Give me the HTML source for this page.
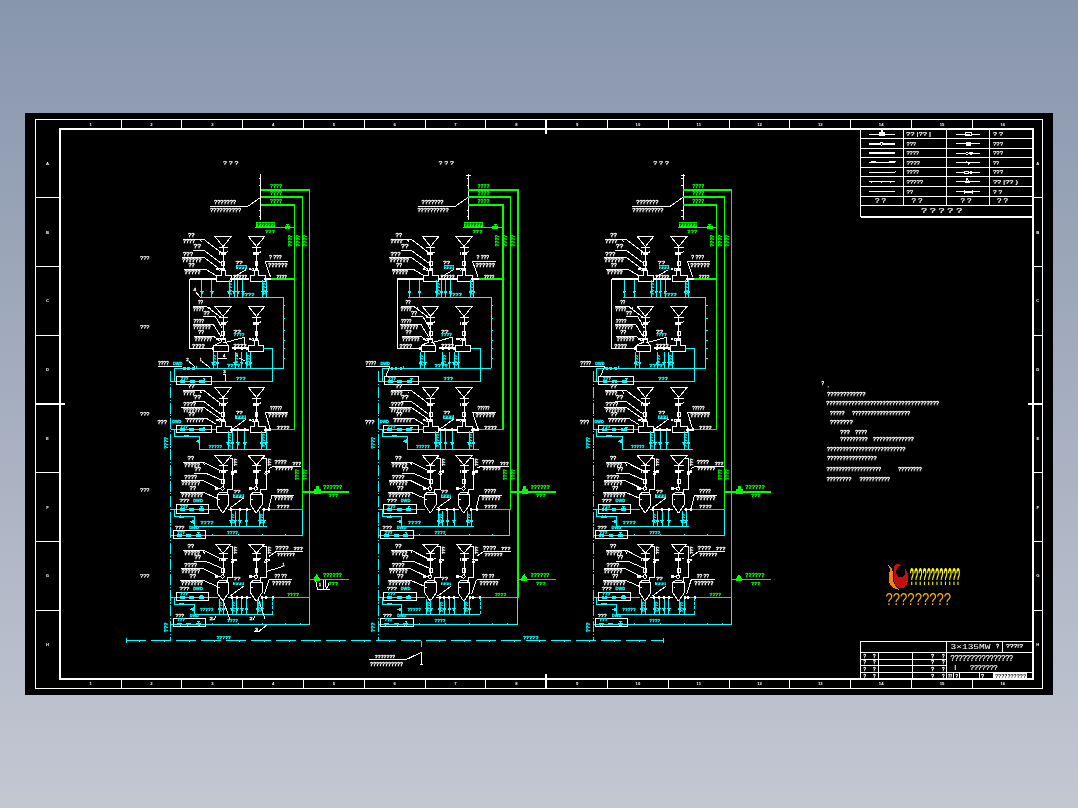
<!DOCTYPE html>
<html lang="zh"><head><meta charset="utf-8"><title>3×135MW</title>
<style>
html,body{margin:0;padding:0;}
body{width:1078px;height:808px;overflow:hidden;background:linear-gradient(180deg,#8896ad 0%,#c3c7d2 100%);font-family:"Liberation Sans", sans-serif;}
#sheet{position:absolute;left:25px;top:113px;width:1028px;height:582px;background:#000;}
svg{position:absolute;left:0;top:0;font-family:"Liberation Sans", sans-serif;will-change:transform;}
</style></head><body>
<div id="sheet"></div>
<svg width="1078" height="808" viewBox="0 0 1078 808" shape-rendering="crispEdges">
<rect x="35.5" y="119.5" width="1007" height="569" stroke="#ffffff" stroke-width="1" fill="none"/>
<rect x="60.3" y="129.2" width="972.9" height="550" stroke="#ffffff" stroke-width="2" fill="none"/>
<line x1="121.11" y1="119.5" x2="121.11" y2="129.2" stroke="#ffffff" stroke-width="1"/>
<line x1="121.11" y1="679.2" x2="121.11" y2="688.5" stroke="#ffffff" stroke-width="1"/>
<line x1="181.91" y1="119.5" x2="181.91" y2="129.2" stroke="#ffffff" stroke-width="1"/>
<line x1="181.91" y1="679.2" x2="181.91" y2="688.5" stroke="#ffffff" stroke-width="1"/>
<line x1="242.72" y1="119.5" x2="242.72" y2="129.2" stroke="#ffffff" stroke-width="1"/>
<line x1="242.72" y1="679.2" x2="242.72" y2="688.5" stroke="#ffffff" stroke-width="1"/>
<line x1="303.53" y1="119.5" x2="303.53" y2="129.2" stroke="#ffffff" stroke-width="1"/>
<line x1="303.53" y1="679.2" x2="303.53" y2="688.5" stroke="#ffffff" stroke-width="1"/>
<line x1="364.33" y1="119.5" x2="364.33" y2="129.2" stroke="#ffffff" stroke-width="1"/>
<line x1="364.33" y1="679.2" x2="364.33" y2="688.5" stroke="#ffffff" stroke-width="1"/>
<line x1="425.14" y1="119.5" x2="425.14" y2="129.2" stroke="#ffffff" stroke-width="1"/>
<line x1="425.14" y1="679.2" x2="425.14" y2="688.5" stroke="#ffffff" stroke-width="1"/>
<line x1="485.94" y1="119.5" x2="485.94" y2="129.2" stroke="#ffffff" stroke-width="1"/>
<line x1="485.94" y1="679.2" x2="485.94" y2="688.5" stroke="#ffffff" stroke-width="1"/>
<line x1="546.75" y1="119.5" x2="546.75" y2="129.2" stroke="#ffffff" stroke-width="1"/>
<line x1="546.75" y1="679.2" x2="546.75" y2="688.5" stroke="#ffffff" stroke-width="1"/>
<line x1="607.56" y1="119.5" x2="607.56" y2="129.2" stroke="#ffffff" stroke-width="1"/>
<line x1="607.56" y1="679.2" x2="607.56" y2="688.5" stroke="#ffffff" stroke-width="1"/>
<line x1="668.36" y1="119.5" x2="668.36" y2="129.2" stroke="#ffffff" stroke-width="1"/>
<line x1="668.36" y1="679.2" x2="668.36" y2="688.5" stroke="#ffffff" stroke-width="1"/>
<line x1="729.17" y1="119.5" x2="729.17" y2="129.2" stroke="#ffffff" stroke-width="1"/>
<line x1="729.17" y1="679.2" x2="729.17" y2="688.5" stroke="#ffffff" stroke-width="1"/>
<line x1="789.98" y1="119.5" x2="789.98" y2="129.2" stroke="#ffffff" stroke-width="1"/>
<line x1="789.98" y1="679.2" x2="789.98" y2="688.5" stroke="#ffffff" stroke-width="1"/>
<line x1="850.78" y1="119.5" x2="850.78" y2="129.2" stroke="#ffffff" stroke-width="1"/>
<line x1="850.78" y1="679.2" x2="850.78" y2="688.5" stroke="#ffffff" stroke-width="1"/>
<line x1="911.59" y1="119.5" x2="911.59" y2="129.2" stroke="#ffffff" stroke-width="1"/>
<line x1="911.59" y1="679.2" x2="911.59" y2="688.5" stroke="#ffffff" stroke-width="1"/>
<line x1="972.39" y1="119.5" x2="972.39" y2="129.2" stroke="#ffffff" stroke-width="1"/>
<line x1="972.39" y1="679.2" x2="972.39" y2="688.5" stroke="#ffffff" stroke-width="1"/>
<line x1="35.5" y1="197.95" x2="60.3" y2="197.95" stroke="#ffffff" stroke-width="1"/>
<line x1="1033.2" y1="197.95" x2="1042.5" y2="197.95" stroke="#ffffff" stroke-width="1"/>
<line x1="35.5" y1="266.7" x2="60.3" y2="266.7" stroke="#ffffff" stroke-width="1"/>
<line x1="1033.2" y1="266.7" x2="1042.5" y2="266.7" stroke="#ffffff" stroke-width="1"/>
<line x1="35.5" y1="335.45" x2="60.3" y2="335.45" stroke="#ffffff" stroke-width="1"/>
<line x1="1033.2" y1="335.45" x2="1042.5" y2="335.45" stroke="#ffffff" stroke-width="1"/>
<line x1="35.5" y1="404.2" x2="60.3" y2="404.2" stroke="#ffffff" stroke-width="1"/>
<line x1="1033.2" y1="404.2" x2="1042.5" y2="404.2" stroke="#ffffff" stroke-width="1"/>
<line x1="35.5" y1="472.95" x2="60.3" y2="472.95" stroke="#ffffff" stroke-width="1"/>
<line x1="1033.2" y1="472.95" x2="1042.5" y2="472.95" stroke="#ffffff" stroke-width="1"/>
<line x1="35.5" y1="541.7" x2="60.3" y2="541.7" stroke="#ffffff" stroke-width="1"/>
<line x1="1033.2" y1="541.7" x2="1042.5" y2="541.7" stroke="#ffffff" stroke-width="1"/>
<line x1="35.5" y1="610.45" x2="60.3" y2="610.45" stroke="#ffffff" stroke-width="1"/>
<line x1="1033.2" y1="610.45" x2="1042.5" y2="610.45" stroke="#ffffff" stroke-width="1"/>
<line x1="546.3" y1="119.5" x2="546.3" y2="134" stroke="#ffffff" stroke-width="2"/>
<line x1="546.3" y1="674" x2="546.3" y2="688.5" stroke="#ffffff" stroke-width="2"/>
<line x1="35.5" y1="404" x2="65" y2="404" stroke="#ffffff" stroke-width="2"/>
<line x1="1028" y1="404" x2="1042.5" y2="404" stroke="#ffffff" stroke-width="2"/>
<text x="90.7" y="125.8" font-size="4.2" fill="#fff" text-anchor="middle" font-weight="bold">1</text>
<text x="90.7" y="685.4" font-size="4.2" fill="#fff" text-anchor="middle" font-weight="bold">1</text>
<text x="151.51" y="125.8" font-size="4.2" fill="#fff" text-anchor="middle" font-weight="bold">2</text>
<text x="151.51" y="685.4" font-size="4.2" fill="#fff" text-anchor="middle" font-weight="bold">2</text>
<text x="212.32" y="125.8" font-size="4.2" fill="#fff" text-anchor="middle" font-weight="bold">3</text>
<text x="212.32" y="685.4" font-size="4.2" fill="#fff" text-anchor="middle" font-weight="bold">3</text>
<text x="273.12" y="125.8" font-size="4.2" fill="#fff" text-anchor="middle" font-weight="bold">4</text>
<text x="273.12" y="685.4" font-size="4.2" fill="#fff" text-anchor="middle" font-weight="bold">4</text>
<text x="333.93" y="125.8" font-size="4.2" fill="#fff" text-anchor="middle" font-weight="bold">5</text>
<text x="333.93" y="685.4" font-size="4.2" fill="#fff" text-anchor="middle" font-weight="bold">5</text>
<text x="394.73" y="125.8" font-size="4.2" fill="#fff" text-anchor="middle" font-weight="bold">6</text>
<text x="394.73" y="685.4" font-size="4.2" fill="#fff" text-anchor="middle" font-weight="bold">6</text>
<text x="455.54" y="125.8" font-size="4.2" fill="#fff" text-anchor="middle" font-weight="bold">7</text>
<text x="455.54" y="685.4" font-size="4.2" fill="#fff" text-anchor="middle" font-weight="bold">7</text>
<text x="516.35" y="125.8" font-size="4.2" fill="#fff" text-anchor="middle" font-weight="bold">8</text>
<text x="516.35" y="685.4" font-size="4.2" fill="#fff" text-anchor="middle" font-weight="bold">8</text>
<text x="577.15" y="125.8" font-size="4.2" fill="#fff" text-anchor="middle" font-weight="bold">9</text>
<text x="577.15" y="685.4" font-size="4.2" fill="#fff" text-anchor="middle" font-weight="bold">9</text>
<text x="637.96" y="125.8" font-size="4.2" fill="#fff" text-anchor="middle" font-weight="bold">10</text>
<text x="637.96" y="685.4" font-size="4.2" fill="#fff" text-anchor="middle" font-weight="bold">10</text>
<text x="698.77" y="125.8" font-size="4.2" fill="#fff" text-anchor="middle" font-weight="bold">11</text>
<text x="698.77" y="685.4" font-size="4.2" fill="#fff" text-anchor="middle" font-weight="bold">11</text>
<text x="759.57" y="125.8" font-size="4.2" fill="#fff" text-anchor="middle" font-weight="bold">12</text>
<text x="759.57" y="685.4" font-size="4.2" fill="#fff" text-anchor="middle" font-weight="bold">12</text>
<text x="820.38" y="125.8" font-size="4.2" fill="#fff" text-anchor="middle" font-weight="bold">13</text>
<text x="820.38" y="685.4" font-size="4.2" fill="#fff" text-anchor="middle" font-weight="bold">13</text>
<text x="881.18" y="125.8" font-size="4.2" fill="#fff" text-anchor="middle" font-weight="bold">14</text>
<text x="881.18" y="685.4" font-size="4.2" fill="#fff" text-anchor="middle" font-weight="bold">14</text>
<text x="941.99" y="125.8" font-size="4.2" fill="#fff" text-anchor="middle" font-weight="bold">15</text>
<text x="941.99" y="685.4" font-size="4.2" fill="#fff" text-anchor="middle" font-weight="bold">15</text>
<text x="1002.8" y="125.8" font-size="4.2" fill="#fff" text-anchor="middle" font-weight="bold">16</text>
<text x="1002.8" y="685.4" font-size="4.2" fill="#fff" text-anchor="middle" font-weight="bold">16</text>
<text x="47.5" y="164.97" font-size="4.2" fill="#fff" text-anchor="middle" font-weight="bold">A</text>
<text x="1037.8" y="164.97" font-size="4.2" fill="#fff" text-anchor="middle" font-weight="bold">A</text>
<text x="47.5" y="233.72" font-size="4.2" fill="#fff" text-anchor="middle" font-weight="bold">B</text>
<text x="1037.8" y="233.72" font-size="4.2" fill="#fff" text-anchor="middle" font-weight="bold">B</text>
<text x="47.5" y="302.47" font-size="4.2" fill="#fff" text-anchor="middle" font-weight="bold">C</text>
<text x="1037.8" y="302.47" font-size="4.2" fill="#fff" text-anchor="middle" font-weight="bold">C</text>
<text x="47.5" y="371.22" font-size="4.2" fill="#fff" text-anchor="middle" font-weight="bold">D</text>
<text x="1037.8" y="371.22" font-size="4.2" fill="#fff" text-anchor="middle" font-weight="bold">D</text>
<text x="47.5" y="439.97" font-size="4.2" fill="#fff" text-anchor="middle" font-weight="bold">E</text>
<text x="1037.8" y="439.97" font-size="4.2" fill="#fff" text-anchor="middle" font-weight="bold">E</text>
<text x="47.5" y="508.72" font-size="4.2" fill="#fff" text-anchor="middle" font-weight="bold">F</text>
<text x="1037.8" y="508.72" font-size="4.2" fill="#fff" text-anchor="middle" font-weight="bold">F</text>
<text x="47.5" y="577.48" font-size="4.2" fill="#fff" text-anchor="middle" font-weight="bold">G</text>
<text x="1037.8" y="577.48" font-size="4.2" fill="#fff" text-anchor="middle" font-weight="bold">G</text>
<text x="47.5" y="646.23" font-size="4.2" fill="#fff" text-anchor="middle" font-weight="bold">H</text>
<text x="1037.8" y="646.23" font-size="4.2" fill="#fff" text-anchor="middle" font-weight="bold">H</text>
<line x1="860.5" y1="129.2" x2="860.5" y2="216.8" stroke="#ffffff" stroke-width="1.2"/>
<line x1="903.5" y1="129.2" x2="903.5" y2="205.5" stroke="#ffffff" stroke-width="1"/>
<line x1="946.5" y1="129.2" x2="946.5" y2="205.5" stroke="#ffffff" stroke-width="1"/>
<line x1="989.5" y1="129.2" x2="989.5" y2="205.5" stroke="#ffffff" stroke-width="1"/>
<line x1="860.5" y1="138.5" x2="1033.2" y2="138.5" stroke="#ffffff" stroke-width="1"/>
<line x1="860.5" y1="148.5" x2="1033.2" y2="148.5" stroke="#ffffff" stroke-width="1"/>
<line x1="860.5" y1="157.5" x2="1033.2" y2="157.5" stroke="#ffffff" stroke-width="1"/>
<line x1="860.5" y1="167.5" x2="1033.2" y2="167.5" stroke="#ffffff" stroke-width="1"/>
<line x1="860.5" y1="176.5" x2="1033.2" y2="176.5" stroke="#ffffff" stroke-width="1"/>
<line x1="860.5" y1="186.5" x2="1033.2" y2="186.5" stroke="#ffffff" stroke-width="1"/>
<line x1="860.5" y1="196.5" x2="1033.2" y2="196.5" stroke="#ffffff" stroke-width="1"/>
<line x1="860.5" y1="205.5" x2="1033.2" y2="205.5" stroke="#ffffff" stroke-width="1"/>
<line x1="860.5" y1="216.8" x2="1033.2" y2="216.8" stroke="#ffffff" stroke-width="1.6"/>
<line x1="869" y1="134.15" x2="895" y2="134.15" stroke="#ffffff" stroke-width="1"/>
<line x1="956" y1="134.15" x2="980" y2="134.15" stroke="#ffffff" stroke-width="1"/>
<line x1="869" y1="143.8" x2="895" y2="143.8" stroke="#ffffff" stroke-width="1.4"/>
<line x1="956" y1="143.8" x2="980" y2="143.8" stroke="#ffffff" stroke-width="1"/>
<line x1="869" y1="153.3" x2="895" y2="153.3" stroke="#ffffff" stroke-width="1.8"/>
<line x1="956" y1="153.3" x2="980" y2="153.3" stroke="#ffffff" stroke-width="1"/>
<line x1="869" y1="162.8" x2="895" y2="162.8" stroke="#ffffff" stroke-width="1"/>
<line x1="956" y1="162.8" x2="980" y2="162.8" stroke="#ffffff" stroke-width="1"/>
<line x1="869" y1="172.3" x2="895" y2="172.3" stroke="#ffffff" stroke-width="1"/>
<line x1="956" y1="172.3" x2="980" y2="172.3" stroke="#ffffff" stroke-width="1"/>
<line x1="869" y1="181.8" x2="895" y2="181.8" stroke="#ffffff" stroke-width="1"/>
<line x1="956" y1="181.8" x2="980" y2="181.8" stroke="#ffffff" stroke-width="1"/>
<line x1="869" y1="191.8" x2="895" y2="191.8" stroke="#ffffff" stroke-width="1"/>
<line x1="956" y1="191.8" x2="980" y2="191.8" stroke="#ffffff" stroke-width="1"/>
<rect x="879.5" y="132.15" width="5" height="3.5" stroke="#ffffff" stroke-width="1" fill="#ffffff"/>
<line x1="882" y1="129.65" x2="882" y2="134.15" stroke="#ffffff" stroke-width="1.4"/>
<circle cx="881.5" cy="143.8" r="1.5" stroke="#ffffff" stroke-width="1" fill="#000"/>
<line x1="871" y1="161.8" x2="876" y2="161.8" stroke="#ffffff" stroke-width="1"/>
<line x1="889" y1="161.8" x2="896" y2="161.8" stroke="#ffffff" stroke-width="1"/>
<line x1="895" y1="170.8" x2="895" y2="172.3" stroke="#ffffff" stroke-width="1"/>
<line x1="871" y1="181.8" x2="871" y2="183.3" stroke="#ffffff" stroke-width="1"/>
<line x1="881.5" y1="181.8" x2="881.5" y2="183.3" stroke="#ffffff" stroke-width="1"/>
<line x1="890" y1="181.8" x2="890" y2="183.3" stroke="#ffffff" stroke-width="1"/>
<rect x="965" y="132.55" width="6" height="3.2" stroke="#ffffff" stroke-width="1" fill="#000"/>
<line x1="966" y1="134.15" x2="970" y2="134.15" stroke="#ffffff" stroke-width="1"/>
<rect x="966" y="142" width="4.5" height="3.6" stroke="#ffffff" stroke-width="1" fill="#ffffff"/>
<circle cx="967" cy="153.3" r="1.2" stroke="#ffffff" stroke-width="1" fill="#000"/>
<circle cx="971" cy="153.3" r="1.3" stroke="#ffffff" stroke-width="1" fill="#ffffff"/>
<polyline points="966.5,161.3 968.5,164 970,162.8" stroke="#ffffff" stroke-width="1" fill="none"/>
<rect x="964.5" y="171" width="3.5" height="2.6" stroke="#ffffff" stroke-width="1" fill="#000"/>
<circle cx="971" cy="172.3" r="1.1" stroke="#ffffff" stroke-width="1" fill="#ffffff"/>
<polyline points="964.5,182.8 969.5,182.8 967,177.8 966,182.8" stroke="#ffffff" stroke-width="1" fill="none"/>
<line x1="964.5" y1="189.8" x2="964.5" y2="193.8" stroke="#ffffff" stroke-width="1"/>
<line x1="972" y1="189.8" x2="972" y2="193.8" stroke="#ffffff" stroke-width="1"/>
<line x1="964.5" y1="191.8" x2="972" y2="191.8" stroke="#ffffff" stroke-width="2"/>
<text x="906" y="136.18" font-size="6.2" fill="#ffffff" textLength="25" lengthAdjust="spacingAndGlyphs" stroke="#ffffff" stroke-width="0.22">?? |?? |</text>
<text x="993" y="136.18" font-size="6.2" fill="#ffffff" textLength="10" lengthAdjust="spacingAndGlyphs" stroke="#ffffff" stroke-width="0.22">? ?</text>
<text x="906.5" y="145.83" font-size="6.2" fill="#ffffff" textLength="9.5" lengthAdjust="spacingAndGlyphs" stroke="#ffffff" stroke-width="0.22">???</text>
<text x="993" y="145.83" font-size="6.2" fill="#ffffff" textLength="10" lengthAdjust="spacingAndGlyphs" stroke="#ffffff" stroke-width="0.22">???</text>
<text x="906.5" y="155.33" font-size="6.2" fill="#ffffff" textLength="12.5" lengthAdjust="spacingAndGlyphs" stroke="#ffffff" stroke-width="0.22">????</text>
<text x="993" y="155.33" font-size="6.2" fill="#ffffff" textLength="10" lengthAdjust="spacingAndGlyphs" stroke="#ffffff" stroke-width="0.22">???</text>
<text x="906.5" y="164.83" font-size="6.2" fill="#ffffff" textLength="13.5" lengthAdjust="spacingAndGlyphs" stroke="#ffffff" stroke-width="0.22">????</text>
<text x="993" y="164.83" font-size="6.2" fill="#ffffff" textLength="6" lengthAdjust="spacingAndGlyphs" stroke="#ffffff" stroke-width="0.22">??</text>
<text x="906.5" y="174.33" font-size="6.2" fill="#ffffff" textLength="12.5" lengthAdjust="spacingAndGlyphs" stroke="#ffffff" stroke-width="0.22">????</text>
<text x="993" y="174.33" font-size="6.2" fill="#ffffff" textLength="10" lengthAdjust="spacingAndGlyphs" stroke="#ffffff" stroke-width="0.22">???</text>
<text x="906.5" y="183.83" font-size="6.2" fill="#ffffff" textLength="16.5" lengthAdjust="spacingAndGlyphs" stroke="#ffffff" stroke-width="0.22">?????</text>
<text x="993" y="183.83" font-size="6.2" fill="#ffffff" textLength="25" lengthAdjust="spacingAndGlyphs" stroke="#ffffff" stroke-width="0.22">?? |?? )</text>
<text x="906.5" y="193.83" font-size="6.2" fill="#ffffff" textLength="6.5" lengthAdjust="spacingAndGlyphs" stroke="#ffffff" stroke-width="0.22">??</text>
<text x="993" y="193.83" font-size="6.2" fill="#ffffff" textLength="9" lengthAdjust="spacingAndGlyphs" stroke="#ffffff" stroke-width="0.22">? ?</text>
<text x="875" y="203.4" font-size="6.4" fill="#ffffff" textLength="11" lengthAdjust="spacingAndGlyphs" stroke="#ffffff" stroke-width="0.22">? ?</text>
<text x="911.5" y="203.4" font-size="6.4" fill="#ffffff" textLength="11" lengthAdjust="spacingAndGlyphs" stroke="#ffffff" stroke-width="0.22">? ?</text>
<text x="960.5" y="203.4" font-size="6.4" fill="#ffffff" textLength="11" lengthAdjust="spacingAndGlyphs" stroke="#ffffff" stroke-width="0.22">? ?</text>
<text x="997" y="203.4" font-size="6.4" fill="#ffffff" textLength="11" lengthAdjust="spacingAndGlyphs" stroke="#ffffff" stroke-width="0.22">? ?</text>
<text x="921" y="213.43" font-size="6.6" fill="#ffffff" textLength="41" lengthAdjust="spacingAndGlyphs" stroke="#ffffff" stroke-width="0.22">? ? ? ? ?</text>
<line x1="860.5" y1="641.5" x2="1033.2" y2="641.5" stroke="#ffffff" stroke-width="1.6"/>
<line x1="860.5" y1="640.7" x2="860.5" y2="679.2" stroke="#ffffff" stroke-width="1.6"/>
<line x1="946.8" y1="641.5" x2="946.8" y2="679.2" stroke="#ffffff" stroke-width="1.2"/>
<line x1="1002.3" y1="641.5" x2="1002.3" y2="652.3" stroke="#ffffff" stroke-width="1"/>
<line x1="860.5" y1="652.3" x2="1033.2" y2="652.3" stroke="#ffffff" stroke-width="1.2"/>
<line x1="860.5" y1="659" x2="946.8" y2="659" stroke="#ffffff" stroke-width="1"/>
<line x1="860.5" y1="665.6" x2="946.8" y2="665.6" stroke="#ffffff" stroke-width="1"/>
<line x1="860.5" y1="672.3" x2="1033.2" y2="672.3" stroke="#ffffff" stroke-width="1"/>
<line x1="878.2" y1="652.3" x2="878.2" y2="679.2" stroke="#ffffff" stroke-width="1"/>
<line x1="912.5" y1="652.3" x2="912.5" y2="679.2" stroke="#ffffff" stroke-width="1"/>
<line x1="953.5" y1="672.3" x2="953.5" y2="679.2" stroke="#ffffff" stroke-width="1"/>
<line x1="959.5" y1="672.3" x2="959.5" y2="679.2" stroke="#ffffff" stroke-width="1"/>
<line x1="979.4" y1="672.3" x2="979.4" y2="679.2" stroke="#ffffff" stroke-width="1"/>
<line x1="993.2" y1="672.3" x2="993.2" y2="679.2" stroke="#ffffff" stroke-width="1"/>
<rect x="994" y="673.3" width="33" height="5.1" stroke="#ffffff" stroke-width="0" fill="#ffffff"/>
<text x="995" y="677.6" font-size="5" fill="#000" textLength="31" lengthAdjust="spacingAndGlyphs" font-weight="bold">??????????</text>
<text x="863.5" y="657.57" font-size="4.5" fill="#ffffff" textLength="2.5" lengthAdjust="spacingAndGlyphs" stroke="#ffffff" stroke-width="0.3">?</text>
<text x="873" y="657.57" font-size="4.5" fill="#ffffff" textLength="2.5" lengthAdjust="spacingAndGlyphs" stroke="#ffffff" stroke-width="0.3">?</text>
<text x="931" y="657.57" font-size="4.5" fill="#ffffff" textLength="3" lengthAdjust="spacingAndGlyphs" stroke="#ffffff" stroke-width="0.3">?</text>
<text x="942" y="657.57" font-size="4.5" fill="#ffffff" textLength="2.5" lengthAdjust="spacingAndGlyphs" stroke="#ffffff" stroke-width="0.3">?</text>
<text x="863.5" y="664.22" font-size="4.5" fill="#ffffff" textLength="2.5" lengthAdjust="spacingAndGlyphs" stroke="#ffffff" stroke-width="0.3">?</text>
<text x="873" y="664.22" font-size="4.5" fill="#ffffff" textLength="2.5" lengthAdjust="spacingAndGlyphs" stroke="#ffffff" stroke-width="0.3">?</text>
<text x="931" y="664.22" font-size="4.5" fill="#ffffff" textLength="3" lengthAdjust="spacingAndGlyphs" stroke="#ffffff" stroke-width="0.3">?</text>
<text x="942" y="664.22" font-size="4.5" fill="#ffffff" textLength="2.5" lengthAdjust="spacingAndGlyphs" stroke="#ffffff" stroke-width="0.3">?</text>
<text x="863.5" y="670.87" font-size="4.5" fill="#ffffff" textLength="2.5" lengthAdjust="spacingAndGlyphs" stroke="#ffffff" stroke-width="0.3">?</text>
<text x="873" y="670.87" font-size="4.5" fill="#ffffff" textLength="2.5" lengthAdjust="spacingAndGlyphs" stroke="#ffffff" stroke-width="0.3">?</text>
<text x="931" y="670.87" font-size="4.5" fill="#ffffff" textLength="3" lengthAdjust="spacingAndGlyphs" stroke="#ffffff" stroke-width="0.3">?</text>
<text x="942" y="670.87" font-size="4.5" fill="#ffffff" textLength="2.5" lengthAdjust="spacingAndGlyphs" stroke="#ffffff" stroke-width="0.3">?</text>
<text x="863.5" y="677.67" font-size="4.5" fill="#ffffff" textLength="2.5" lengthAdjust="spacingAndGlyphs" stroke="#ffffff" stroke-width="0.3">?</text>
<text x="873" y="677.67" font-size="4.5" fill="#ffffff" textLength="2.5" lengthAdjust="spacingAndGlyphs" stroke="#ffffff" stroke-width="0.3">?</text>
<text x="931" y="677.67" font-size="4.5" fill="#ffffff" textLength="3" lengthAdjust="spacingAndGlyphs" stroke="#ffffff" stroke-width="0.3">?</text>
<text x="942" y="677.67" font-size="4.5" fill="#ffffff" textLength="2.5" lengthAdjust="spacingAndGlyphs" stroke="#ffffff" stroke-width="0.3">?</text>
<text x="948" y="677.62" font-size="4.5" fill="#ffffff" textLength="4" lengthAdjust="spacingAndGlyphs" stroke="#ffffff" stroke-width="0.3">??</text>
<text x="955.5" y="677.62" font-size="4.5" fill="#ffffff" textLength="2.5" lengthAdjust="spacingAndGlyphs" stroke="#ffffff" stroke-width="0.3">?</text>
<text x="981" y="677.62" font-size="4.5" fill="#ffffff" textLength="3" lengthAdjust="spacingAndGlyphs" stroke="#ffffff" stroke-width="0.3">?</text>
<text x="950.5" y="649.3" font-size="8" fill="#fff" textLength="40" lengthAdjust="spacingAndGlyphs" font-family='"Liberation Mono", monospace'>3×135MW</text>
<text x="996" y="648.18" font-size="5.5" fill="#ffffff" textLength="3" lengthAdjust="spacingAndGlyphs" stroke="#ffffff" stroke-width="0.3">?</text>
<text x="1006" y="648.36" font-size="6" fill="#ffffff" textLength="17" lengthAdjust="spacingAndGlyphs" stroke="#ffffff" stroke-width="0.22">???!?</text>
<text x="950.5" y="661" font-size="8.6" fill="#ffffff" textLength="62.5" lengthAdjust="spacingAndGlyphs" stroke="#ffffff" stroke-width="0.22">????????????????</text>
<text x="954.4" y="669.52" font-size="7" fill="#ffffff" textLength="1.6" lengthAdjust="spacingAndGlyphs" stroke="#ffffff" stroke-width="0.22">i</text>
<text x="970" y="669.74" font-size="7.6" fill="#ffffff" textLength="27.5" lengthAdjust="spacingAndGlyphs" stroke="#ffffff" stroke-width="0.22">???????</text>
<text x="821.5" y="385.12" font-size="4.5" fill="#ffffff" textLength="2.5" lengthAdjust="spacingAndGlyphs" stroke="#ffffff" stroke-width="0.3">?</text>
<text x="827.5" y="387.3" font-size="3.6" fill="#ffffff" textLength="1.5" lengthAdjust="spacingAndGlyphs" stroke="#ffffff" stroke-width="0.3">.</text>
<text x="827" y="395.83" font-size="4.68" fill="#ffffff" textLength="38.4" lengthAdjust="spacingAndGlyphs" stroke="#ffffff" stroke-width="0.3">????????????</text>
<text x="826" y="405.28" font-size="4.68" fill="#ffffff" textLength="113" lengthAdjust="spacingAndGlyphs" stroke="#ffffff" stroke-width="0.3">????????????????????????????????????</text>
<text x="829.7" y="415.13" font-size="4.68" fill="#ffffff" textLength="14.9" lengthAdjust="spacingAndGlyphs" stroke="#ffffff" stroke-width="0.3">?????</text>
<text x="852" y="415.13" font-size="4.68" fill="#ffffff" textLength="58" lengthAdjust="spacingAndGlyphs" stroke="#ffffff" stroke-width="0.3">???????????????????</text>
<text x="829.7" y="424.28" font-size="4.68" fill="#ffffff" textLength="23" lengthAdjust="spacingAndGlyphs" stroke="#ffffff" stroke-width="0.3">???????</text>
<text x="840" y="434.48" font-size="4.68" fill="#ffffff" textLength="9.8" lengthAdjust="spacingAndGlyphs" stroke="#ffffff" stroke-width="0.3">???</text>
<text x="855" y="434.48" font-size="4.68" fill="#ffffff" textLength="11.9" lengthAdjust="spacingAndGlyphs" stroke="#ffffff" stroke-width="0.3">????</text>
<text x="840" y="440.98" font-size="4.68" fill="#ffffff" textLength="27.6" lengthAdjust="spacingAndGlyphs" stroke="#ffffff" stroke-width="0.3">?????????</text>
<text x="872.8" y="440.98" font-size="4.68" fill="#ffffff" textLength="40.9" lengthAdjust="spacingAndGlyphs" stroke="#ffffff" stroke-width="0.3">?????????????</text>
<text x="826.7" y="451.03" font-size="4.68" fill="#ffffff" textLength="78.8" lengthAdjust="spacingAndGlyphs" stroke="#ffffff" stroke-width="0.3">?????????????????????????</text>
<text x="827" y="460.13" font-size="4.68" fill="#ffffff" textLength="49.5" lengthAdjust="spacingAndGlyphs" stroke="#ffffff" stroke-width="0.3">????????????????</text>
<text x="826.4" y="470.98" font-size="4.68" fill="#ffffff" textLength="54.6" lengthAdjust="spacingAndGlyphs" stroke="#ffffff" stroke-width="0.3">??????????????????</text>
<text x="898" y="470.98" font-size="4.68" fill="#ffffff" textLength="23.8" lengthAdjust="spacingAndGlyphs" stroke="#ffffff" stroke-width="0.3">????????</text>
<text x="826.4" y="480.73" font-size="4.68" fill="#ffffff" textLength="24.9" lengthAdjust="spacingAndGlyphs" stroke="#ffffff" stroke-width="0.3">????????</text>
<text x="859.4" y="480.73" font-size="4.68" fill="#ffffff" textLength="30.5" lengthAdjust="spacingAndGlyphs" stroke="#ffffff" stroke-width="0.3">??????????</text>
<path d="M888.3 565.2 C892 567 893.5 571 892.8 577 C892.5 582 895 587 899.8 589.8 C893 589.5 888.6 585 888.6 578.5 C888.6 573 891.5 569.5 888.3 565.2Z" fill="#f08318"/>
<path d="M893.8 566.5 C896 563.2 900.5 563.2 902.3 566.5 C899 565.6 896.5 567.5 896.2 571 C895.8 576 899 578.6 902.5 576.8 C905.3 575.3 906 571.5 905.2 568.5 C908 571.5 908.8 577 907.6 582 C906.4 587 902.6 589.3 899.2 588.2 C895.4 586.8 893.6 582 893.9 577 C894.1 573 895.2 569.5 893.8 566.5Z" fill="#c4100c"/>
<text x="909.8" y="585.2" font-size="24" fill="#ffff00" font-weight="bold" textLength="50.5" lengthAdjust="spacingAndGlyphs">????????????</text>
<text x="885.5" y="605.1" font-size="17" fill="#ffb000" textLength="65.6" lengthAdjust="spacingAndGlyphs">?????????</text>
<g transform="translate(0 0)">
<text x="223" y="165.36" font-size="6" fill="#ffffff" textLength="15.5" lengthAdjust="spacingAndGlyphs" stroke="#ffffff" stroke-width="0.22">? ? ?</text>
<line x1="260.7" y1="174.4" x2="260.7" y2="219.5" stroke="#ffffff" stroke-width="1"/>
<line x1="259" y1="178.5" x2="260.7" y2="178.5" stroke="#ffffff" stroke-width="1"/>
<line x1="259" y1="185" x2="260.7" y2="185" stroke="#ffffff" stroke-width="1"/>
<line x1="259" y1="210.5" x2="260.7" y2="210.5" stroke="#ffffff" stroke-width="1"/>
<line x1="259" y1="216" x2="260.7" y2="216" stroke="#ffffff" stroke-width="1"/>
<line x1="260.7" y1="190" x2="310" y2="190" stroke="#00ff00" stroke-width="2"/>
<line x1="260.7" y1="197" x2="303" y2="197" stroke="#00ff00" stroke-width="2"/>
<line x1="260.7" y1="205" x2="295" y2="205" stroke="#00ff00" stroke-width="2"/>
<line x1="309.5" y1="189" x2="309.5" y2="597.6" stroke="#00ff00" stroke-width="1"/>
<line x1="302.5" y1="196" x2="302.5" y2="509.5" stroke="#00ff00" stroke-width="1"/>
<line x1="294.5" y1="204" x2="294.5" y2="429.6" stroke="#00ff00" stroke-width="1"/>
<text x="270" y="187.82" font-size="4.5" fill="#00ff00" textLength="12" lengthAdjust="spacingAndGlyphs" font-weight="bold" stroke="#00ff00" stroke-width="0.3">????</text>
<text x="270" y="195.42" font-size="4.5" fill="#00ff00" textLength="12" lengthAdjust="spacingAndGlyphs" font-weight="bold" stroke="#00ff00" stroke-width="0.3">????</text>
<text x="270" y="202.82" font-size="4.5" fill="#00ff00" textLength="12" lengthAdjust="spacingAndGlyphs" font-weight="bold" stroke="#00ff00" stroke-width="0.3">????</text>
<text x="214" y="204.22" font-size="4.5" fill="#ffffff" textLength="22" lengthAdjust="spacingAndGlyphs" stroke="#ffffff" stroke-width="0.3">???????</text>
<line x1="210" y1="206.5" x2="247.6" y2="206.5" stroke="#ffffff" stroke-width="1"/>
<line x1="247.6" y1="206.5" x2="260.7" y2="197.3" stroke="#ffffff" stroke-width="1"/>
<text x="210" y="212.22" font-size="4.5" fill="#ffffff" textLength="31" lengthAdjust="spacingAndGlyphs" stroke="#ffffff" stroke-width="0.3">??????????</text>
<line x1="255.4" y1="227.5" x2="294.4" y2="227.5" stroke="#00ff00" stroke-width="1"/>
<rect x="256.4" y="222.4" width="18.6" height="4.2" stroke="#00ff00" stroke-width="0" fill="#00ff00"/>
<text x="257" y="226.09" font-size="4.14" fill="#003300" textLength="17.6" lengthAdjust="spacingAndGlyphs" font-weight="bold" stroke="#003300" stroke-width="0.3">??????</text>
<circle cx="286" cy="227.5" r="1.1" stroke="#00ff00" stroke-width="1" fill="none"/>
<circle cx="289" cy="227.5" r="1.1" stroke="#00ff00" stroke-width="1" fill="none"/>
<line x1="287.5" y1="224.6" x2="287.5" y2="227.5" stroke="#00ff00" stroke-width="1"/>
<line x1="286" y1="224.6" x2="289" y2="224.6" stroke="#00ff00" stroke-width="1"/>
<text x="265" y="232.56" font-size="4.32" fill="#00ff00" textLength="10" lengthAdjust="spacingAndGlyphs" font-weight="bold" stroke="#00ff00" stroke-width="0.3">???</text>
<text transform="translate(291.86 246.4) rotate(-90)" font-size="4.6" fill="#00ff00" stroke="#00ff00" stroke-width="0.35" textLength="11.7" lengthAdjust="spacingAndGlyphs" font-weight="bold">????</text>
<text transform="translate(299.56 246.4) rotate(-90)" font-size="4.6" fill="#00ff00" stroke="#00ff00" stroke-width="0.35" textLength="11.7" lengthAdjust="spacingAndGlyphs" font-weight="bold">????</text>
<text transform="translate(307.06 246.4) rotate(-90)" font-size="4.6" fill="#00ff00" stroke="#00ff00" stroke-width="0.35" textLength="11.7" lengthAdjust="spacingAndGlyphs" font-weight="bold">????</text>
<polygon points="215.1,236.7 231.1,236.7 223.1,246.5" stroke="#ffffff" stroke-width="1" fill="none"/>
<line x1="223.1" y1="246.5" x2="223.1" y2="270" stroke="#ffffff" stroke-width="1"/>
<line x1="218.7" y1="247.4" x2="227.9" y2="247.4" stroke="#ffffff" stroke-width="1"/>
<rect x="220.7" y="251.9" width="5" height="2.8" stroke="#ffffff" stroke-width="0" fill="#ffffff"/>
<line x1="219.7" y1="251.9" x2="219.7" y2="254.7" stroke="#ffffff" stroke-width="1"/>
<line x1="225.7" y1="252.7" x2="227.9" y2="251.7" stroke="#ffffff" stroke-width="1"/>
<rect x="221.7" y="261.5" width="2.8" height="4" stroke="#ffffff" stroke-width="1" fill="none"/>
<polygon points="216.25,281.2 216.25,275.6 221.2,275.6 221.2,270 225,270 225,275.6 231.05,275.6 231.05,281.2" stroke="#ffffff" stroke-width="1" fill="none"/>
<rect x="215.5" y="268" width="2.2" height="2.4" stroke="#ffffff" stroke-width="0" fill="#ffffff"/>
<circle cx="219.5" cy="269.2" r="1.1" stroke="#ffffff" stroke-width="1" fill="none"/>
<rect x="221.2" y="267.8" width="3.8" height="2.6" stroke="#ffffff" stroke-width="0" fill="#ffffff"/>
<polygon points="248.5,236.7 264.5,236.7 256.5,246.5" stroke="#ffffff" stroke-width="1" fill="none"/>
<line x1="256.5" y1="246.5" x2="256.5" y2="270" stroke="#ffffff" stroke-width="1"/>
<line x1="252.1" y1="247.4" x2="261.3" y2="247.4" stroke="#ffffff" stroke-width="1"/>
<rect x="254.1" y="251.9" width="5" height="2.8" stroke="#ffffff" stroke-width="0" fill="#ffffff"/>
<line x1="253.1" y1="251.9" x2="253.1" y2="254.7" stroke="#ffffff" stroke-width="1"/>
<line x1="259.1" y1="252.7" x2="261.3" y2="251.7" stroke="#ffffff" stroke-width="1"/>
<rect x="255.1" y="261.5" width="2.8" height="4" stroke="#ffffff" stroke-width="1" fill="none"/>
<polygon points="250.25,281.2 250.25,275.6 254.6,275.6 254.6,270 258.4,270 258.4,275.6 265.05,275.6 265.05,281.2" stroke="#ffffff" stroke-width="1" fill="none"/>
<rect x="248.9" y="268" width="2.2" height="2.4" stroke="#ffffff" stroke-width="0" fill="#ffffff"/>
<circle cx="252.9" cy="269.2" r="1.1" stroke="#ffffff" stroke-width="1" fill="none"/>
<rect x="254.6" y="267.8" width="3.8" height="2.6" stroke="#ffffff" stroke-width="0" fill="#ffffff"/>
<polygon points="215.1,306.6 231.1,306.6 223.1,316.4" stroke="#ffffff" stroke-width="1" fill="none"/>
<line x1="223.1" y1="316.4" x2="223.1" y2="339.9" stroke="#ffffff" stroke-width="1"/>
<line x1="218.7" y1="317.3" x2="227.9" y2="317.3" stroke="#ffffff" stroke-width="1"/>
<rect x="220.7" y="321.8" width="5" height="2.8" stroke="#ffffff" stroke-width="0" fill="#ffffff"/>
<line x1="219.7" y1="321.8" x2="219.7" y2="324.6" stroke="#ffffff" stroke-width="1"/>
<line x1="225.7" y1="322.6" x2="227.9" y2="321.6" stroke="#ffffff" stroke-width="1"/>
<rect x="221.7" y="331.4" width="2.8" height="4" stroke="#ffffff" stroke-width="1" fill="none"/>
<polygon points="213.85,351.4 213.85,345.6 221.2,342 221.2,338 225,338 225,342 228.25,345.6 228.25,351.4" stroke="#ffffff" stroke-width="1" fill="none"/>
<line x1="213.85" y1="345.6" x2="228.25" y2="345.6" stroke="#ffffff" stroke-width="1"/>
<polygon points="211.25,348.4 213.85,346.6 213.85,350.2" stroke="#ffffff" stroke-width="1" fill="#ffffff"/>
<rect x="215.5" y="338" width="2.2" height="2.4" stroke="#ffffff" stroke-width="0" fill="#ffffff"/>
<circle cx="219.5" cy="339.2" r="1.1" stroke="#ffffff" stroke-width="1" fill="none"/>
<rect x="221.2" y="337.8" width="3.8" height="2.6" stroke="#ffffff" stroke-width="0" fill="#ffffff"/>
<polygon points="248.5,306.6 264.5,306.6 256.5,316.4" stroke="#ffffff" stroke-width="1" fill="none"/>
<line x1="256.5" y1="316.4" x2="256.5" y2="339.9" stroke="#ffffff" stroke-width="1"/>
<line x1="252.1" y1="317.3" x2="261.3" y2="317.3" stroke="#ffffff" stroke-width="1"/>
<rect x="254.1" y="321.8" width="5" height="2.8" stroke="#ffffff" stroke-width="0" fill="#ffffff"/>
<line x1="253.1" y1="321.8" x2="253.1" y2="324.6" stroke="#ffffff" stroke-width="1"/>
<line x1="259.1" y1="322.6" x2="261.3" y2="321.6" stroke="#ffffff" stroke-width="1"/>
<rect x="255.1" y="331.4" width="2.8" height="4" stroke="#ffffff" stroke-width="1" fill="none"/>
<polygon points="248.45,351.2 248.45,345.6 254.6,345.6 254.6,340 258.4,340 258.4,345.6 263.25,345.6 263.25,351.2" stroke="#ffffff" stroke-width="1" fill="none"/>
<rect x="248.9" y="338" width="2.2" height="2.4" stroke="#ffffff" stroke-width="0" fill="#ffffff"/>
<circle cx="252.9" cy="339.2" r="1.1" stroke="#ffffff" stroke-width="1" fill="none"/>
<rect x="254.6" y="337.8" width="3.8" height="2.6" stroke="#ffffff" stroke-width="0" fill="#ffffff"/>
<polygon points="215.1,387.7 231.1,387.7 223.1,397.5" stroke="#ffffff" stroke-width="1" fill="none"/>
<line x1="223.1" y1="397.5" x2="223.1" y2="421" stroke="#ffffff" stroke-width="1"/>
<line x1="218.7" y1="398.4" x2="227.9" y2="398.4" stroke="#ffffff" stroke-width="1"/>
<rect x="220.7" y="402.9" width="5" height="2.8" stroke="#ffffff" stroke-width="0" fill="#ffffff"/>
<line x1="219.7" y1="402.9" x2="219.7" y2="405.7" stroke="#ffffff" stroke-width="1"/>
<line x1="225.7" y1="403.7" x2="227.9" y2="402.7" stroke="#ffffff" stroke-width="1"/>
<rect x="221.7" y="412.5" width="2.8" height="4" stroke="#ffffff" stroke-width="1" fill="none"/>
<polygon points="216.25,432.2 216.25,426.6 221.2,426.6 221.2,421 225,421 225,426.6 231.05,426.6 231.05,432.2" stroke="#ffffff" stroke-width="1" fill="none"/>
<rect x="215.5" y="419" width="2.2" height="2.4" stroke="#ffffff" stroke-width="0" fill="#ffffff"/>
<circle cx="219.5" cy="420.2" r="1.1" stroke="#ffffff" stroke-width="1" fill="none"/>
<rect x="221.2" y="418.8" width="3.8" height="2.6" stroke="#ffffff" stroke-width="0" fill="#ffffff"/>
<polygon points="248.5,387.7 264.5,387.7 256.5,397.5" stroke="#ffffff" stroke-width="1" fill="none"/>
<line x1="256.5" y1="397.5" x2="256.5" y2="421" stroke="#ffffff" stroke-width="1"/>
<line x1="252.1" y1="398.4" x2="261.3" y2="398.4" stroke="#ffffff" stroke-width="1"/>
<rect x="254.1" y="402.9" width="5" height="2.8" stroke="#ffffff" stroke-width="0" fill="#ffffff"/>
<line x1="253.1" y1="402.9" x2="253.1" y2="405.7" stroke="#ffffff" stroke-width="1"/>
<line x1="259.1" y1="403.7" x2="261.3" y2="402.7" stroke="#ffffff" stroke-width="1"/>
<rect x="255.1" y="412.5" width="2.8" height="4" stroke="#ffffff" stroke-width="1" fill="none"/>
<polygon points="250.25,432.2 250.25,426.6 254.6,426.6 254.6,421 258.4,421 258.4,426.6 265.05,426.6 265.05,432.2" stroke="#ffffff" stroke-width="1" fill="none"/>
<rect x="248.9" y="419" width="2.2" height="2.4" stroke="#ffffff" stroke-width="0" fill="#ffffff"/>
<circle cx="252.9" cy="420.2" r="1.1" stroke="#ffffff" stroke-width="1" fill="none"/>
<rect x="254.6" y="418.8" width="3.8" height="2.6" stroke="#ffffff" stroke-width="0" fill="#ffffff"/>
<polyline points="215.6,278.7 189.5,278.7" stroke="#ffffff" stroke-width="2" fill="none"/>
<polyline points="189.5,278.7 189.5,348.3 214,348.3" stroke="#ffffff" stroke-width="1" fill="none"/>
<line x1="230.4" y1="278.7" x2="249" y2="278.7" stroke="#ffffff" stroke-width="2"/>
<line x1="263.8" y1="278.7" x2="271" y2="278.7" stroke="#ffffff" stroke-width="2"/>
<line x1="271" y1="278.7" x2="294.4" y2="278.7" stroke="#00ff00" stroke-width="2"/>
<rect x="200.8" y="277.5" width="2" height="2.4" stroke="#ffffff" stroke-width="0" fill="#ffffff"/>
<rect x="210.6" y="277.5" width="2" height="2.4" stroke="#ffffff" stroke-width="0" fill="#ffffff"/>
<rect x="231.6" y="277.5" width="2" height="2.4" stroke="#ffffff" stroke-width="0" fill="#ffffff"/>
<rect x="236.9" y="277.5" width="2" height="2.4" stroke="#ffffff" stroke-width="0" fill="#ffffff"/>
<rect x="242.1" y="277.5" width="2" height="2.4" stroke="#ffffff" stroke-width="0" fill="#ffffff"/>
<rect x="265.1" y="277.5" width="2" height="2.4" stroke="#ffffff" stroke-width="0" fill="#ffffff"/>
<rect x="269.4" y="277.5" width="2" height="2.4" stroke="#ffffff" stroke-width="0" fill="#ffffff"/>
<text x="276.5" y="278.16" font-size="4.32" fill="#ffffff" textLength="10.5" lengthAdjust="spacingAndGlyphs" font-weight="bold" stroke="#ffffff" stroke-width="0.3">????</text>
<text x="233" y="277.63" font-size="3.96" fill="#ffffff" textLength="14" lengthAdjust="spacingAndGlyphs" font-weight="bold" stroke="#ffffff" stroke-width="0.3">?????</text>
<line x1="201.9" y1="280" x2="201.9" y2="297.6" stroke="#00ffff" stroke-width="1"/>
<polygon points="200.8,291.47 203,291.47 201.9,293.67" stroke="#00ffff" stroke-width="1" fill="#00ffff"/>
<line x1="211.9" y1="280" x2="211.9" y2="297.6" stroke="#00ffff" stroke-width="1"/>
<polygon points="210.8,291.47 213,291.47 211.9,293.67" stroke="#00ffff" stroke-width="1" fill="#00ffff"/>
<line x1="229" y1="280" x2="229" y2="297.6" stroke="#00ffff" stroke-width="1"/>
<polygon points="227.9,291.47 230.1,291.47 229,293.67" stroke="#00ffff" stroke-width="1" fill="#00ffff"/>
<line x1="234" y1="280" x2="234" y2="297.6" stroke="#00ffff" stroke-width="1"/>
<polygon points="232.9,291.47 235.1,291.47 234,293.67" stroke="#00ffff" stroke-width="1" fill="#00ffff"/>
<line x1="237.9" y1="280" x2="237.9" y2="297.6" stroke="#00ffff" stroke-width="1"/>
<polygon points="236.8,291.47 239,291.47 237.9,293.67" stroke="#00ffff" stroke-width="1" fill="#00ffff"/>
<line x1="242.9" y1="280" x2="242.9" y2="297.6" stroke="#00ffff" stroke-width="1"/>
<polygon points="241.8,291.47 244,291.47 242.9,293.67" stroke="#00ffff" stroke-width="1" fill="#00ffff"/>
<line x1="262.9" y1="280" x2="262.9" y2="297.6" stroke="#00ffff" stroke-width="1"/>
<polygon points="261.8,291.47 264,291.47 262.9,293.67" stroke="#00ffff" stroke-width="1" fill="#00ffff"/>
<line x1="266.3" y1="280" x2="266.3" y2="297.6" stroke="#00ffff" stroke-width="1"/>
<polygon points="265.2,291.47 267.4,291.47 266.3,293.67" stroke="#00ffff" stroke-width="1" fill="#00ffff"/>
<text transform="translate(232.18 295.6) rotate(-90)" font-size="4.4" fill="#00ffff" stroke="#00ffff" stroke-width="0.35" textLength="13.1" lengthAdjust="spacingAndGlyphs" font-weight="bold">????</text>
<text transform="translate(265.58 295.6) rotate(-90)" font-size="4.4" fill="#00ffff" stroke="#00ffff" stroke-width="0.35" textLength="13.1" lengthAdjust="spacingAndGlyphs" font-weight="bold">????</text>
<polyline points="200.8,297.7 283.6,297.7 283.6,368.4" stroke="#00ffff" stroke-width="1" fill="none"/>
<text x="241.5" y="296.09" font-size="4.14" fill="#00ffff" textLength="13" lengthAdjust="spacingAndGlyphs" font-weight="bold" stroke="#00ffff" stroke-width="0.3">????</text>
<text x="188" y="237.22" font-size="4.5" fill="#ffffff" textLength="6.5" lengthAdjust="spacingAndGlyphs" stroke="#ffffff" stroke-width="0.3">??</text>
<line x1="183" y1="239.3" x2="203.8" y2="239.3" stroke="#ffffff" stroke-width="1"/>
<line x1="203.8" y1="239.3" x2="221.3" y2="252.7" stroke="#ffffff" stroke-width="1"/>
<text x="183" y="243.42" font-size="4.5" fill="#ffffff" textLength="12" lengthAdjust="spacingAndGlyphs" font-weight="bold" stroke="#ffffff" stroke-width="0.3">????</text>
<line x1="200.3" y1="240.2" x2="201.6" y2="242.2" stroke="#ffffff" stroke-width="1"/>
<text x="193.5" y="248.22" font-size="4.5" fill="#ffffff" textLength="7.5" lengthAdjust="spacingAndGlyphs" stroke="#ffffff" stroke-width="0.3">??</text>
<line x1="193" y1="250.3" x2="203.8" y2="250.3" stroke="#ffffff" stroke-width="1"/>
<line x1="203.8" y1="250.3" x2="221" y2="263" stroke="#ffffff" stroke-width="1"/>
<text x="183" y="256.22" font-size="4.5" fill="#ffffff" textLength="10" lengthAdjust="spacingAndGlyphs" stroke="#ffffff" stroke-width="0.3">???</text>
<line x1="181.5" y1="257.3" x2="203.8" y2="257.3" stroke="#ffffff" stroke-width="1"/>
<line x1="203.8" y1="257.3" x2="219.4" y2="268.8" stroke="#ffffff" stroke-width="1"/>
<text x="182" y="262.02" font-size="4.5" fill="#ffffff" textLength="19.5" lengthAdjust="spacingAndGlyphs" font-weight="bold" stroke="#ffffff" stroke-width="0.3">??????</text>
<text x="188.5" y="267.22" font-size="4.5" fill="#ffffff" textLength="6" lengthAdjust="spacingAndGlyphs" stroke="#ffffff" stroke-width="0.3">??</text>
<line x1="184" y1="269.3" x2="205.7" y2="269.3" stroke="#ffffff" stroke-width="1"/>
<line x1="205.7" y1="269.3" x2="216.4" y2="275.7" stroke="#ffffff" stroke-width="1"/>
<text x="184.5" y="273.82" font-size="4.5" fill="#ffffff" textLength="16" lengthAdjust="spacingAndGlyphs" font-weight="bold" stroke="#ffffff" stroke-width="0.3">?????</text>
<text x="140" y="260.02" font-size="5.6" fill="#ffffff" textLength="9.4" lengthAdjust="spacingAndGlyphs" stroke="#ffffff" stroke-width="0.22">???</text>
<text x="235.5" y="263.76" font-size="4.32" fill="#ffffff" textLength="7.2" lengthAdjust="spacingAndGlyphs" stroke="#ffffff" stroke-width="0.3">??</text>
<rect x="236.3" y="265.2" width="10.3" height="4" stroke="#00ffff" stroke-width="0" fill="#00ffff"/>
<text x="237" y="268.56" font-size="3.78" fill="#004040" textLength="9" lengthAdjust="spacingAndGlyphs" font-weight="bold" stroke="#004040" stroke-width="0.3">???</text>
<line x1="246.2" y1="269.6" x2="233.5" y2="277.2" stroke="#ffffff" stroke-width="1"/>
<text x="269" y="259.22" font-size="4.5" fill="#ffffff" textLength="12.7" lengthAdjust="spacingAndGlyphs" stroke="#ffffff" stroke-width="0.3">? ???</text>
<line x1="265.1" y1="261.4" x2="288" y2="261.4" stroke="#ffffff" stroke-width="1"/>
<line x1="265.1" y1="261.4" x2="270.4" y2="276.6" stroke="#ffffff" stroke-width="1"/>
<text x="268" y="266.68" font-size="4.68" fill="#ffffff" textLength="19.5" lengthAdjust="spacingAndGlyphs" font-weight="bold" stroke="#ffffff" stroke-width="0.3">??????</text>
<text x="193.6" y="290.79" font-size="4.14" fill="#ffffff" textLength="2.6" lengthAdjust="spacingAndGlyphs" stroke="#ffffff" stroke-width="0.3">4</text>
<line x1="195.6" y1="291.6" x2="200.8" y2="298.2" stroke="#ffffff" stroke-width="1"/>
<line x1="231.6" y1="348.3" x2="248" y2="348.3" stroke="#ffffff" stroke-width="2"/>
<line x1="263" y1="348.3" x2="272.5" y2="348.3" stroke="#00ffff" stroke-width="1"/>
<polyline points="272.5,348.3 272.5,381.4 170.6,381.4" stroke="#00ffff" stroke-width="1" fill="none"/>
<line x1="283.6" y1="305" x2="285.2" y2="305" stroke="#00ffff" stroke-width="1"/>
<line x1="283.6" y1="318" x2="285.2" y2="318" stroke="#00ffff" stroke-width="1"/>
<line x1="283.6" y1="330" x2="285.2" y2="330" stroke="#00ffff" stroke-width="1"/>
<line x1="283.6" y1="340" x2="285.2" y2="340" stroke="#00ffff" stroke-width="1"/>
<line x1="283.6" y1="348" x2="285.2" y2="348" stroke="#00ffff" stroke-width="1"/>
<line x1="283.6" y1="358" x2="285.2" y2="358" stroke="#00ffff" stroke-width="1"/>
<rect x="234" y="347.1" width="2" height="2.4" stroke="#ffffff" stroke-width="0" fill="#ffffff"/>
<rect x="240.8" y="347.1" width="2" height="2.4" stroke="#ffffff" stroke-width="0" fill="#ffffff"/>
<rect x="245.6" y="347.1" width="2" height="2.4" stroke="#ffffff" stroke-width="0" fill="#ffffff"/>
<text x="233.5" y="347.03" font-size="3.96" fill="#ffffff" textLength="13" lengthAdjust="spacingAndGlyphs" font-weight="bold" stroke="#ffffff" stroke-width="0.3">????</text>
<line x1="213.1" y1="352" x2="213.1" y2="368.2" stroke="#00ffff" stroke-width="1"/>
<polygon points="212,362.46 214.2,362.46 213.1,364.66" stroke="#00ffff" stroke-width="1" fill="#00ffff"/>
<line x1="217.4" y1="352" x2="217.4" y2="368.2" stroke="#00ffff" stroke-width="1"/>
<polygon points="216.3,362.46 218.5,362.46 217.4,364.66" stroke="#00ffff" stroke-width="1" fill="#00ffff"/>
<line x1="235" y1="352" x2="235" y2="368.2" stroke="#00ffff" stroke-width="1"/>
<polygon points="233.9,362.46 236.1,362.46 235,364.66" stroke="#00ffff" stroke-width="1" fill="#00ffff"/>
<line x1="241.8" y1="352" x2="241.8" y2="368.2" stroke="#00ffff" stroke-width="1"/>
<polygon points="240.7,362.46 242.9,362.46 241.8,364.66" stroke="#00ffff" stroke-width="1" fill="#00ffff"/>
<line x1="246.6" y1="352" x2="246.6" y2="368.2" stroke="#00ffff" stroke-width="1"/>
<polygon points="245.5,362.46 247.7,362.46 246.6,364.66" stroke="#00ffff" stroke-width="1" fill="#00ffff"/>
<line x1="250.5" y1="352" x2="250.5" y2="368.2" stroke="#00ffff" stroke-width="1"/>
<polygon points="249.4,362.46 251.6,362.46 250.5,364.66" stroke="#00ffff" stroke-width="1" fill="#00ffff"/>
<text transform="translate(215.98 366.2) rotate(-90)" font-size="4.4" fill="#00ffff" stroke="#00ffff" stroke-width="0.35" textLength="11.7" lengthAdjust="spacingAndGlyphs" font-weight="bold">????</text>
<text transform="translate(238.18 366.2) rotate(-90)" font-size="4.4" fill="#00ffff" stroke="#00ffff" stroke-width="0.35" textLength="11.7" lengthAdjust="spacingAndGlyphs" font-weight="bold">????</text>
<text transform="translate(249.58 366.2) rotate(-90)" font-size="4.4" fill="#00ffff" stroke="#00ffff" stroke-width="0.35" textLength="11.7" lengthAdjust="spacingAndGlyphs" font-weight="bold">????</text>
<line x1="174.5" y1="368.4" x2="283.6" y2="368.4" stroke="#00ffff" stroke-width="1"/>
<line x1="174.5" y1="368.4" x2="174.5" y2="381.4" stroke="#00ffff" stroke-width="1"/>
<text x="227" y="367.03" font-size="3.96" fill="#00ffff" textLength="13.5" lengthAdjust="spacingAndGlyphs" font-weight="bold" stroke="#00ffff" stroke-width="0.3">????</text>
<text x="198" y="303.82" font-size="4.5" fill="#ffffff" textLength="5" lengthAdjust="spacingAndGlyphs" stroke="#ffffff" stroke-width="0.3">??</text>
<line x1="193" y1="306" x2="205.7" y2="306" stroke="#ffffff" stroke-width="1"/>
<line x1="205.7" y1="306" x2="221.3" y2="317.7" stroke="#ffffff" stroke-width="1"/>
<text x="193" y="310.62" font-size="4.5" fill="#ffffff" textLength="11" lengthAdjust="spacingAndGlyphs" font-weight="bold" stroke="#ffffff" stroke-width="0.3">????</text>
<line x1="209.5" y1="307" x2="210.6" y2="309" stroke="#ffffff" stroke-width="1"/>
<text x="203.4" y="315.42" font-size="4.5" fill="#ffffff" textLength="6.2" lengthAdjust="spacingAndGlyphs" stroke="#ffffff" stroke-width="0.3">??</text>
<line x1="203.4" y1="316.8" x2="215.5" y2="316.8" stroke="#ffffff" stroke-width="1"/>
<line x1="215.5" y1="316.8" x2="222.3" y2="328.4" stroke="#ffffff" stroke-width="1"/>
<text x="193.5" y="323.22" font-size="4.5" fill="#ffffff" textLength="10.5" lengthAdjust="spacingAndGlyphs" stroke="#ffffff" stroke-width="0.3">????</text>
<line x1="192.5" y1="324.6" x2="213.5" y2="324.6" stroke="#ffffff" stroke-width="1"/>
<line x1="213.5" y1="324.6" x2="221.3" y2="337.2" stroke="#ffffff" stroke-width="1"/>
<text x="193" y="329.22" font-size="4.5" fill="#ffffff" textLength="17.6" lengthAdjust="spacingAndGlyphs" font-weight="bold" stroke="#ffffff" stroke-width="0.3">??????</text>
<text x="198" y="334.02" font-size="4.5" fill="#ffffff" textLength="6" lengthAdjust="spacingAndGlyphs" stroke="#ffffff" stroke-width="0.3">??</text>
<line x1="194" y1="336.2" x2="213.5" y2="336.2" stroke="#ffffff" stroke-width="1"/>
<line x1="213.5" y1="336.2" x2="219.4" y2="341" stroke="#ffffff" stroke-width="1"/>
<text x="194.5" y="340.82" font-size="4.5" fill="#ffffff" textLength="17.5" lengthAdjust="spacingAndGlyphs" font-weight="bold" stroke="#ffffff" stroke-width="0.3">??????</text>
<text x="192" y="347.62" font-size="4.5" fill="#ffffff" textLength="12.7" lengthAdjust="spacingAndGlyphs" font-weight="bold" stroke="#ffffff" stroke-width="0.3">????</text>
<text x="140" y="328.62" font-size="5.6" fill="#ffffff" textLength="9.4" lengthAdjust="spacingAndGlyphs" stroke="#ffffff" stroke-width="0.22">???</text>
<text x="233.6" y="332.56" font-size="4.32" fill="#ffffff" textLength="7.2" lengthAdjust="spacingAndGlyphs" stroke="#ffffff" stroke-width="0.3">??</text>
<text x="233.6" y="336.49" font-size="4.14" fill="#00ffff" textLength="10.8" lengthAdjust="spacingAndGlyphs" font-weight="bold" stroke="#00ffff" stroke-width="0.3">????</text>
<line x1="244.7" y1="337.2" x2="223.3" y2="343" stroke="#ffffff" stroke-width="1"/>
<line x1="244.7" y1="337.2" x2="244.7" y2="345" stroke="#ffffff" stroke-width="1"/>
<text x="158" y="365.08" font-size="4.68" fill="#ffffff" textLength="10.7" lengthAdjust="spacingAndGlyphs" stroke="#ffffff" stroke-width="0.3">????</text>
<line x1="158" y1="366.5" x2="182.3" y2="366.5" stroke="#ffffff" stroke-width="1"/>
<text x="173" y="365.09" font-size="4.14" fill="#00ffff" textLength="9.3" lengthAdjust="spacingAndGlyphs" font-weight="bold" stroke="#00ffff" stroke-width="0.3">DWD</text>
<circle cx="184.5" cy="368.4" r="1.1" stroke="#00ffff" stroke-width="1" fill="none"/>
<circle cx="188.5" cy="368.4" r="1.1" stroke="#00ffff" stroke-width="1" fill="none"/>
<circle cx="193.5" cy="368.4" r="1.1" stroke="#00ffff" stroke-width="1" fill="none"/>
<line x1="196" y1="365.6" x2="196" y2="368.4" stroke="#00ffff" stroke-width="1"/>
<text x="223" y="357.09" font-size="4.14" fill="#ffffff" textLength="2.4" lengthAdjust="spacingAndGlyphs" stroke="#ffffff" stroke-width="0.3">4</text>
<line x1="218.4" y1="358.5" x2="226.8" y2="358.5" stroke="#ffffff" stroke-width="1"/>
<text x="236" y="356.49" font-size="4.14" fill="#ffffff" textLength="2" lengthAdjust="spacingAndGlyphs" stroke="#ffffff" stroke-width="0.3">1</text>
<line x1="239" y1="358" x2="244.6" y2="360.7" stroke="#ffffff" stroke-width="1"/>
<text x="186.2" y="361.09" font-size="4.14" fill="#ffffff" textLength="2.4" lengthAdjust="spacingAndGlyphs" stroke="#ffffff" stroke-width="0.3">2</text>
<line x1="188.6" y1="361.4" x2="195" y2="366.6" stroke="#ffffff" stroke-width="1"/>
<text x="199.8" y="361.09" font-size="4.14" fill="#ffffff" textLength="2" lengthAdjust="spacingAndGlyphs" stroke="#ffffff" stroke-width="0.3">1</text>
<line x1="201.8" y1="361.6" x2="209.6" y2="367.4" stroke="#ffffff" stroke-width="1"/>
<text x="223.2" y="373.49" font-size="4.14" fill="#ffffff" textLength="2.4" lengthAdjust="spacingAndGlyphs" stroke="#ffffff" stroke-width="0.3">3</text>
<polyline points="222.6,374.4 225.8,374.4 225.8,381" stroke="#ffffff" stroke-width="1" fill="none"/>
<rect x="176.5" y="376.8" width="34.7" height="7.7" stroke="#ffffff" stroke-width="1" fill="none"/>
<text x="180.5" y="379.76" font-size="3.78" fill="#00ffff" textLength="8" lengthAdjust="spacingAndGlyphs" font-weight="bold" stroke="#00ffff" stroke-width="0.3">???</text>
<circle cx="181.5" cy="381.4" r="1" stroke="#00ffff" stroke-width="1" fill="none"/>
<circle cx="183.9" cy="381.4" r="1" stroke="#00ffff" stroke-width="1" fill="none"/>
<circle cx="191" cy="381.4" r="1" stroke="#00ffff" stroke-width="1" fill="none"/>
<circle cx="193.4" cy="381.4" r="1" stroke="#00ffff" stroke-width="1" fill="none"/>
<circle cx="200.5" cy="381.4" r="1" stroke="#00ffff" stroke-width="1" fill="none"/>
<circle cx="202.9" cy="381.4" r="1" stroke="#00ffff" stroke-width="1" fill="none"/>
<line x1="204" y1="378.8" x2="204" y2="383" stroke="#00ffff" stroke-width="1"/>
<line x1="202.6" y1="378.8" x2="205.4" y2="378.8" stroke="#00ffff" stroke-width="1"/>
<text x="236" y="379.69" font-size="4.14" fill="#00ffff" textLength="9.7" lengthAdjust="spacingAndGlyphs" font-weight="bold" stroke="#00ffff" stroke-width="0.3">???</text>
<line x1="171" y1="429.6" x2="216" y2="429.6" stroke="#00ffff" stroke-width="1"/>
<line x1="230.4" y1="429.6" x2="249" y2="429.6" stroke="#ffffff" stroke-width="2"/>
<line x1="263.8" y1="429.6" x2="271" y2="429.6" stroke="#ffffff" stroke-width="2"/>
<line x1="271" y1="429.6" x2="294.4" y2="429.6" stroke="#00ff00" stroke-width="1"/>
<rect x="231.6" y="428.4" width="2" height="2.4" stroke="#ffffff" stroke-width="0" fill="#ffffff"/>
<rect x="236.9" y="428.4" width="2" height="2.4" stroke="#ffffff" stroke-width="0" fill="#ffffff"/>
<rect x="243.7" y="428.4" width="2" height="2.4" stroke="#ffffff" stroke-width="0" fill="#ffffff"/>
<rect x="265.1" y="428.4" width="2" height="2.4" stroke="#ffffff" stroke-width="0" fill="#ffffff"/>
<rect x="269.4" y="428.4" width="2" height="2.4" stroke="#ffffff" stroke-width="0" fill="#ffffff"/>
<rect x="176" y="425.3" width="35.2" height="7.5" stroke="#ffffff" stroke-width="1" fill="none"/>
<text x="180" y="428.26" font-size="3.78" fill="#00ffff" textLength="8" lengthAdjust="spacingAndGlyphs" font-weight="bold" stroke="#00ffff" stroke-width="0.3">???</text>
<circle cx="181" cy="429.6" r="1" stroke="#00ffff" stroke-width="1" fill="none"/>
<circle cx="183.4" cy="429.6" r="1" stroke="#00ffff" stroke-width="1" fill="none"/>
<circle cx="190.5" cy="429.6" r="1" stroke="#00ffff" stroke-width="1" fill="none"/>
<circle cx="192.9" cy="429.6" r="1" stroke="#00ffff" stroke-width="1" fill="none"/>
<circle cx="200" cy="429.6" r="1" stroke="#00ffff" stroke-width="1" fill="none"/>
<circle cx="202.4" cy="429.6" r="1" stroke="#00ffff" stroke-width="1" fill="none"/>
<line x1="204" y1="427" x2="204" y2="431.2" stroke="#00ffff" stroke-width="1"/>
<line x1="202.6" y1="427" x2="205.4" y2="427" stroke="#00ffff" stroke-width="1"/>
<text x="276.8" y="428.76" font-size="4.32" fill="#ffffff" textLength="12.7" lengthAdjust="spacingAndGlyphs" font-weight="bold" stroke="#ffffff" stroke-width="0.3">????</text>
<line x1="228.1" y1="431" x2="228.1" y2="449.2" stroke="#00ffff" stroke-width="1"/>
<polygon points="227,442.9 229.2,442.9 228.1,445.1" stroke="#00ffff" stroke-width="1" fill="#00ffff"/>
<line x1="232.6" y1="431" x2="232.6" y2="449.2" stroke="#00ffff" stroke-width="1"/>
<polygon points="231.5,442.9 233.7,442.9 232.6,445.1" stroke="#00ffff" stroke-width="1" fill="#00ffff"/>
<line x1="237.9" y1="431" x2="237.9" y2="449.2" stroke="#00ffff" stroke-width="1"/>
<polygon points="236.8,442.9 239,442.9 237.9,445.1" stroke="#00ffff" stroke-width="1" fill="#00ffff"/>
<line x1="244.7" y1="431" x2="244.7" y2="449.2" stroke="#00ffff" stroke-width="1"/>
<polygon points="243.6,442.9 245.8,442.9 244.7,445.1" stroke="#00ffff" stroke-width="1" fill="#00ffff"/>
<line x1="261.8" y1="431" x2="261.8" y2="449.2" stroke="#00ffff" stroke-width="1"/>
<polygon points="260.7,442.9 262.9,442.9 261.8,445.1" stroke="#00ffff" stroke-width="1" fill="#00ffff"/>
<line x1="266.1" y1="431" x2="266.1" y2="449.2" stroke="#00ffff" stroke-width="1"/>
<polygon points="265,442.9 267.2,442.9 266.1,445.1" stroke="#00ffff" stroke-width="1" fill="#00ffff"/>
<text transform="translate(231.18 447.2) rotate(-90)" font-size="4.4" fill="#00ffff" stroke="#00ffff" stroke-width="0.35" textLength="13.7" lengthAdjust="spacingAndGlyphs" font-weight="bold">?????</text>
<text transform="translate(264.98 447.2) rotate(-90)" font-size="4.4" fill="#00ffff" stroke="#00ffff" stroke-width="0.35" textLength="13.7" lengthAdjust="spacingAndGlyphs" font-weight="bold">?????</text>
<polyline points="174.5,429.6 174.5,436 199.9,436 199.9,449.3 271,449.3" stroke="#00ffff" stroke-width="1" fill="none"/>
<circle cx="185.5" cy="436" r="1" stroke="#00ffff" stroke-width="1" fill="none"/>
<circle cx="188" cy="436" r="1" stroke="#00ffff" stroke-width="1" fill="none"/>
<polygon points="196.2,441.2 199.9,439.6 199.9,442.8" stroke="#00ffff" stroke-width="1" fill="#00ffff"/>
<text x="208.6" y="448.16" font-size="4.32" fill="#00ffff" textLength="13.7" lengthAdjust="spacingAndGlyphs" font-weight="bold" stroke="#00ffff" stroke-width="0.3">?????</text>
<text x="157.4" y="423.62" font-size="4.5" fill="#ffffff" textLength="9.4" lengthAdjust="spacingAndGlyphs" stroke="#ffffff" stroke-width="0.3">???</text>
<text x="172.2" y="423.49" font-size="4.14" fill="#00ffff" textLength="9.2" lengthAdjust="spacingAndGlyphs" font-weight="bold" stroke="#00ffff" stroke-width="0.3">DWD</text>
<text transform="translate(167.86 448.7) rotate(-90)" font-size="4.6" fill="#00ffff" stroke="#00ffff" stroke-width="0.35" textLength="11.7" lengthAdjust="spacingAndGlyphs" font-weight="bold">????</text>
<text x="188" y="388.42" font-size="4.5" fill="#ffffff" textLength="6.5" lengthAdjust="spacingAndGlyphs" stroke="#ffffff" stroke-width="0.3">??</text>
<line x1="183" y1="390.5" x2="203.8" y2="390.5" stroke="#ffffff" stroke-width="1"/>
<line x1="203.8" y1="390.5" x2="221.3" y2="403.9" stroke="#ffffff" stroke-width="1"/>
<text x="183" y="394.62" font-size="4.5" fill="#ffffff" textLength="12" lengthAdjust="spacingAndGlyphs" font-weight="bold" stroke="#ffffff" stroke-width="0.3">????</text>
<line x1="200.3" y1="391.4" x2="201.6" y2="393.4" stroke="#ffffff" stroke-width="1"/>
<text x="193.5" y="399.42" font-size="4.5" fill="#ffffff" textLength="7.5" lengthAdjust="spacingAndGlyphs" stroke="#ffffff" stroke-width="0.3">??</text>
<line x1="193" y1="401.5" x2="203.8" y2="401.5" stroke="#ffffff" stroke-width="1"/>
<line x1="203.8" y1="401.5" x2="221" y2="414.2" stroke="#ffffff" stroke-width="1"/>
<text x="183.3" y="406.02" font-size="4.5" fill="#ffffff" textLength="12.7" lengthAdjust="spacingAndGlyphs" stroke="#ffffff" stroke-width="0.3">????</text>
<line x1="181.4" y1="407.4" x2="203.8" y2="407.4" stroke="#ffffff" stroke-width="1"/>
<line x1="203.8" y1="407.4" x2="221.3" y2="419.5" stroke="#ffffff" stroke-width="1"/>
<text x="183" y="411.82" font-size="4.5" fill="#ffffff" textLength="20" lengthAdjust="spacingAndGlyphs" font-weight="bold" stroke="#ffffff" stroke-width="0.3">???????</text>
<text x="188.2" y="416.22" font-size="4.5" fill="#ffffff" textLength="6.8" lengthAdjust="spacingAndGlyphs" stroke="#ffffff" stroke-width="0.3">??</text>
<line x1="185.3" y1="418" x2="205.7" y2="418" stroke="#ffffff" stroke-width="1"/>
<line x1="205.7" y1="418" x2="216.4" y2="424.4" stroke="#ffffff" stroke-width="1"/>
<text x="186" y="422.32" font-size="4.5" fill="#ffffff" textLength="18" lengthAdjust="spacingAndGlyphs" font-weight="bold" stroke="#ffffff" stroke-width="0.3">??????</text>
<text x="140" y="416.02" font-size="5.6" fill="#ffffff" textLength="9.4" lengthAdjust="spacingAndGlyphs" stroke="#ffffff" stroke-width="0.22">???</text>
<text x="236" y="413.56" font-size="4.32" fill="#ffffff" textLength="6.7" lengthAdjust="spacingAndGlyphs" stroke="#ffffff" stroke-width="0.3">??</text>
<rect x="235.3" y="415.1" width="10.9" height="3.5" stroke="#00ffff" stroke-width="0" fill="#00ffff"/>
<text x="236" y="418.26" font-size="3.78" fill="#004040" textLength="9.6" lengthAdjust="spacingAndGlyphs" font-weight="bold" stroke="#004040" stroke-width="0.3">???</text>
<line x1="246" y1="419.2" x2="234" y2="428" stroke="#ffffff" stroke-width="1"/>
<text x="270" y="410.42" font-size="4.5" fill="#ffffff" textLength="12" lengthAdjust="spacingAndGlyphs" stroke="#ffffff" stroke-width="0.3">?????</text>
<line x1="265.1" y1="412" x2="288" y2="412" stroke="#ffffff" stroke-width="1"/>
<line x1="265.1" y1="412" x2="270.4" y2="429.2" stroke="#ffffff" stroke-width="1"/>
<text x="268" y="417.48" font-size="4.68" fill="#ffffff" textLength="19.5" lengthAdjust="spacingAndGlyphs" font-weight="bold" stroke="#ffffff" stroke-width="0.3">??????</text>
<line x1="170.8" y1="371.3" x2="170.8" y2="640.7" stroke="#00ffff" stroke-width="1" stroke-dasharray="11 1.6 1.2 1.8"/>
<polygon points="215.2,455.9 231,455.9 223.1,465.1" stroke="#ffffff" stroke-width="1" fill="none"/>
<line x1="223.1" y1="465" x2="223.1" y2="488" stroke="#ffffff" stroke-width="1"/>
<line x1="218.7" y1="465.8" x2="227.9" y2="465.8" stroke="#ffffff" stroke-width="1"/>
<rect x="220.7" y="470.3" width="5" height="2.8" stroke="#ffffff" stroke-width="0" fill="#ffffff"/>
<line x1="219.7" y1="470.3" x2="219.7" y2="473.1" stroke="#ffffff" stroke-width="1"/>
<line x1="225.7" y1="471.1" x2="227.9" y2="470.1" stroke="#ffffff" stroke-width="1"/>
<rect x="221.7" y="479.9" width="2.8" height="4" stroke="#ffffff" stroke-width="1" fill="none"/>
<polygon points="217.2,504.7 217.2,494.5 219.7,492.5 226.1,492.5 228.6,494.5 228.6,504.7 223.3,512.5 222.3,512.5" stroke="#ffffff" stroke-width="1" fill="none"/>
<line x1="217.2" y1="494.5" x2="228.6" y2="494.5" stroke="#ffffff" stroke-width="1"/>
<line x1="217.9" y1="499.1" x2="219.7" y2="499.1" stroke="#ffffff" stroke-width="1"/>
<rect x="215.1" y="487.1" width="3.2" height="2.4" stroke="#ffffff" stroke-width="0" fill="#ffffff"/>
<circle cx="222.5" cy="488.5" r="1.7" stroke="#ffffff" stroke-width="1" fill="none"/>
<line x1="218.3" y1="488.5" x2="220.7" y2="488.5" stroke="#ffffff" stroke-width="1"/>
<polyline points="229.5,458.4 232.6,458.4 232.6,489.3 227.4,489.3 227.4,493" stroke="#ffffff" stroke-width="1" fill="none"/>
<text transform="translate(237.18 466) rotate(-90)" font-size="4.4" fill="#ffffff" stroke="#ffffff" stroke-width="0.35" textLength="7.6" lengthAdjust="spacingAndGlyphs" font-weight="bold">???</text>
<circle cx="232.6" cy="473.8" r="1.2" stroke="#ffffff" stroke-width="1" fill="none"/>
<line x1="231.2" y1="471" x2="236.6" y2="471" stroke="#ffffff" stroke-width="1"/>
<rect x="234.2" y="470.4" width="2.4" height="2.4" stroke="#ffffff" stroke-width="0" fill="#ffffff"/>
<polygon points="248.6,455.9 264.4,455.9 256.5,465.1" stroke="#ffffff" stroke-width="1" fill="none"/>
<line x1="256.5" y1="465" x2="256.5" y2="488" stroke="#ffffff" stroke-width="1"/>
<line x1="252.1" y1="465.8" x2="261.3" y2="465.8" stroke="#ffffff" stroke-width="1"/>
<rect x="254.1" y="470.3" width="5" height="2.8" stroke="#ffffff" stroke-width="0" fill="#ffffff"/>
<line x1="253.1" y1="470.3" x2="253.1" y2="473.1" stroke="#ffffff" stroke-width="1"/>
<line x1="259.1" y1="471.1" x2="261.3" y2="470.1" stroke="#ffffff" stroke-width="1"/>
<rect x="255.1" y="479.9" width="2.8" height="4" stroke="#ffffff" stroke-width="1" fill="none"/>
<polygon points="250.6,504.7 250.6,494.5 253.1,492.5 259.5,492.5 262,494.5 262,504.7 256.7,512.5 255.7,512.5" stroke="#ffffff" stroke-width="1" fill="none"/>
<line x1="250.6" y1="494.5" x2="262" y2="494.5" stroke="#ffffff" stroke-width="1"/>
<line x1="251.3" y1="499.1" x2="253.1" y2="499.1" stroke="#ffffff" stroke-width="1"/>
<rect x="248.5" y="487.1" width="3.2" height="2.4" stroke="#ffffff" stroke-width="0" fill="#ffffff"/>
<circle cx="255.9" cy="488.5" r="1.7" stroke="#ffffff" stroke-width="1" fill="none"/>
<line x1="251.7" y1="488.5" x2="254.1" y2="488.5" stroke="#ffffff" stroke-width="1"/>
<polyline points="262.9,458.4 266,458.4 266,489.3 260.8,489.3 260.8,493" stroke="#ffffff" stroke-width="1" fill="none"/>
<text transform="translate(270.58 466) rotate(-90)" font-size="4.4" fill="#ffffff" stroke="#ffffff" stroke-width="0.35" textLength="7.6" lengthAdjust="spacingAndGlyphs" font-weight="bold">???</text>
<circle cx="266" cy="473.8" r="1.2" stroke="#ffffff" stroke-width="1" fill="none"/>
<line x1="264.6" y1="471" x2="270" y2="471" stroke="#ffffff" stroke-width="1"/>
<rect x="267.6" y="470.4" width="2.4" height="2.4" stroke="#ffffff" stroke-width="0" fill="#ffffff"/>
<line x1="171" y1="509.5" x2="217.5" y2="509.5" stroke="#00ffff" stroke-width="1"/>
<line x1="228" y1="509.5" x2="251" y2="509.5" stroke="#ffffff" stroke-width="1.4"/>
<line x1="262" y1="509.5" x2="268" y2="509.5" stroke="#ffffff" stroke-width="1.4"/>
<line x1="268" y1="509.5" x2="302.2" y2="509.5" stroke="#00ff00" stroke-width="1"/>
<rect x="230" y="508.3" width="2" height="2.4" stroke="#ffffff" stroke-width="0" fill="#ffffff"/>
<rect x="238.8" y="508.3" width="2" height="2.4" stroke="#ffffff" stroke-width="0" fill="#ffffff"/>
<rect x="245.6" y="508.3" width="2" height="2.4" stroke="#ffffff" stroke-width="0" fill="#ffffff"/>
<rect x="262.8" y="508.3" width="2" height="2.4" stroke="#ffffff" stroke-width="0" fill="#ffffff"/>
<rect x="268" y="508.3" width="2" height="2.4" stroke="#ffffff" stroke-width="0" fill="#ffffff"/>
<rect x="176" y="504.6" width="32.6" height="8.4" stroke="#ffffff" stroke-width="1" fill="none"/>
<text x="180" y="507.56" font-size="3.78" fill="#00ffff" textLength="8" lengthAdjust="spacingAndGlyphs" font-weight="bold" stroke="#00ffff" stroke-width="0.3">???</text>
<circle cx="181" cy="509.5" r="1" stroke="#00ffff" stroke-width="1" fill="none"/>
<circle cx="183.4" cy="509.5" r="1" stroke="#00ffff" stroke-width="1" fill="none"/>
<circle cx="190.5" cy="509.5" r="1" stroke="#00ffff" stroke-width="1" fill="none"/>
<circle cx="192.9" cy="509.5" r="1" stroke="#00ffff" stroke-width="1" fill="none"/>
<circle cx="200" cy="509.5" r="1" stroke="#00ffff" stroke-width="1" fill="none"/>
<circle cx="202.4" cy="509.5" r="1" stroke="#00ffff" stroke-width="1" fill="none"/>
<line x1="201.4" y1="506.9" x2="201.4" y2="511.1" stroke="#00ffff" stroke-width="1"/>
<line x1="200" y1="506.9" x2="202.8" y2="506.9" stroke="#00ffff" stroke-width="1"/>
<line x1="231" y1="511" x2="231" y2="526" stroke="#00ffff" stroke-width="1"/>
<polygon points="229.9,520.6 232.1,520.6 231,522.8" stroke="#00ffff" stroke-width="1" fill="#00ffff"/>
<line x1="235" y1="511" x2="235" y2="526" stroke="#00ffff" stroke-width="1"/>
<polygon points="233.9,520.6 236.1,520.6 235,522.8" stroke="#00ffff" stroke-width="1" fill="#00ffff"/>
<line x1="239.8" y1="511" x2="239.8" y2="526" stroke="#00ffff" stroke-width="1"/>
<polygon points="238.7,520.6 240.9,520.6 239.8,522.8" stroke="#00ffff" stroke-width="1" fill="#00ffff"/>
<line x1="246.6" y1="511" x2="246.6" y2="526" stroke="#00ffff" stroke-width="1"/>
<polygon points="245.5,520.6 247.7,520.6 246.6,522.8" stroke="#00ffff" stroke-width="1" fill="#00ffff"/>
<line x1="259.9" y1="511" x2="259.9" y2="526" stroke="#00ffff" stroke-width="1"/>
<polygon points="258.8,520.6 261,520.6 259.9,522.8" stroke="#00ffff" stroke-width="1" fill="#00ffff"/>
<line x1="263.8" y1="511" x2="263.8" y2="526" stroke="#00ffff" stroke-width="1"/>
<polygon points="262.7,520.6 264.9,520.6 263.8,522.8" stroke="#00ffff" stroke-width="1" fill="#00ffff"/>
<text transform="translate(234.18 524) rotate(-90)" font-size="4.4" fill="#00ffff" stroke="#00ffff" stroke-width="0.35" textLength="10.5" lengthAdjust="spacingAndGlyphs" font-weight="bold">????</text>
<text transform="translate(262.98 524) rotate(-90)" font-size="4.4" fill="#00ffff" stroke="#00ffff" stroke-width="0.35" textLength="10.5" lengthAdjust="spacingAndGlyphs" font-weight="bold">????</text>
<polyline points="174.5,509.5 174.5,516.9 194,516.9 194,526.2 266.5,526.2" stroke="#00ffff" stroke-width="1" fill="none"/>
<circle cx="180.5" cy="516.9" r="1" stroke="#00ffff" stroke-width="1" fill="none"/>
<circle cx="183" cy="516.9" r="1" stroke="#00ffff" stroke-width="1" fill="none"/>
<polygon points="190.5,521.6 194,520 194,523.2" stroke="#00ffff" stroke-width="1" fill="#00ffff"/>
<text x="200.3" y="523.86" font-size="4.32" fill="#00ffff" textLength="13.2" lengthAdjust="spacingAndGlyphs" font-weight="bold" stroke="#00ffff" stroke-width="0.3">????</text>
<polyline points="171,535.4 302.2,535.4 302.2,509.5" stroke="#00ffff" stroke-width="1" fill="none"/>
<rect x="173" y="530.9" width="32.7" height="7.9" stroke="#ffffff" stroke-width="1" fill="none"/>
<rect x="173" y="530.9" width="32.7" height="7.9" stroke="#ffffff" stroke-width="1" fill="none"/>
<text x="177" y="533.86" font-size="3.78" fill="#00ffff" textLength="8" lengthAdjust="spacingAndGlyphs" font-weight="bold" stroke="#00ffff" stroke-width="0.3">???</text>
<circle cx="178" cy="535.4" r="1" stroke="#00ffff" stroke-width="1" fill="none"/>
<circle cx="180.4" cy="535.4" r="1" stroke="#00ffff" stroke-width="1" fill="none"/>
<circle cx="187.5" cy="535.4" r="1" stroke="#00ffff" stroke-width="1" fill="none"/>
<circle cx="189.9" cy="535.4" r="1" stroke="#00ffff" stroke-width="1" fill="none"/>
<circle cx="197" cy="535.4" r="1" stroke="#00ffff" stroke-width="1" fill="none"/>
<circle cx="199.4" cy="535.4" r="1" stroke="#00ffff" stroke-width="1" fill="none"/>
<line x1="198.5" y1="532.8" x2="198.5" y2="537" stroke="#00ffff" stroke-width="1"/>
<line x1="197.1" y1="532.8" x2="199.9" y2="532.8" stroke="#00ffff" stroke-width="1"/>
<text x="175.1" y="529.16" font-size="4.32" fill="#ffffff" textLength="9.2" lengthAdjust="spacingAndGlyphs" stroke="#ffffff" stroke-width="0.3">???</text>
<text x="189.2" y="529.09" font-size="4.14" fill="#00ffff" textLength="9.7" lengthAdjust="spacingAndGlyphs" font-weight="bold" stroke="#00ffff" stroke-width="0.3">DWD</text>
<text x="227.1" y="533.76" font-size="4.32" fill="#00ffff" textLength="10.8" lengthAdjust="spacingAndGlyphs" font-weight="bold" stroke="#00ffff" stroke-width="0.3">????</text>
<text x="276.8" y="507.96" font-size="4.32" fill="#ffffff" textLength="12.7" lengthAdjust="spacingAndGlyphs" font-weight="bold" stroke="#ffffff" stroke-width="0.3">????</text>
<line x1="212" y1="535.4" x2="212" y2="534" stroke="#00ffff" stroke-width="1"/>
<line x1="238" y1="535.4" x2="238" y2="534" stroke="#00ffff" stroke-width="1"/>
<line x1="262" y1="535.4" x2="262" y2="534" stroke="#00ffff" stroke-width="1"/>
<line x1="285" y1="535.4" x2="285" y2="534" stroke="#00ffff" stroke-width="1"/>
<text x="187.5" y="460.02" font-size="4.5" fill="#ffffff" textLength="6.5" lengthAdjust="spacingAndGlyphs" stroke="#ffffff" stroke-width="0.3">??</text>
<line x1="183.3" y1="462.2" x2="203.8" y2="462.2" stroke="#ffffff" stroke-width="1"/>
<line x1="203.8" y1="462.2" x2="221.3" y2="471.1" stroke="#ffffff" stroke-width="1"/>
<text x="184" y="466.52" font-size="4.5" fill="#ffffff" textLength="16" lengthAdjust="spacingAndGlyphs" font-weight="bold" stroke="#ffffff" stroke-width="0.3">?????</text>
<line x1="203.4" y1="463.2" x2="204.6" y2="465.4" stroke="#ffffff" stroke-width="1"/>
<text x="194.6" y="471.12" font-size="4.5" fill="#ffffff" textLength="6.2" lengthAdjust="spacingAndGlyphs" stroke="#ffffff" stroke-width="0.3">??</text>
<line x1="194" y1="473.2" x2="205.7" y2="473.2" stroke="#ffffff" stroke-width="1"/>
<line x1="205.7" y1="473.2" x2="221.3" y2="479.9" stroke="#ffffff" stroke-width="1"/>
<text x="184.3" y="479.02" font-size="4.5" fill="#ffffff" textLength="12.7" lengthAdjust="spacingAndGlyphs" stroke="#ffffff" stroke-width="0.3">????</text>
<line x1="181.4" y1="480.4" x2="202.8" y2="480.4" stroke="#ffffff" stroke-width="1"/>
<line x1="202.8" y1="480.4" x2="219.4" y2="488.6" stroke="#ffffff" stroke-width="1"/>
<text x="181.4" y="485.02" font-size="4.5" fill="#ffffff" textLength="18.6" lengthAdjust="spacingAndGlyphs" font-weight="bold" stroke="#ffffff" stroke-width="0.3">??????</text>
<text x="189.6" y="490.22" font-size="4.5" fill="#ffffff" textLength="6.4" lengthAdjust="spacingAndGlyphs" stroke="#ffffff" stroke-width="0.3">??</text>
<line x1="180.4" y1="492.5" x2="203.8" y2="492.5" stroke="#ffffff" stroke-width="1"/>
<line x1="203.8" y1="492.5" x2="217.4" y2="498.4" stroke="#ffffff" stroke-width="1"/>
<text x="181" y="497.02" font-size="4.5" fill="#ffffff" textLength="22" lengthAdjust="spacingAndGlyphs" font-weight="bold" stroke="#ffffff" stroke-width="0.3">???????</text>
<text x="179.4" y="502.36" font-size="4.32" fill="#ffffff" textLength="9.8" lengthAdjust="spacingAndGlyphs" stroke="#ffffff" stroke-width="0.3">???</text>
<text x="193.2" y="502.29" font-size="4.14" fill="#00ffff" textLength="9.6" lengthAdjust="spacingAndGlyphs" font-weight="bold" stroke="#00ffff" stroke-width="0.3">DWD</text>
<text x="140" y="492.02" font-size="5.6" fill="#ffffff" textLength="9.4" lengthAdjust="spacingAndGlyphs" stroke="#ffffff" stroke-width="0.22">???</text>
<text x="233.6" y="492.56" font-size="4.32" fill="#ffffff" textLength="6.8" lengthAdjust="spacingAndGlyphs" stroke="#ffffff" stroke-width="0.3">??</text>
<rect x="233" y="494" width="10.9" height="3.5" stroke="#00ffff" stroke-width="0" fill="#00ffff"/>
<text x="233.8" y="497.16" font-size="3.78" fill="#004040" textLength="9.6" lengthAdjust="spacingAndGlyphs" font-weight="bold" stroke="#004040" stroke-width="0.3">???</text>
<line x1="243.7" y1="498" x2="230" y2="508" stroke="#ffffff" stroke-width="1"/>
<text x="274.5" y="464.22" font-size="4.5" fill="#ffffff" textLength="12.1" lengthAdjust="spacingAndGlyphs" stroke="#ffffff" stroke-width="0.3">????</text>
<text x="292.4" y="464.56" font-size="4.32" fill="#ffffff" textLength="8.8" lengthAdjust="spacingAndGlyphs" font-weight="bold" stroke="#ffffff" stroke-width="0.3">???</text>
<line x1="273.9" y1="466.2" x2="301.2" y2="466.2" stroke="#ffffff" stroke-width="1"/>
<line x1="273.9" y1="466.2" x2="269" y2="468.4" stroke="#ffffff" stroke-width="1"/>
<text x="275" y="470.29" font-size="4.14" fill="#ffffff" textLength="18" lengthAdjust="spacingAndGlyphs" font-weight="bold" stroke="#ffffff" stroke-width="0.3">??????</text>
<text x="276.8" y="492.82" font-size="4.5" fill="#ffffff" textLength="11.7" lengthAdjust="spacingAndGlyphs" stroke="#ffffff" stroke-width="0.3">????</text>
<line x1="272" y1="495.5" x2="294.4" y2="495.5" stroke="#ffffff" stroke-width="1"/>
<line x1="272" y1="495.5" x2="268.6" y2="509.1" stroke="#ffffff" stroke-width="1"/>
<text x="274" y="500.42" font-size="4.5" fill="#ffffff" textLength="19" lengthAdjust="spacingAndGlyphs" font-weight="bold" stroke="#ffffff" stroke-width="0.3">??????</text>
<polygon points="215.2,544 231,544 223.1,553.2" stroke="#ffffff" stroke-width="1" fill="none"/>
<line x1="223.1" y1="553.1" x2="223.1" y2="576.1" stroke="#ffffff" stroke-width="1"/>
<line x1="218.7" y1="553.9" x2="227.9" y2="553.9" stroke="#ffffff" stroke-width="1"/>
<rect x="220.7" y="558.4" width="5" height="2.8" stroke="#ffffff" stroke-width="0" fill="#ffffff"/>
<line x1="219.7" y1="558.4" x2="219.7" y2="561.2" stroke="#ffffff" stroke-width="1"/>
<line x1="225.7" y1="559.2" x2="227.9" y2="558.2" stroke="#ffffff" stroke-width="1"/>
<rect x="221.7" y="568" width="2.8" height="4" stroke="#ffffff" stroke-width="1" fill="none"/>
<polygon points="217.2,592.8 217.2,582.6 219.7,580.6 226.1,580.6 228.6,582.6 228.6,592.8 223.3,600.6 222.3,600.6" stroke="#ffffff" stroke-width="1" fill="none"/>
<line x1="217.2" y1="582.6" x2="228.6" y2="582.6" stroke="#ffffff" stroke-width="1"/>
<line x1="217.9" y1="587.2" x2="219.7" y2="587.2" stroke="#ffffff" stroke-width="1"/>
<rect x="215.1" y="575.2" width="3.2" height="2.4" stroke="#ffffff" stroke-width="0" fill="#ffffff"/>
<circle cx="222.5" cy="576.6" r="1.7" stroke="#ffffff" stroke-width="1" fill="none"/>
<line x1="218.3" y1="576.6" x2="220.7" y2="576.6" stroke="#ffffff" stroke-width="1"/>
<polyline points="229.5,546.5 232.6,546.5 232.6,577.4 227.4,577.4 227.4,581.1" stroke="#ffffff" stroke-width="1" fill="none"/>
<text transform="translate(237.18 554.1) rotate(-90)" font-size="4.4" fill="#ffffff" stroke="#ffffff" stroke-width="0.35" textLength="7.6" lengthAdjust="spacingAndGlyphs" font-weight="bold">???</text>
<circle cx="232.6" cy="561.9" r="1.2" stroke="#ffffff" stroke-width="1" fill="none"/>
<line x1="231.2" y1="559.1" x2="236.6" y2="559.1" stroke="#ffffff" stroke-width="1"/>
<rect x="234.2" y="558.5" width="2.4" height="2.4" stroke="#ffffff" stroke-width="0" fill="#ffffff"/>
<polygon points="248.6,544 264.4,544 256.5,553.2" stroke="#ffffff" stroke-width="1" fill="none"/>
<line x1="256.5" y1="553.1" x2="256.5" y2="576.1" stroke="#ffffff" stroke-width="1"/>
<line x1="252.1" y1="553.9" x2="261.3" y2="553.9" stroke="#ffffff" stroke-width="1"/>
<rect x="254.1" y="558.4" width="5" height="2.8" stroke="#ffffff" stroke-width="0" fill="#ffffff"/>
<line x1="253.1" y1="558.4" x2="253.1" y2="561.2" stroke="#ffffff" stroke-width="1"/>
<line x1="259.1" y1="559.2" x2="261.3" y2="558.2" stroke="#ffffff" stroke-width="1"/>
<rect x="255.1" y="568" width="2.8" height="4" stroke="#ffffff" stroke-width="1" fill="none"/>
<polygon points="250.6,592.8 250.6,582.6 253.1,580.6 259.5,580.6 262,582.6 262,592.8 256.7,600.6 255.7,600.6" stroke="#ffffff" stroke-width="1" fill="none"/>
<line x1="250.6" y1="582.6" x2="262" y2="582.6" stroke="#ffffff" stroke-width="1"/>
<line x1="251.3" y1="587.2" x2="253.1" y2="587.2" stroke="#ffffff" stroke-width="1"/>
<rect x="248.5" y="575.2" width="3.2" height="2.4" stroke="#ffffff" stroke-width="0" fill="#ffffff"/>
<circle cx="255.9" cy="576.6" r="1.7" stroke="#ffffff" stroke-width="1" fill="none"/>
<line x1="251.7" y1="576.6" x2="254.1" y2="576.6" stroke="#ffffff" stroke-width="1"/>
<polyline points="262.9,546.5 266,546.5 266,577.4 260.8,577.4 260.8,581.1" stroke="#ffffff" stroke-width="1" fill="none"/>
<text transform="translate(270.58 554.1) rotate(-90)" font-size="4.4" fill="#ffffff" stroke="#ffffff" stroke-width="0.35" textLength="7.6" lengthAdjust="spacingAndGlyphs" font-weight="bold">???</text>
<circle cx="266" cy="561.9" r="1.2" stroke="#ffffff" stroke-width="1" fill="none"/>
<line x1="264.6" y1="559.1" x2="270" y2="559.1" stroke="#ffffff" stroke-width="1"/>
<rect x="267.6" y="558.5" width="2.4" height="2.4" stroke="#ffffff" stroke-width="0" fill="#ffffff"/>
<line x1="171" y1="597.6" x2="217.5" y2="597.6" stroke="#00ffff" stroke-width="1"/>
<line x1="228" y1="597.6" x2="251" y2="597.6" stroke="#ffffff" stroke-width="1.4"/>
<line x1="262" y1="597.6" x2="268" y2="597.6" stroke="#ffffff" stroke-width="1.4"/>
<line x1="268" y1="597.6" x2="309.6" y2="597.6" stroke="#00ff00" stroke-width="1"/>
<rect x="231" y="596.4" width="2" height="2.4" stroke="#ffffff" stroke-width="0" fill="#ffffff"/>
<rect x="235.9" y="596.4" width="2" height="2.4" stroke="#ffffff" stroke-width="0" fill="#ffffff"/>
<rect x="240.8" y="596.4" width="2" height="2.4" stroke="#ffffff" stroke-width="0" fill="#ffffff"/>
<rect x="245.6" y="596.4" width="2" height="2.4" stroke="#ffffff" stroke-width="0" fill="#ffffff"/>
<rect x="261.2" y="596.4" width="2" height="2.4" stroke="#ffffff" stroke-width="0" fill="#ffffff"/>
<rect x="264.5" y="596.4" width="2" height="2.4" stroke="#ffffff" stroke-width="0" fill="#ffffff"/>
<rect x="271.5" y="596.4" width="2" height="2.4" stroke="#ffffff" stroke-width="0" fill="#ffffff"/>
<rect x="176" y="592.3" width="32.6" height="8.3" stroke="#ffffff" stroke-width="1" fill="none"/>
<text x="180" y="595.26" font-size="3.78" fill="#00ffff" textLength="8" lengthAdjust="spacingAndGlyphs" font-weight="bold" stroke="#00ffff" stroke-width="0.3">???</text>
<circle cx="181" cy="597.6" r="1" stroke="#00ffff" stroke-width="1" fill="none"/>
<circle cx="183.4" cy="597.6" r="1" stroke="#00ffff" stroke-width="1" fill="none"/>
<circle cx="190.5" cy="597.6" r="1" stroke="#00ffff" stroke-width="1" fill="none"/>
<circle cx="192.9" cy="597.6" r="1" stroke="#00ffff" stroke-width="1" fill="none"/>
<circle cx="200" cy="597.6" r="1" stroke="#00ffff" stroke-width="1" fill="none"/>
<circle cx="202.4" cy="597.6" r="1" stroke="#00ffff" stroke-width="1" fill="none"/>
<line x1="201.4" y1="595" x2="201.4" y2="599.2" stroke="#00ffff" stroke-width="1"/>
<line x1="200" y1="595" x2="202.8" y2="595" stroke="#00ffff" stroke-width="1"/>
<line x1="219.4" y1="599" x2="219.4" y2="614.2" stroke="#00ffff" stroke-width="1"/>
<polygon points="218.3,608.74 220.5,608.74 219.4,610.94" stroke="#00ffff" stroke-width="1" fill="#00ffff"/>
<line x1="223.3" y1="599" x2="223.3" y2="614.2" stroke="#00ffff" stroke-width="1"/>
<polygon points="222.2,608.74 224.4,608.74 223.3,610.94" stroke="#00ffff" stroke-width="1" fill="#00ffff"/>
<line x1="232" y1="599" x2="232" y2="614.2" stroke="#00ffff" stroke-width="1"/>
<polygon points="230.9,608.74 233.1,608.74 232,610.94" stroke="#00ffff" stroke-width="1" fill="#00ffff"/>
<line x1="236.9" y1="599" x2="236.9" y2="614.2" stroke="#00ffff" stroke-width="1"/>
<polygon points="235.8,608.74 238,608.74 236.9,610.94" stroke="#00ffff" stroke-width="1" fill="#00ffff"/>
<line x1="241.8" y1="599" x2="241.8" y2="614.2" stroke="#00ffff" stroke-width="1"/>
<polygon points="240.7,608.74 242.9,608.74 241.8,610.94" stroke="#00ffff" stroke-width="1" fill="#00ffff"/>
<line x1="246.6" y1="599" x2="246.6" y2="614.2" stroke="#00ffff" stroke-width="1"/>
<polygon points="245.5,608.74 247.7,608.74 246.6,610.94" stroke="#00ffff" stroke-width="1" fill="#00ffff"/>
<line x1="257.3" y1="599" x2="257.3" y2="614.2" stroke="#00ffff" stroke-width="1"/>
<polygon points="256.2,608.74 258.4,608.74 257.3,610.94" stroke="#00ffff" stroke-width="1" fill="#00ffff"/>
<line x1="262.2" y1="599" x2="262.2" y2="614.2" stroke="#00ffff" stroke-width="1"/>
<polygon points="261.1,608.74 263.3,608.74 262.2,610.94" stroke="#00ffff" stroke-width="1" fill="#00ffff"/>
<text transform="translate(222.38 612.2) rotate(-90)" font-size="4.4" fill="#00ffff" stroke="#00ffff" stroke-width="0.35" textLength="10.7" lengthAdjust="spacingAndGlyphs" font-weight="bold">????</text>
<text transform="translate(235.38 612.2) rotate(-90)" font-size="4.4" fill="#00ffff" stroke="#00ffff" stroke-width="0.35" textLength="10.7" lengthAdjust="spacingAndGlyphs" font-weight="bold">????</text>
<text transform="translate(260.58 612.2) rotate(-90)" font-size="4.4" fill="#00ffff" stroke="#00ffff" stroke-width="0.35" textLength="10.7" lengthAdjust="spacingAndGlyphs" font-weight="bold">????</text>
<line x1="272.5" y1="597.6" x2="272.5" y2="614.4" stroke="#00ffff" stroke-width="1" stroke-dasharray="3 1.4"/>
<polyline points="174.5,597.6 174.5,604 194,604 194,614.4 272.5,614.4" stroke="#00ffff" stroke-width="1" fill="none"/>
<circle cx="180.5" cy="604" r="1" stroke="#00ffff" stroke-width="1" fill="none"/>
<circle cx="183" cy="604" r="1" stroke="#00ffff" stroke-width="1" fill="none"/>
<polygon points="190.5,609.4 194,607.8 194,611" stroke="#00ffff" stroke-width="1" fill="#00ffff"/>
<text x="199.9" y="611.46" font-size="4.32" fill="#00ffff" textLength="13.6" lengthAdjust="spacingAndGlyphs" font-weight="bold" stroke="#00ffff" stroke-width="0.3">?????</text>
<polyline points="171,624.1 309.6,624.1 309.6,597.6" stroke="#00ffff" stroke-width="1" fill="none"/>
<rect x="173" y="618.3" width="32.7" height="8.2" stroke="#ffffff" stroke-width="1" fill="none"/>
<text x="177" y="621.26" font-size="3.78" fill="#00ffff" textLength="8" lengthAdjust="spacingAndGlyphs" font-weight="bold" stroke="#00ffff" stroke-width="0.3">???</text>
<circle cx="178" cy="624.1" r="1" stroke="#00ffff" stroke-width="1" fill="none"/>
<circle cx="180.4" cy="624.1" r="1" stroke="#00ffff" stroke-width="1" fill="none"/>
<circle cx="187.5" cy="624.1" r="1" stroke="#00ffff" stroke-width="1" fill="none"/>
<circle cx="189.9" cy="624.1" r="1" stroke="#00ffff" stroke-width="1" fill="none"/>
<circle cx="197" cy="624.1" r="1" stroke="#00ffff" stroke-width="1" fill="none"/>
<circle cx="199.4" cy="624.1" r="1" stroke="#00ffff" stroke-width="1" fill="none"/>
<line x1="198.5" y1="621.5" x2="198.5" y2="625.7" stroke="#00ffff" stroke-width="1"/>
<line x1="197.1" y1="621.5" x2="199.9" y2="621.5" stroke="#00ffff" stroke-width="1"/>
<text x="175.5" y="617.26" font-size="4.32" fill="#ffffff" textLength="8.8" lengthAdjust="spacingAndGlyphs" stroke="#ffffff" stroke-width="0.3">???</text>
<text x="189.7" y="617.19" font-size="4.14" fill="#00ffff" textLength="9.2" lengthAdjust="spacingAndGlyphs" font-weight="bold" stroke="#00ffff" stroke-width="0.3">DWD</text>
<text x="227" y="622.16" font-size="4.32" fill="#00ffff" textLength="11" lengthAdjust="spacingAndGlyphs" font-weight="bold" stroke="#00ffff" stroke-width="0.3">????</text>
<text x="287.2" y="595.56" font-size="4.32" fill="#00ff00" textLength="11.6" lengthAdjust="spacingAndGlyphs" font-weight="bold" stroke="#00ff00" stroke-width="0.3">????</text>
<line x1="212" y1="624.1" x2="212" y2="622.7" stroke="#00ffff" stroke-width="1"/>
<line x1="238" y1="624.1" x2="238" y2="622.7" stroke="#00ffff" stroke-width="1"/>
<line x1="262" y1="624.1" x2="262" y2="622.7" stroke="#00ffff" stroke-width="1"/>
<line x1="285" y1="624.1" x2="285" y2="622.7" stroke="#00ffff" stroke-width="1"/>
<line x1="300" y1="624.1" x2="300" y2="622.7" stroke="#00ffff" stroke-width="1"/>
<text transform="translate(167.86 632.3) rotate(-90)" font-size="4.6" fill="#00ffff" stroke="#00ffff" stroke-width="0.35" textLength="9.8" lengthAdjust="spacingAndGlyphs" font-weight="bold">???</text>
<line x1="222.7" y1="599.2" x2="230" y2="619.6" stroke="#ffffff" stroke-width="1"/>
<line x1="258.3" y1="599.2" x2="265.1" y2="619.6" stroke="#ffffff" stroke-width="1"/>
<text x="209.6" y="619.96" font-size="4.32" fill="#ffffff" textLength="3.4" lengthAdjust="spacingAndGlyphs" stroke="#ffffff" stroke-width="0.3">2</text>
<line x1="213.5" y1="620.4" x2="215.8" y2="616.4" stroke="#ffffff" stroke-width="1"/>
<text x="249.5" y="619.96" font-size="4.32" fill="#ffffff" textLength="3" lengthAdjust="spacingAndGlyphs" stroke="#ffffff" stroke-width="0.3">2</text>
<line x1="252.8" y1="620.4" x2="255" y2="616.4" stroke="#ffffff" stroke-width="1"/>
<text x="255" y="631.16" font-size="4.32" fill="#ffffff" textLength="3" lengthAdjust="spacingAndGlyphs" stroke="#ffffff" stroke-width="0.3">3</text>
<polyline points="254,631.6 258.6,631.6 267,624.9" stroke="#ffffff" stroke-width="1" fill="none"/>
<polyline points="267,571.3 282.7,566.6" stroke="#ffffff" stroke-width="1" fill="none"/>
<text x="282.6" y="566.09" font-size="4.14" fill="#ffffff" textLength="2" lengthAdjust="spacingAndGlyphs" stroke="#ffffff" stroke-width="0.3">1</text>
<text x="187.5" y="548.12" font-size="4.5" fill="#ffffff" textLength="6.5" lengthAdjust="spacingAndGlyphs" stroke="#ffffff" stroke-width="0.3">??</text>
<line x1="183.3" y1="550.3" x2="203.8" y2="550.3" stroke="#ffffff" stroke-width="1"/>
<line x1="203.8" y1="550.3" x2="221.3" y2="559.2" stroke="#ffffff" stroke-width="1"/>
<text x="184" y="554.62" font-size="4.5" fill="#ffffff" textLength="16" lengthAdjust="spacingAndGlyphs" font-weight="bold" stroke="#ffffff" stroke-width="0.3">?????</text>
<line x1="203.4" y1="551.3" x2="204.6" y2="553.5" stroke="#ffffff" stroke-width="1"/>
<text x="194.6" y="559.22" font-size="4.5" fill="#ffffff" textLength="6.2" lengthAdjust="spacingAndGlyphs" stroke="#ffffff" stroke-width="0.3">??</text>
<line x1="194" y1="561.3" x2="205.7" y2="561.3" stroke="#ffffff" stroke-width="1"/>
<line x1="205.7" y1="561.3" x2="221.3" y2="568" stroke="#ffffff" stroke-width="1"/>
<text x="184.3" y="567.12" font-size="4.5" fill="#ffffff" textLength="12.7" lengthAdjust="spacingAndGlyphs" stroke="#ffffff" stroke-width="0.3">????</text>
<line x1="181.4" y1="568.5" x2="202.8" y2="568.5" stroke="#ffffff" stroke-width="1"/>
<line x1="202.8" y1="568.5" x2="219.4" y2="576.7" stroke="#ffffff" stroke-width="1"/>
<text x="181.4" y="573.12" font-size="4.5" fill="#ffffff" textLength="18.6" lengthAdjust="spacingAndGlyphs" font-weight="bold" stroke="#ffffff" stroke-width="0.3">??????</text>
<text x="189.6" y="578.32" font-size="4.5" fill="#ffffff" textLength="6.4" lengthAdjust="spacingAndGlyphs" stroke="#ffffff" stroke-width="0.3">??</text>
<line x1="180.4" y1="580.6" x2="203.8" y2="580.6" stroke="#ffffff" stroke-width="1"/>
<line x1="203.8" y1="580.6" x2="217.4" y2="586.5" stroke="#ffffff" stroke-width="1"/>
<text x="181" y="585.12" font-size="4.5" fill="#ffffff" textLength="22" lengthAdjust="spacingAndGlyphs" font-weight="bold" stroke="#ffffff" stroke-width="0.3">???????</text>
<text x="179.4" y="590.46" font-size="4.32" fill="#ffffff" textLength="9.8" lengthAdjust="spacingAndGlyphs" stroke="#ffffff" stroke-width="0.3">???</text>
<text x="193.2" y="590.39" font-size="4.14" fill="#00ffff" textLength="9.6" lengthAdjust="spacingAndGlyphs" font-weight="bold" stroke="#00ffff" stroke-width="0.3">DWD</text>
<text x="140" y="577.72" font-size="5.6" fill="#ffffff" textLength="9.4" lengthAdjust="spacingAndGlyphs" stroke="#ffffff" stroke-width="0.22">???</text>
<text x="233.6" y="579.86" font-size="4.32" fill="#ffffff" textLength="6.8" lengthAdjust="spacingAndGlyphs" stroke="#ffffff" stroke-width="0.3">??</text>
<rect x="233" y="581.7" width="10.9" height="3.5" stroke="#00ffff" stroke-width="0" fill="#00ffff"/>
<text x="233.8" y="584.86" font-size="3.78" fill="#004040" textLength="9.6" lengthAdjust="spacingAndGlyphs" font-weight="bold" stroke="#004040" stroke-width="0.3">???</text>
<line x1="243.7" y1="586.1" x2="230" y2="596.1" stroke="#ffffff" stroke-width="1"/>
<text x="275.3" y="550.02" font-size="4.5" fill="#ffffff" textLength="13.2" lengthAdjust="spacingAndGlyphs" stroke="#ffffff" stroke-width="0.3">????</text>
<text x="293.4" y="550.36" font-size="4.32" fill="#ffffff" textLength="9.7" lengthAdjust="spacingAndGlyphs" font-weight="bold" stroke="#ffffff" stroke-width="0.3">???</text>
<line x1="275.9" y1="551.8" x2="303.1" y2="551.8" stroke="#ffffff" stroke-width="1"/>
<line x1="275.9" y1="551.8" x2="269" y2="556.4" stroke="#ffffff" stroke-width="1"/>
<text x="277" y="555.89" font-size="4.14" fill="#ffffff" textLength="18" lengthAdjust="spacingAndGlyphs" font-weight="bold" stroke="#ffffff" stroke-width="0.3">??????</text>
<text x="274.5" y="578.42" font-size="4.5" fill="#ffffff" textLength="12.1" lengthAdjust="spacingAndGlyphs" stroke="#ffffff" stroke-width="0.3">?? ??</text>
<line x1="269" y1="579.7" x2="292.4" y2="579.7" stroke="#ffffff" stroke-width="1"/>
<line x1="269" y1="579.7" x2="264.2" y2="594.3" stroke="#ffffff" stroke-width="1"/>
<text x="272" y="584.62" font-size="4.5" fill="#ffffff" textLength="19" lengthAdjust="spacingAndGlyphs" font-weight="bold" stroke="#ffffff" stroke-width="0.3">??????</text>
<text transform="translate(299.26 479.9) rotate(-90)" font-size="4.6" fill="#00ff00" stroke="#00ff00" stroke-width="0.35" textLength="10.7" lengthAdjust="spacingAndGlyphs" font-weight="bold">????</text>
<text transform="translate(307.06 479.9) rotate(-90)" font-size="4.6" fill="#00ff00" stroke="#00ff00" stroke-width="0.35" textLength="10.7" lengthAdjust="spacingAndGlyphs" font-weight="bold">????</text>
<line x1="302.2" y1="491.5" x2="348.7" y2="491.5" stroke="#00ff00" stroke-width="2"/>
<polygon points="314.5,493 314.5,489.6 316.4,489.6 316.4,486.8 318.2,486.8 318.2,489.6 320.4,489.6 320.4,493" stroke="#00ff00" stroke-width="1" fill="#00ff00"/>
<text x="323" y="489.22" font-size="4.5" fill="#00ff00" textLength="19.3" lengthAdjust="spacingAndGlyphs" font-weight="bold" stroke="#00ff00" stroke-width="0.3">??????</text>
<text x="328.6" y="496.96" font-size="4.32" fill="#00ff00" textLength="9.6" lengthAdjust="spacingAndGlyphs" font-weight="bold" stroke="#00ff00" stroke-width="0.3">???</text>
<line x1="309.6" y1="579.4" x2="348.7" y2="579.4" stroke="#00ff00" stroke-width="1.1"/>
<circle cx="315.2" cy="579.4" r="1.3" stroke="#00ff00" stroke-width="1" fill="none"/>
<circle cx="318.2" cy="579.4" r="1.3" stroke="#00ff00" stroke-width="1" fill="none"/>
<polygon points="315,577.4 316.7,574.8 318.4,577.4" stroke="#00ff00" stroke-width="1" fill="#00ff00"/>
<text x="323" y="577.02" font-size="4.5" fill="#00ff00" textLength="19" lengthAdjust="spacingAndGlyphs" font-weight="bold" stroke="#00ff00" stroke-width="0.3">??????</text>
<polyline points="315.7,580 317.4,589.3 323,589.3 323,580" stroke="#ffffff" stroke-width="1" fill="none"/>
<polyline points="323,589.3 330.2,589.3" stroke="#ffffff" stroke-width="1" fill="none"/>
<polyline points="325,580 326.4,589.3" stroke="#ffffff" stroke-width="1" fill="none"/>
<text x="319" y="586.49" font-size="4.14" fill="#ffffff" textLength="2" lengthAdjust="spacingAndGlyphs" stroke="#ffffff" stroke-width="0.3">1</text>
<text x="328.6" y="584.56" font-size="4.32" fill="#00ff00" textLength="9.6" lengthAdjust="spacingAndGlyphs" font-weight="bold" stroke="#00ff00" stroke-width="0.3">???</text>
<line x1="327" y1="588" x2="329" y2="583.6" stroke="#ffffff" stroke-width="1"/>
</g>
<g transform="translate(207.5 0)">
<text x="231" y="165.36" font-size="6" fill="#ffffff" textLength="15.5" lengthAdjust="spacingAndGlyphs" stroke="#ffffff" stroke-width="0.22">? ? ?</text>
<line x1="260.7" y1="174.4" x2="260.7" y2="219.5" stroke="#ffffff" stroke-width="1"/>
<line x1="259" y1="178.5" x2="260.7" y2="178.5" stroke="#ffffff" stroke-width="1"/>
<line x1="259" y1="185" x2="260.7" y2="185" stroke="#ffffff" stroke-width="1"/>
<line x1="259" y1="210.5" x2="260.7" y2="210.5" stroke="#ffffff" stroke-width="1"/>
<line x1="259" y1="216" x2="260.7" y2="216" stroke="#ffffff" stroke-width="1"/>
<line x1="258.5" y1="175" x2="263" y2="175" stroke="#ffffff" stroke-width="1"/>
<line x1="260.7" y1="190" x2="310" y2="190" stroke="#00ff00" stroke-width="2"/>
<line x1="260.7" y1="197" x2="303" y2="197" stroke="#00ff00" stroke-width="2"/>
<line x1="260.7" y1="205" x2="295" y2="205" stroke="#00ff00" stroke-width="2"/>
<line x1="310" y1="189" x2="310" y2="597.6" stroke="#00ff00" stroke-width="2"/>
<line x1="302.5" y1="196" x2="302.5" y2="509.5" stroke="#00ff00" stroke-width="1"/>
<line x1="295" y1="204" x2="295" y2="429.6" stroke="#00ff00" stroke-width="2"/>
<text x="270" y="187.82" font-size="4.5" fill="#00ff00" textLength="12" lengthAdjust="spacingAndGlyphs" font-weight="bold" stroke="#00ff00" stroke-width="0.3">????</text>
<text x="270" y="195.42" font-size="4.5" fill="#00ff00" textLength="12" lengthAdjust="spacingAndGlyphs" font-weight="bold" stroke="#00ff00" stroke-width="0.3">????</text>
<text x="270" y="202.82" font-size="4.5" fill="#00ff00" textLength="12" lengthAdjust="spacingAndGlyphs" font-weight="bold" stroke="#00ff00" stroke-width="0.3">????</text>
<text x="214" y="204.22" font-size="4.5" fill="#ffffff" textLength="22" lengthAdjust="spacingAndGlyphs" stroke="#ffffff" stroke-width="0.3">???????</text>
<line x1="210" y1="206.5" x2="247.6" y2="206.5" stroke="#ffffff" stroke-width="1"/>
<line x1="247.6" y1="206.5" x2="260.7" y2="197.3" stroke="#ffffff" stroke-width="1"/>
<text x="210" y="212.22" font-size="4.5" fill="#ffffff" textLength="31" lengthAdjust="spacingAndGlyphs" stroke="#ffffff" stroke-width="0.3">??????????</text>
<line x1="255.4" y1="227.5" x2="294.4" y2="227.5" stroke="#00ff00" stroke-width="1"/>
<rect x="256.4" y="222.4" width="18.6" height="4.2" stroke="#00ff00" stroke-width="0" fill="#00ff00"/>
<text x="257" y="226.09" font-size="4.14" fill="#003300" textLength="17.6" lengthAdjust="spacingAndGlyphs" font-weight="bold" stroke="#003300" stroke-width="0.3">??????</text>
<circle cx="286" cy="227.5" r="1.1" stroke="#00ff00" stroke-width="1" fill="none"/>
<circle cx="289" cy="227.5" r="1.1" stroke="#00ff00" stroke-width="1" fill="none"/>
<line x1="287.5" y1="224.6" x2="287.5" y2="227.5" stroke="#00ff00" stroke-width="1"/>
<line x1="286" y1="224.6" x2="289" y2="224.6" stroke="#00ff00" stroke-width="1"/>
<text x="265" y="232.56" font-size="4.32" fill="#00ff00" textLength="10" lengthAdjust="spacingAndGlyphs" font-weight="bold" stroke="#00ff00" stroke-width="0.3">???</text>
<text transform="translate(291.86 246.4) rotate(-90)" font-size="4.6" fill="#00ff00" stroke="#00ff00" stroke-width="0.35" textLength="11.7" lengthAdjust="spacingAndGlyphs" font-weight="bold">????</text>
<text transform="translate(299.56 246.4) rotate(-90)" font-size="4.6" fill="#00ff00" stroke="#00ff00" stroke-width="0.35" textLength="11.7" lengthAdjust="spacingAndGlyphs" font-weight="bold">????</text>
<text transform="translate(307.06 246.4) rotate(-90)" font-size="4.6" fill="#00ff00" stroke="#00ff00" stroke-width="0.35" textLength="11.7" lengthAdjust="spacingAndGlyphs" font-weight="bold">????</text>
<polygon points="215.1,236.7 231.1,236.7 223.1,246.5" stroke="#ffffff" stroke-width="1" fill="none"/>
<line x1="223.1" y1="246.5" x2="223.1" y2="270" stroke="#ffffff" stroke-width="1"/>
<line x1="218.7" y1="247.4" x2="227.9" y2="247.4" stroke="#ffffff" stroke-width="1"/>
<rect x="220.7" y="251.9" width="5" height="2.8" stroke="#ffffff" stroke-width="0" fill="#ffffff"/>
<line x1="219.7" y1="251.9" x2="219.7" y2="254.7" stroke="#ffffff" stroke-width="1"/>
<line x1="225.7" y1="252.7" x2="227.9" y2="251.7" stroke="#ffffff" stroke-width="1"/>
<rect x="221.7" y="261.5" width="2.8" height="4" stroke="#ffffff" stroke-width="1" fill="none"/>
<polygon points="216.25,281.2 216.25,275.6 221.2,275.6 221.2,270 225,270 225,275.6 231.05,275.6 231.05,281.2" stroke="#ffffff" stroke-width="1" fill="none"/>
<rect x="215.5" y="268" width="2.2" height="2.4" stroke="#ffffff" stroke-width="0" fill="#ffffff"/>
<circle cx="219.5" cy="269.2" r="1.1" stroke="#ffffff" stroke-width="1" fill="none"/>
<rect x="221.2" y="267.8" width="3.8" height="2.6" stroke="#ffffff" stroke-width="0" fill="#ffffff"/>
<polygon points="248.5,236.7 264.5,236.7 256.5,246.5" stroke="#ffffff" stroke-width="1" fill="none"/>
<line x1="256.5" y1="246.5" x2="256.5" y2="270" stroke="#ffffff" stroke-width="1"/>
<line x1="252.1" y1="247.4" x2="261.3" y2="247.4" stroke="#ffffff" stroke-width="1"/>
<rect x="254.1" y="251.9" width="5" height="2.8" stroke="#ffffff" stroke-width="0" fill="#ffffff"/>
<line x1="253.1" y1="251.9" x2="253.1" y2="254.7" stroke="#ffffff" stroke-width="1"/>
<line x1="259.1" y1="252.7" x2="261.3" y2="251.7" stroke="#ffffff" stroke-width="1"/>
<rect x="255.1" y="261.5" width="2.8" height="4" stroke="#ffffff" stroke-width="1" fill="none"/>
<polygon points="250.25,281.2 250.25,275.6 254.6,275.6 254.6,270 258.4,270 258.4,275.6 265.05,275.6 265.05,281.2" stroke="#ffffff" stroke-width="1" fill="none"/>
<rect x="248.9" y="268" width="2.2" height="2.4" stroke="#ffffff" stroke-width="0" fill="#ffffff"/>
<circle cx="252.9" cy="269.2" r="1.1" stroke="#ffffff" stroke-width="1" fill="none"/>
<rect x="254.6" y="267.8" width="3.8" height="2.6" stroke="#ffffff" stroke-width="0" fill="#ffffff"/>
<polygon points="215.1,306.6 231.1,306.6 223.1,316.4" stroke="#ffffff" stroke-width="1" fill="none"/>
<line x1="223.1" y1="316.4" x2="223.1" y2="339.9" stroke="#ffffff" stroke-width="1"/>
<line x1="218.7" y1="317.3" x2="227.9" y2="317.3" stroke="#ffffff" stroke-width="1"/>
<rect x="220.7" y="321.8" width="5" height="2.8" stroke="#ffffff" stroke-width="0" fill="#ffffff"/>
<line x1="219.7" y1="321.8" x2="219.7" y2="324.6" stroke="#ffffff" stroke-width="1"/>
<line x1="225.7" y1="322.6" x2="227.9" y2="321.6" stroke="#ffffff" stroke-width="1"/>
<rect x="221.7" y="331.4" width="2.8" height="4" stroke="#ffffff" stroke-width="1" fill="none"/>
<polygon points="213.85,351.4 213.85,345.6 221.2,342 221.2,338 225,338 225,342 228.25,345.6 228.25,351.4" stroke="#ffffff" stroke-width="1" fill="none"/>
<line x1="213.85" y1="345.6" x2="228.25" y2="345.6" stroke="#ffffff" stroke-width="1"/>
<polygon points="211.25,348.4 213.85,346.6 213.85,350.2" stroke="#ffffff" stroke-width="1" fill="#ffffff"/>
<rect x="215.5" y="338" width="2.2" height="2.4" stroke="#ffffff" stroke-width="0" fill="#ffffff"/>
<circle cx="219.5" cy="339.2" r="1.1" stroke="#ffffff" stroke-width="1" fill="none"/>
<rect x="221.2" y="337.8" width="3.8" height="2.6" stroke="#ffffff" stroke-width="0" fill="#ffffff"/>
<polygon points="248.5,306.6 264.5,306.6 256.5,316.4" stroke="#ffffff" stroke-width="1" fill="none"/>
<line x1="256.5" y1="316.4" x2="256.5" y2="339.9" stroke="#ffffff" stroke-width="1"/>
<line x1="252.1" y1="317.3" x2="261.3" y2="317.3" stroke="#ffffff" stroke-width="1"/>
<rect x="254.1" y="321.8" width="5" height="2.8" stroke="#ffffff" stroke-width="0" fill="#ffffff"/>
<line x1="253.1" y1="321.8" x2="253.1" y2="324.6" stroke="#ffffff" stroke-width="1"/>
<line x1="259.1" y1="322.6" x2="261.3" y2="321.6" stroke="#ffffff" stroke-width="1"/>
<rect x="255.1" y="331.4" width="2.8" height="4" stroke="#ffffff" stroke-width="1" fill="none"/>
<polygon points="248.45,351.2 248.45,345.6 254.6,345.6 254.6,340 258.4,340 258.4,345.6 263.25,345.6 263.25,351.2" stroke="#ffffff" stroke-width="1" fill="none"/>
<rect x="248.9" y="338" width="2.2" height="2.4" stroke="#ffffff" stroke-width="0" fill="#ffffff"/>
<circle cx="252.9" cy="339.2" r="1.1" stroke="#ffffff" stroke-width="1" fill="none"/>
<rect x="254.6" y="337.8" width="3.8" height="2.6" stroke="#ffffff" stroke-width="0" fill="#ffffff"/>
<polygon points="215.1,387.7 231.1,387.7 223.1,397.5" stroke="#ffffff" stroke-width="1" fill="none"/>
<line x1="223.1" y1="397.5" x2="223.1" y2="421" stroke="#ffffff" stroke-width="1"/>
<line x1="218.7" y1="398.4" x2="227.9" y2="398.4" stroke="#ffffff" stroke-width="1"/>
<rect x="220.7" y="402.9" width="5" height="2.8" stroke="#ffffff" stroke-width="0" fill="#ffffff"/>
<line x1="219.7" y1="402.9" x2="219.7" y2="405.7" stroke="#ffffff" stroke-width="1"/>
<line x1="225.7" y1="403.7" x2="227.9" y2="402.7" stroke="#ffffff" stroke-width="1"/>
<rect x="221.7" y="412.5" width="2.8" height="4" stroke="#ffffff" stroke-width="1" fill="none"/>
<polygon points="216.25,432.2 216.25,426.6 221.2,426.6 221.2,421 225,421 225,426.6 231.05,426.6 231.05,432.2" stroke="#ffffff" stroke-width="1" fill="none"/>
<rect x="215.5" y="419" width="2.2" height="2.4" stroke="#ffffff" stroke-width="0" fill="#ffffff"/>
<circle cx="219.5" cy="420.2" r="1.1" stroke="#ffffff" stroke-width="1" fill="none"/>
<rect x="221.2" y="418.8" width="3.8" height="2.6" stroke="#ffffff" stroke-width="0" fill="#ffffff"/>
<polygon points="248.5,387.7 264.5,387.7 256.5,397.5" stroke="#ffffff" stroke-width="1" fill="none"/>
<line x1="256.5" y1="397.5" x2="256.5" y2="421" stroke="#ffffff" stroke-width="1"/>
<line x1="252.1" y1="398.4" x2="261.3" y2="398.4" stroke="#ffffff" stroke-width="1"/>
<rect x="254.1" y="402.9" width="5" height="2.8" stroke="#ffffff" stroke-width="0" fill="#ffffff"/>
<line x1="253.1" y1="402.9" x2="253.1" y2="405.7" stroke="#ffffff" stroke-width="1"/>
<line x1="259.1" y1="403.7" x2="261.3" y2="402.7" stroke="#ffffff" stroke-width="1"/>
<rect x="255.1" y="412.5" width="2.8" height="4" stroke="#ffffff" stroke-width="1" fill="none"/>
<polygon points="250.25,432.2 250.25,426.6 254.6,426.6 254.6,421 258.4,421 258.4,426.6 265.05,426.6 265.05,432.2" stroke="#ffffff" stroke-width="1" fill="none"/>
<rect x="248.9" y="419" width="2.2" height="2.4" stroke="#ffffff" stroke-width="0" fill="#ffffff"/>
<circle cx="252.9" cy="420.2" r="1.1" stroke="#ffffff" stroke-width="1" fill="none"/>
<rect x="254.6" y="418.8" width="3.8" height="2.6" stroke="#ffffff" stroke-width="0" fill="#ffffff"/>
<polyline points="215.6,278.7 189.5,278.7" stroke="#ffffff" stroke-width="2" fill="none"/>
<polyline points="189.5,278.7 189.5,348.3 214,348.3" stroke="#ffffff" stroke-width="1" fill="none"/>
<line x1="230.4" y1="278.7" x2="249" y2="278.7" stroke="#ffffff" stroke-width="2"/>
<line x1="263.8" y1="278.7" x2="271" y2="278.7" stroke="#ffffff" stroke-width="2"/>
<line x1="271" y1="278.7" x2="294.4" y2="278.7" stroke="#00ff00" stroke-width="2"/>
<rect x="200.8" y="277.5" width="2" height="2.4" stroke="#ffffff" stroke-width="0" fill="#ffffff"/>
<rect x="210.6" y="277.5" width="2" height="2.4" stroke="#ffffff" stroke-width="0" fill="#ffffff"/>
<rect x="231.6" y="277.5" width="2" height="2.4" stroke="#ffffff" stroke-width="0" fill="#ffffff"/>
<rect x="236.9" y="277.5" width="2" height="2.4" stroke="#ffffff" stroke-width="0" fill="#ffffff"/>
<rect x="242.1" y="277.5" width="2" height="2.4" stroke="#ffffff" stroke-width="0" fill="#ffffff"/>
<rect x="265.1" y="277.5" width="2" height="2.4" stroke="#ffffff" stroke-width="0" fill="#ffffff"/>
<rect x="269.4" y="277.5" width="2" height="2.4" stroke="#ffffff" stroke-width="0" fill="#ffffff"/>
<text x="276.5" y="278.16" font-size="4.32" fill="#ffffff" textLength="10.5" lengthAdjust="spacingAndGlyphs" font-weight="bold" stroke="#ffffff" stroke-width="0.3">????</text>
<text x="233" y="277.63" font-size="3.96" fill="#ffffff" textLength="14" lengthAdjust="spacingAndGlyphs" font-weight="bold" stroke="#ffffff" stroke-width="0.3">?????</text>
<line x1="201.9" y1="280" x2="201.9" y2="297.6" stroke="#00ffff" stroke-width="1"/>
<polygon points="200.8,291.47 203,291.47 201.9,293.67" stroke="#00ffff" stroke-width="1" fill="#00ffff"/>
<line x1="211.9" y1="280" x2="211.9" y2="297.6" stroke="#00ffff" stroke-width="1"/>
<polygon points="210.8,291.47 213,291.47 211.9,293.67" stroke="#00ffff" stroke-width="1" fill="#00ffff"/>
<line x1="229" y1="280" x2="229" y2="297.6" stroke="#00ffff" stroke-width="1"/>
<polygon points="227.9,291.47 230.1,291.47 229,293.67" stroke="#00ffff" stroke-width="1" fill="#00ffff"/>
<line x1="234" y1="280" x2="234" y2="297.6" stroke="#00ffff" stroke-width="1"/>
<polygon points="232.9,291.47 235.1,291.47 234,293.67" stroke="#00ffff" stroke-width="1" fill="#00ffff"/>
<line x1="237.9" y1="280" x2="237.9" y2="297.6" stroke="#00ffff" stroke-width="1"/>
<polygon points="236.8,291.47 239,291.47 237.9,293.67" stroke="#00ffff" stroke-width="1" fill="#00ffff"/>
<line x1="242.9" y1="280" x2="242.9" y2="297.6" stroke="#00ffff" stroke-width="1"/>
<polygon points="241.8,291.47 244,291.47 242.9,293.67" stroke="#00ffff" stroke-width="1" fill="#00ffff"/>
<line x1="262.9" y1="280" x2="262.9" y2="297.6" stroke="#00ffff" stroke-width="1"/>
<polygon points="261.8,291.47 264,291.47 262.9,293.67" stroke="#00ffff" stroke-width="1" fill="#00ffff"/>
<line x1="266.3" y1="280" x2="266.3" y2="297.6" stroke="#00ffff" stroke-width="1"/>
<polygon points="265.2,291.47 267.4,291.47 266.3,293.67" stroke="#00ffff" stroke-width="1" fill="#00ffff"/>
<text transform="translate(232.18 295.6) rotate(-90)" font-size="4.4" fill="#00ffff" stroke="#00ffff" stroke-width="0.35" textLength="13.1" lengthAdjust="spacingAndGlyphs" font-weight="bold">????</text>
<text transform="translate(265.58 295.6) rotate(-90)" font-size="4.4" fill="#00ffff" stroke="#00ffff" stroke-width="0.35" textLength="13.1" lengthAdjust="spacingAndGlyphs" font-weight="bold">????</text>
<polyline points="200.8,297.7 283.6,297.7 283.6,368.4" stroke="#00ffff" stroke-width="1" fill="none"/>
<text x="241.5" y="296.09" font-size="4.14" fill="#00ffff" textLength="13" lengthAdjust="spacingAndGlyphs" font-weight="bold" stroke="#00ffff" stroke-width="0.3">????</text>
<text x="188" y="237.22" font-size="4.5" fill="#ffffff" textLength="6.5" lengthAdjust="spacingAndGlyphs" stroke="#ffffff" stroke-width="0.3">??</text>
<line x1="183" y1="239.3" x2="203.8" y2="239.3" stroke="#ffffff" stroke-width="1"/>
<line x1="203.8" y1="239.3" x2="221.3" y2="252.7" stroke="#ffffff" stroke-width="1"/>
<text x="183" y="243.42" font-size="4.5" fill="#ffffff" textLength="12" lengthAdjust="spacingAndGlyphs" font-weight="bold" stroke="#ffffff" stroke-width="0.3">????</text>
<line x1="200.3" y1="240.2" x2="201.6" y2="242.2" stroke="#ffffff" stroke-width="1"/>
<text x="193.5" y="248.22" font-size="4.5" fill="#ffffff" textLength="7.5" lengthAdjust="spacingAndGlyphs" stroke="#ffffff" stroke-width="0.3">??</text>
<line x1="193" y1="250.3" x2="203.8" y2="250.3" stroke="#ffffff" stroke-width="1"/>
<line x1="203.8" y1="250.3" x2="221" y2="263" stroke="#ffffff" stroke-width="1"/>
<text x="183" y="256.22" font-size="4.5" fill="#ffffff" textLength="10" lengthAdjust="spacingAndGlyphs" stroke="#ffffff" stroke-width="0.3">???</text>
<line x1="181.5" y1="257.3" x2="203.8" y2="257.3" stroke="#ffffff" stroke-width="1"/>
<line x1="203.8" y1="257.3" x2="219.4" y2="268.8" stroke="#ffffff" stroke-width="1"/>
<text x="182" y="262.02" font-size="4.5" fill="#ffffff" textLength="19.5" lengthAdjust="spacingAndGlyphs" font-weight="bold" stroke="#ffffff" stroke-width="0.3">??????</text>
<text x="188.5" y="267.22" font-size="4.5" fill="#ffffff" textLength="6" lengthAdjust="spacingAndGlyphs" stroke="#ffffff" stroke-width="0.3">??</text>
<line x1="184" y1="269.3" x2="205.7" y2="269.3" stroke="#ffffff" stroke-width="1"/>
<line x1="205.7" y1="269.3" x2="216.4" y2="275.7" stroke="#ffffff" stroke-width="1"/>
<text x="184.5" y="273.82" font-size="4.5" fill="#ffffff" textLength="16" lengthAdjust="spacingAndGlyphs" font-weight="bold" stroke="#ffffff" stroke-width="0.3">?????</text>
<text x="235.5" y="263.76" font-size="4.32" fill="#ffffff" textLength="7.2" lengthAdjust="spacingAndGlyphs" stroke="#ffffff" stroke-width="0.3">??</text>
<rect x="236.3" y="265.2" width="10.3" height="4" stroke="#00ffff" stroke-width="0" fill="#00ffff"/>
<text x="237" y="268.56" font-size="3.78" fill="#004040" textLength="9" lengthAdjust="spacingAndGlyphs" font-weight="bold" stroke="#004040" stroke-width="0.3">???</text>
<line x1="246.2" y1="269.6" x2="233.5" y2="277.2" stroke="#ffffff" stroke-width="1"/>
<text x="269" y="259.22" font-size="4.5" fill="#ffffff" textLength="12.7" lengthAdjust="spacingAndGlyphs" stroke="#ffffff" stroke-width="0.3">? ???</text>
<line x1="265.1" y1="261.4" x2="288" y2="261.4" stroke="#ffffff" stroke-width="1"/>
<line x1="265.1" y1="261.4" x2="270.4" y2="276.6" stroke="#ffffff" stroke-width="1"/>
<text x="268" y="266.68" font-size="4.68" fill="#ffffff" textLength="19.5" lengthAdjust="spacingAndGlyphs" font-weight="bold" stroke="#ffffff" stroke-width="0.3">??????</text>
<line x1="231.6" y1="348.3" x2="248" y2="348.3" stroke="#ffffff" stroke-width="2"/>
<line x1="263" y1="348.3" x2="272.5" y2="348.3" stroke="#00ffff" stroke-width="1"/>
<polyline points="272.5,348.3 272.5,381.4 170.6,381.4" stroke="#00ffff" stroke-width="1" fill="none"/>
<line x1="283.6" y1="305" x2="285.2" y2="305" stroke="#00ffff" stroke-width="1"/>
<line x1="283.6" y1="318" x2="285.2" y2="318" stroke="#00ffff" stroke-width="1"/>
<line x1="283.6" y1="330" x2="285.2" y2="330" stroke="#00ffff" stroke-width="1"/>
<line x1="283.6" y1="340" x2="285.2" y2="340" stroke="#00ffff" stroke-width="1"/>
<line x1="283.6" y1="348" x2="285.2" y2="348" stroke="#00ffff" stroke-width="1"/>
<line x1="283.6" y1="358" x2="285.2" y2="358" stroke="#00ffff" stroke-width="1"/>
<rect x="234" y="347.1" width="2" height="2.4" stroke="#ffffff" stroke-width="0" fill="#ffffff"/>
<rect x="240.8" y="347.1" width="2" height="2.4" stroke="#ffffff" stroke-width="0" fill="#ffffff"/>
<rect x="245.6" y="347.1" width="2" height="2.4" stroke="#ffffff" stroke-width="0" fill="#ffffff"/>
<text x="233.5" y="347.03" font-size="3.96" fill="#ffffff" textLength="13" lengthAdjust="spacingAndGlyphs" font-weight="bold" stroke="#ffffff" stroke-width="0.3">????</text>
<line x1="213.1" y1="352" x2="213.1" y2="368.2" stroke="#00ffff" stroke-width="1"/>
<polygon points="212,362.46 214.2,362.46 213.1,364.66" stroke="#00ffff" stroke-width="1" fill="#00ffff"/>
<line x1="217.4" y1="352" x2="217.4" y2="368.2" stroke="#00ffff" stroke-width="1"/>
<polygon points="216.3,362.46 218.5,362.46 217.4,364.66" stroke="#00ffff" stroke-width="1" fill="#00ffff"/>
<line x1="235" y1="352" x2="235" y2="368.2" stroke="#00ffff" stroke-width="1"/>
<polygon points="233.9,362.46 236.1,362.46 235,364.66" stroke="#00ffff" stroke-width="1" fill="#00ffff"/>
<line x1="241.8" y1="352" x2="241.8" y2="368.2" stroke="#00ffff" stroke-width="1"/>
<polygon points="240.7,362.46 242.9,362.46 241.8,364.66" stroke="#00ffff" stroke-width="1" fill="#00ffff"/>
<line x1="246.6" y1="352" x2="246.6" y2="368.2" stroke="#00ffff" stroke-width="1"/>
<polygon points="245.5,362.46 247.7,362.46 246.6,364.66" stroke="#00ffff" stroke-width="1" fill="#00ffff"/>
<line x1="250.5" y1="352" x2="250.5" y2="368.2" stroke="#00ffff" stroke-width="1"/>
<polygon points="249.4,362.46 251.6,362.46 250.5,364.66" stroke="#00ffff" stroke-width="1" fill="#00ffff"/>
<text transform="translate(215.98 366.2) rotate(-90)" font-size="4.4" fill="#00ffff" stroke="#00ffff" stroke-width="0.35" textLength="11.7" lengthAdjust="spacingAndGlyphs" font-weight="bold">????</text>
<text transform="translate(238.18 366.2) rotate(-90)" font-size="4.4" fill="#00ffff" stroke="#00ffff" stroke-width="0.35" textLength="11.7" lengthAdjust="spacingAndGlyphs" font-weight="bold">????</text>
<text transform="translate(249.58 366.2) rotate(-90)" font-size="4.4" fill="#00ffff" stroke="#00ffff" stroke-width="0.35" textLength="11.7" lengthAdjust="spacingAndGlyphs" font-weight="bold">????</text>
<line x1="174.5" y1="368.4" x2="283.6" y2="368.4" stroke="#00ffff" stroke-width="1"/>
<line x1="174.5" y1="368.4" x2="174.5" y2="381.4" stroke="#00ffff" stroke-width="1"/>
<text x="227" y="367.03" font-size="3.96" fill="#00ffff" textLength="13.5" lengthAdjust="spacingAndGlyphs" font-weight="bold" stroke="#00ffff" stroke-width="0.3">????</text>
<text x="198" y="303.82" font-size="4.5" fill="#ffffff" textLength="5" lengthAdjust="spacingAndGlyphs" stroke="#ffffff" stroke-width="0.3">??</text>
<line x1="193" y1="306" x2="205.7" y2="306" stroke="#ffffff" stroke-width="1"/>
<line x1="205.7" y1="306" x2="221.3" y2="317.7" stroke="#ffffff" stroke-width="1"/>
<text x="193" y="310.62" font-size="4.5" fill="#ffffff" textLength="11" lengthAdjust="spacingAndGlyphs" font-weight="bold" stroke="#ffffff" stroke-width="0.3">????</text>
<line x1="209.5" y1="307" x2="210.6" y2="309" stroke="#ffffff" stroke-width="1"/>
<text x="203.4" y="315.42" font-size="4.5" fill="#ffffff" textLength="6.2" lengthAdjust="spacingAndGlyphs" stroke="#ffffff" stroke-width="0.3">??</text>
<line x1="203.4" y1="316.8" x2="215.5" y2="316.8" stroke="#ffffff" stroke-width="1"/>
<line x1="215.5" y1="316.8" x2="222.3" y2="328.4" stroke="#ffffff" stroke-width="1"/>
<text x="193.5" y="323.22" font-size="4.5" fill="#ffffff" textLength="10.5" lengthAdjust="spacingAndGlyphs" stroke="#ffffff" stroke-width="0.3">????</text>
<line x1="192.5" y1="324.6" x2="213.5" y2="324.6" stroke="#ffffff" stroke-width="1"/>
<line x1="213.5" y1="324.6" x2="221.3" y2="337.2" stroke="#ffffff" stroke-width="1"/>
<text x="193" y="329.22" font-size="4.5" fill="#ffffff" textLength="17.6" lengthAdjust="spacingAndGlyphs" font-weight="bold" stroke="#ffffff" stroke-width="0.3">??????</text>
<text x="198" y="334.02" font-size="4.5" fill="#ffffff" textLength="6" lengthAdjust="spacingAndGlyphs" stroke="#ffffff" stroke-width="0.3">??</text>
<line x1="194" y1="336.2" x2="213.5" y2="336.2" stroke="#ffffff" stroke-width="1"/>
<line x1="213.5" y1="336.2" x2="219.4" y2="341" stroke="#ffffff" stroke-width="1"/>
<text x="194.5" y="340.82" font-size="4.5" fill="#ffffff" textLength="17.5" lengthAdjust="spacingAndGlyphs" font-weight="bold" stroke="#ffffff" stroke-width="0.3">??????</text>
<text x="192" y="347.62" font-size="4.5" fill="#ffffff" textLength="12.7" lengthAdjust="spacingAndGlyphs" font-weight="bold" stroke="#ffffff" stroke-width="0.3">????</text>
<text x="233.6" y="332.56" font-size="4.32" fill="#ffffff" textLength="7.2" lengthAdjust="spacingAndGlyphs" stroke="#ffffff" stroke-width="0.3">??</text>
<text x="233.6" y="336.49" font-size="4.14" fill="#00ffff" textLength="10.8" lengthAdjust="spacingAndGlyphs" font-weight="bold" stroke="#00ffff" stroke-width="0.3">????</text>
<line x1="244.7" y1="337.2" x2="223.3" y2="343" stroke="#ffffff" stroke-width="1"/>
<line x1="244.7" y1="337.2" x2="244.7" y2="345" stroke="#ffffff" stroke-width="1"/>
<text x="158" y="365.08" font-size="4.68" fill="#ffffff" textLength="10.7" lengthAdjust="spacingAndGlyphs" stroke="#ffffff" stroke-width="0.3">????</text>
<line x1="158" y1="366.5" x2="182.3" y2="366.5" stroke="#ffffff" stroke-width="1"/>
<text x="173" y="365.09" font-size="4.14" fill="#00ffff" textLength="9.3" lengthAdjust="spacingAndGlyphs" font-weight="bold" stroke="#00ffff" stroke-width="0.3">DWD</text>
<circle cx="184.5" cy="368.4" r="1.1" stroke="#00ffff" stroke-width="1" fill="none"/>
<circle cx="188.5" cy="368.4" r="1.1" stroke="#00ffff" stroke-width="1" fill="none"/>
<circle cx="193.5" cy="368.4" r="1.1" stroke="#00ffff" stroke-width="1" fill="none"/>
<line x1="196" y1="365.6" x2="196" y2="368.4" stroke="#00ffff" stroke-width="1"/>
<line x1="182.3" y1="366.5" x2="178" y2="377" stroke="#ffffff" stroke-width="1"/>
<rect x="176.5" y="376.8" width="34.7" height="7.7" stroke="#ffffff" stroke-width="1" fill="none"/>
<text x="180.5" y="379.76" font-size="3.78" fill="#00ffff" textLength="8" lengthAdjust="spacingAndGlyphs" font-weight="bold" stroke="#00ffff" stroke-width="0.3">???</text>
<circle cx="181.5" cy="381.4" r="1" stroke="#00ffff" stroke-width="1" fill="none"/>
<circle cx="183.9" cy="381.4" r="1" stroke="#00ffff" stroke-width="1" fill="none"/>
<circle cx="191" cy="381.4" r="1" stroke="#00ffff" stroke-width="1" fill="none"/>
<circle cx="193.4" cy="381.4" r="1" stroke="#00ffff" stroke-width="1" fill="none"/>
<circle cx="200.5" cy="381.4" r="1" stroke="#00ffff" stroke-width="1" fill="none"/>
<circle cx="202.9" cy="381.4" r="1" stroke="#00ffff" stroke-width="1" fill="none"/>
<line x1="204" y1="378.8" x2="204" y2="383" stroke="#00ffff" stroke-width="1"/>
<line x1="202.6" y1="378.8" x2="205.4" y2="378.8" stroke="#00ffff" stroke-width="1"/>
<text x="236" y="379.69" font-size="4.14" fill="#00ffff" textLength="9.7" lengthAdjust="spacingAndGlyphs" font-weight="bold" stroke="#00ffff" stroke-width="0.3">???</text>
<line x1="171" y1="429.6" x2="216" y2="429.6" stroke="#00ffff" stroke-width="1"/>
<line x1="230.4" y1="429.6" x2="249" y2="429.6" stroke="#ffffff" stroke-width="2"/>
<line x1="263.8" y1="429.6" x2="271" y2="429.6" stroke="#ffffff" stroke-width="2"/>
<line x1="271" y1="429.6" x2="294.4" y2="429.6" stroke="#00ff00" stroke-width="1"/>
<rect x="231.6" y="428.4" width="2" height="2.4" stroke="#ffffff" stroke-width="0" fill="#ffffff"/>
<rect x="236.9" y="428.4" width="2" height="2.4" stroke="#ffffff" stroke-width="0" fill="#ffffff"/>
<rect x="243.7" y="428.4" width="2" height="2.4" stroke="#ffffff" stroke-width="0" fill="#ffffff"/>
<rect x="265.1" y="428.4" width="2" height="2.4" stroke="#ffffff" stroke-width="0" fill="#ffffff"/>
<rect x="269.4" y="428.4" width="2" height="2.4" stroke="#ffffff" stroke-width="0" fill="#ffffff"/>
<rect x="176" y="425.3" width="35.2" height="7.5" stroke="#ffffff" stroke-width="1" fill="none"/>
<text x="180" y="428.26" font-size="3.78" fill="#00ffff" textLength="8" lengthAdjust="spacingAndGlyphs" font-weight="bold" stroke="#00ffff" stroke-width="0.3">???</text>
<circle cx="181" cy="429.6" r="1" stroke="#00ffff" stroke-width="1" fill="none"/>
<circle cx="183.4" cy="429.6" r="1" stroke="#00ffff" stroke-width="1" fill="none"/>
<circle cx="190.5" cy="429.6" r="1" stroke="#00ffff" stroke-width="1" fill="none"/>
<circle cx="192.9" cy="429.6" r="1" stroke="#00ffff" stroke-width="1" fill="none"/>
<circle cx="200" cy="429.6" r="1" stroke="#00ffff" stroke-width="1" fill="none"/>
<circle cx="202.4" cy="429.6" r="1" stroke="#00ffff" stroke-width="1" fill="none"/>
<line x1="204" y1="427" x2="204" y2="431.2" stroke="#00ffff" stroke-width="1"/>
<line x1="202.6" y1="427" x2="205.4" y2="427" stroke="#00ffff" stroke-width="1"/>
<text x="276.8" y="428.76" font-size="4.32" fill="#ffffff" textLength="12.7" lengthAdjust="spacingAndGlyphs" font-weight="bold" stroke="#ffffff" stroke-width="0.3">????</text>
<line x1="228.1" y1="431" x2="228.1" y2="449.2" stroke="#00ffff" stroke-width="1"/>
<polygon points="227,442.9 229.2,442.9 228.1,445.1" stroke="#00ffff" stroke-width="1" fill="#00ffff"/>
<line x1="232.6" y1="431" x2="232.6" y2="449.2" stroke="#00ffff" stroke-width="1"/>
<polygon points="231.5,442.9 233.7,442.9 232.6,445.1" stroke="#00ffff" stroke-width="1" fill="#00ffff"/>
<line x1="237.9" y1="431" x2="237.9" y2="449.2" stroke="#00ffff" stroke-width="1"/>
<polygon points="236.8,442.9 239,442.9 237.9,445.1" stroke="#00ffff" stroke-width="1" fill="#00ffff"/>
<line x1="244.7" y1="431" x2="244.7" y2="449.2" stroke="#00ffff" stroke-width="1"/>
<polygon points="243.6,442.9 245.8,442.9 244.7,445.1" stroke="#00ffff" stroke-width="1" fill="#00ffff"/>
<line x1="261.8" y1="431" x2="261.8" y2="449.2" stroke="#00ffff" stroke-width="1"/>
<polygon points="260.7,442.9 262.9,442.9 261.8,445.1" stroke="#00ffff" stroke-width="1" fill="#00ffff"/>
<line x1="266.1" y1="431" x2="266.1" y2="449.2" stroke="#00ffff" stroke-width="1"/>
<polygon points="265,442.9 267.2,442.9 266.1,445.1" stroke="#00ffff" stroke-width="1" fill="#00ffff"/>
<text transform="translate(231.18 447.2) rotate(-90)" font-size="4.4" fill="#00ffff" stroke="#00ffff" stroke-width="0.35" textLength="13.7" lengthAdjust="spacingAndGlyphs" font-weight="bold">?????</text>
<text transform="translate(264.98 447.2) rotate(-90)" font-size="4.4" fill="#00ffff" stroke="#00ffff" stroke-width="0.35" textLength="13.7" lengthAdjust="spacingAndGlyphs" font-weight="bold">?????</text>
<polyline points="174.5,429.6 174.5,436 199.9,436 199.9,449.3 271,449.3" stroke="#00ffff" stroke-width="1" fill="none"/>
<circle cx="185.5" cy="436" r="1" stroke="#00ffff" stroke-width="1" fill="none"/>
<circle cx="188" cy="436" r="1" stroke="#00ffff" stroke-width="1" fill="none"/>
<polygon points="196.2,441.2 199.9,439.6 199.9,442.8" stroke="#00ffff" stroke-width="1" fill="#00ffff"/>
<text x="208.6" y="448.16" font-size="4.32" fill="#00ffff" textLength="13.7" lengthAdjust="spacingAndGlyphs" font-weight="bold" stroke="#00ffff" stroke-width="0.3">?????</text>
<text x="157.4" y="423.62" font-size="4.5" fill="#ffffff" textLength="9.4" lengthAdjust="spacingAndGlyphs" stroke="#ffffff" stroke-width="0.3">???</text>
<text x="172.2" y="423.49" font-size="4.14" fill="#00ffff" textLength="9.2" lengthAdjust="spacingAndGlyphs" font-weight="bold" stroke="#00ffff" stroke-width="0.3">DWD</text>
<text transform="translate(167.86 448.7) rotate(-90)" font-size="4.6" fill="#00ffff" stroke="#00ffff" stroke-width="0.35" textLength="11.7" lengthAdjust="spacingAndGlyphs" font-weight="bold">????</text>
<text x="188" y="388.42" font-size="4.5" fill="#ffffff" textLength="6.5" lengthAdjust="spacingAndGlyphs" stroke="#ffffff" stroke-width="0.3">??</text>
<line x1="183" y1="390.5" x2="203.8" y2="390.5" stroke="#ffffff" stroke-width="1"/>
<line x1="203.8" y1="390.5" x2="221.3" y2="403.9" stroke="#ffffff" stroke-width="1"/>
<text x="183" y="394.62" font-size="4.5" fill="#ffffff" textLength="12" lengthAdjust="spacingAndGlyphs" font-weight="bold" stroke="#ffffff" stroke-width="0.3">????</text>
<line x1="200.3" y1="391.4" x2="201.6" y2="393.4" stroke="#ffffff" stroke-width="1"/>
<text x="193.5" y="399.42" font-size="4.5" fill="#ffffff" textLength="7.5" lengthAdjust="spacingAndGlyphs" stroke="#ffffff" stroke-width="0.3">??</text>
<line x1="193" y1="401.5" x2="203.8" y2="401.5" stroke="#ffffff" stroke-width="1"/>
<line x1="203.8" y1="401.5" x2="221" y2="414.2" stroke="#ffffff" stroke-width="1"/>
<text x="183.3" y="406.02" font-size="4.5" fill="#ffffff" textLength="12.7" lengthAdjust="spacingAndGlyphs" stroke="#ffffff" stroke-width="0.3">????</text>
<line x1="181.4" y1="407.4" x2="203.8" y2="407.4" stroke="#ffffff" stroke-width="1"/>
<line x1="203.8" y1="407.4" x2="221.3" y2="419.5" stroke="#ffffff" stroke-width="1"/>
<text x="183" y="411.82" font-size="4.5" fill="#ffffff" textLength="20" lengthAdjust="spacingAndGlyphs" font-weight="bold" stroke="#ffffff" stroke-width="0.3">???????</text>
<text x="188.2" y="416.22" font-size="4.5" fill="#ffffff" textLength="6.8" lengthAdjust="spacingAndGlyphs" stroke="#ffffff" stroke-width="0.3">??</text>
<line x1="185.3" y1="418" x2="205.7" y2="418" stroke="#ffffff" stroke-width="1"/>
<line x1="205.7" y1="418" x2="216.4" y2="424.4" stroke="#ffffff" stroke-width="1"/>
<text x="186" y="422.32" font-size="4.5" fill="#ffffff" textLength="18" lengthAdjust="spacingAndGlyphs" font-weight="bold" stroke="#ffffff" stroke-width="0.3">??????</text>
<text x="236" y="413.56" font-size="4.32" fill="#ffffff" textLength="6.7" lengthAdjust="spacingAndGlyphs" stroke="#ffffff" stroke-width="0.3">??</text>
<rect x="235.3" y="415.1" width="10.9" height="3.5" stroke="#00ffff" stroke-width="0" fill="#00ffff"/>
<text x="236" y="418.26" font-size="3.78" fill="#004040" textLength="9.6" lengthAdjust="spacingAndGlyphs" font-weight="bold" stroke="#004040" stroke-width="0.3">???</text>
<line x1="246" y1="419.2" x2="234" y2="428" stroke="#ffffff" stroke-width="1"/>
<text x="270" y="410.42" font-size="4.5" fill="#ffffff" textLength="12" lengthAdjust="spacingAndGlyphs" stroke="#ffffff" stroke-width="0.3">?????</text>
<line x1="265.1" y1="412" x2="288" y2="412" stroke="#ffffff" stroke-width="1"/>
<line x1="265.1" y1="412" x2="270.4" y2="429.2" stroke="#ffffff" stroke-width="1"/>
<text x="268" y="417.48" font-size="4.68" fill="#ffffff" textLength="19.5" lengthAdjust="spacingAndGlyphs" font-weight="bold" stroke="#ffffff" stroke-width="0.3">??????</text>
<line x1="170.8" y1="371.3" x2="170.8" y2="640.7" stroke="#00ffff" stroke-width="1" stroke-dasharray="11 1.6 1.2 1.8"/>
<polygon points="215.2,455.9 231,455.9 223.1,465.1" stroke="#ffffff" stroke-width="1" fill="none"/>
<line x1="223.1" y1="465" x2="223.1" y2="488" stroke="#ffffff" stroke-width="1"/>
<line x1="218.7" y1="465.8" x2="227.9" y2="465.8" stroke="#ffffff" stroke-width="1"/>
<rect x="220.7" y="470.3" width="5" height="2.8" stroke="#ffffff" stroke-width="0" fill="#ffffff"/>
<line x1="219.7" y1="470.3" x2="219.7" y2="473.1" stroke="#ffffff" stroke-width="1"/>
<line x1="225.7" y1="471.1" x2="227.9" y2="470.1" stroke="#ffffff" stroke-width="1"/>
<rect x="221.7" y="479.9" width="2.8" height="4" stroke="#ffffff" stroke-width="1" fill="none"/>
<polygon points="217.2,504.7 217.2,494.5 219.7,492.5 226.1,492.5 228.6,494.5 228.6,504.7 223.3,512.5 222.3,512.5" stroke="#ffffff" stroke-width="1" fill="none"/>
<line x1="217.2" y1="494.5" x2="228.6" y2="494.5" stroke="#ffffff" stroke-width="1"/>
<line x1="217.9" y1="499.1" x2="219.7" y2="499.1" stroke="#ffffff" stroke-width="1"/>
<rect x="215.1" y="487.1" width="3.2" height="2.4" stroke="#ffffff" stroke-width="0" fill="#ffffff"/>
<circle cx="222.5" cy="488.5" r="1.7" stroke="#ffffff" stroke-width="1" fill="none"/>
<line x1="218.3" y1="488.5" x2="220.7" y2="488.5" stroke="#ffffff" stroke-width="1"/>
<polyline points="229.5,458.4 232.6,458.4 232.6,489.3 227.4,489.3 227.4,493" stroke="#ffffff" stroke-width="1" fill="none"/>
<text transform="translate(237.18 466) rotate(-90)" font-size="4.4" fill="#ffffff" stroke="#ffffff" stroke-width="0.35" textLength="7.6" lengthAdjust="spacingAndGlyphs" font-weight="bold">???</text>
<circle cx="232.6" cy="473.8" r="1.2" stroke="#ffffff" stroke-width="1" fill="none"/>
<line x1="231.2" y1="471" x2="236.6" y2="471" stroke="#ffffff" stroke-width="1"/>
<rect x="234.2" y="470.4" width="2.4" height="2.4" stroke="#ffffff" stroke-width="0" fill="#ffffff"/>
<polygon points="248.6,455.9 264.4,455.9 256.5,465.1" stroke="#ffffff" stroke-width="1" fill="none"/>
<line x1="256.5" y1="465" x2="256.5" y2="488" stroke="#ffffff" stroke-width="1"/>
<line x1="252.1" y1="465.8" x2="261.3" y2="465.8" stroke="#ffffff" stroke-width="1"/>
<rect x="254.1" y="470.3" width="5" height="2.8" stroke="#ffffff" stroke-width="0" fill="#ffffff"/>
<line x1="253.1" y1="470.3" x2="253.1" y2="473.1" stroke="#ffffff" stroke-width="1"/>
<line x1="259.1" y1="471.1" x2="261.3" y2="470.1" stroke="#ffffff" stroke-width="1"/>
<rect x="255.1" y="479.9" width="2.8" height="4" stroke="#ffffff" stroke-width="1" fill="none"/>
<polygon points="250.6,504.7 250.6,494.5 253.1,492.5 259.5,492.5 262,494.5 262,504.7 256.7,512.5 255.7,512.5" stroke="#ffffff" stroke-width="1" fill="none"/>
<line x1="250.6" y1="494.5" x2="262" y2="494.5" stroke="#ffffff" stroke-width="1"/>
<line x1="251.3" y1="499.1" x2="253.1" y2="499.1" stroke="#ffffff" stroke-width="1"/>
<rect x="248.5" y="487.1" width="3.2" height="2.4" stroke="#ffffff" stroke-width="0" fill="#ffffff"/>
<circle cx="255.9" cy="488.5" r="1.7" stroke="#ffffff" stroke-width="1" fill="none"/>
<line x1="251.7" y1="488.5" x2="254.1" y2="488.5" stroke="#ffffff" stroke-width="1"/>
<polyline points="262.9,458.4 266,458.4 266,489.3 260.8,489.3 260.8,493" stroke="#ffffff" stroke-width="1" fill="none"/>
<text transform="translate(270.58 466) rotate(-90)" font-size="4.4" fill="#ffffff" stroke="#ffffff" stroke-width="0.35" textLength="7.6" lengthAdjust="spacingAndGlyphs" font-weight="bold">???</text>
<circle cx="266" cy="473.8" r="1.2" stroke="#ffffff" stroke-width="1" fill="none"/>
<line x1="264.6" y1="471" x2="270" y2="471" stroke="#ffffff" stroke-width="1"/>
<rect x="267.6" y="470.4" width="2.4" height="2.4" stroke="#ffffff" stroke-width="0" fill="#ffffff"/>
<line x1="171" y1="509.5" x2="217.5" y2="509.5" stroke="#00ffff" stroke-width="1"/>
<line x1="228" y1="509.5" x2="251" y2="509.5" stroke="#ffffff" stroke-width="1.4"/>
<line x1="262" y1="509.5" x2="268" y2="509.5" stroke="#ffffff" stroke-width="1.4"/>
<line x1="268" y1="509.5" x2="302.2" y2="509.5" stroke="#00ff00" stroke-width="1"/>
<rect x="230" y="508.3" width="2" height="2.4" stroke="#ffffff" stroke-width="0" fill="#ffffff"/>
<rect x="238.8" y="508.3" width="2" height="2.4" stroke="#ffffff" stroke-width="0" fill="#ffffff"/>
<rect x="245.6" y="508.3" width="2" height="2.4" stroke="#ffffff" stroke-width="0" fill="#ffffff"/>
<rect x="262.8" y="508.3" width="2" height="2.4" stroke="#ffffff" stroke-width="0" fill="#ffffff"/>
<rect x="268" y="508.3" width="2" height="2.4" stroke="#ffffff" stroke-width="0" fill="#ffffff"/>
<rect x="176" y="504.6" width="32.6" height="8.4" stroke="#ffffff" stroke-width="1" fill="none"/>
<text x="180" y="507.56" font-size="3.78" fill="#00ffff" textLength="8" lengthAdjust="spacingAndGlyphs" font-weight="bold" stroke="#00ffff" stroke-width="0.3">???</text>
<circle cx="181" cy="509.5" r="1" stroke="#00ffff" stroke-width="1" fill="none"/>
<circle cx="183.4" cy="509.5" r="1" stroke="#00ffff" stroke-width="1" fill="none"/>
<circle cx="190.5" cy="509.5" r="1" stroke="#00ffff" stroke-width="1" fill="none"/>
<circle cx="192.9" cy="509.5" r="1" stroke="#00ffff" stroke-width="1" fill="none"/>
<circle cx="200" cy="509.5" r="1" stroke="#00ffff" stroke-width="1" fill="none"/>
<circle cx="202.4" cy="509.5" r="1" stroke="#00ffff" stroke-width="1" fill="none"/>
<line x1="201.4" y1="506.9" x2="201.4" y2="511.1" stroke="#00ffff" stroke-width="1"/>
<line x1="200" y1="506.9" x2="202.8" y2="506.9" stroke="#00ffff" stroke-width="1"/>
<line x1="231" y1="511" x2="231" y2="526" stroke="#00ffff" stroke-width="1"/>
<polygon points="229.9,520.6 232.1,520.6 231,522.8" stroke="#00ffff" stroke-width="1" fill="#00ffff"/>
<line x1="235" y1="511" x2="235" y2="526" stroke="#00ffff" stroke-width="1"/>
<polygon points="233.9,520.6 236.1,520.6 235,522.8" stroke="#00ffff" stroke-width="1" fill="#00ffff"/>
<line x1="239.8" y1="511" x2="239.8" y2="526" stroke="#00ffff" stroke-width="1"/>
<polygon points="238.7,520.6 240.9,520.6 239.8,522.8" stroke="#00ffff" stroke-width="1" fill="#00ffff"/>
<line x1="246.6" y1="511" x2="246.6" y2="526" stroke="#00ffff" stroke-width="1"/>
<polygon points="245.5,520.6 247.7,520.6 246.6,522.8" stroke="#00ffff" stroke-width="1" fill="#00ffff"/>
<line x1="259.9" y1="511" x2="259.9" y2="526" stroke="#00ffff" stroke-width="1"/>
<polygon points="258.8,520.6 261,520.6 259.9,522.8" stroke="#00ffff" stroke-width="1" fill="#00ffff"/>
<line x1="263.8" y1="511" x2="263.8" y2="526" stroke="#00ffff" stroke-width="1"/>
<polygon points="262.7,520.6 264.9,520.6 263.8,522.8" stroke="#00ffff" stroke-width="1" fill="#00ffff"/>
<text transform="translate(234.18 524) rotate(-90)" font-size="4.4" fill="#00ffff" stroke="#00ffff" stroke-width="0.35" textLength="10.5" lengthAdjust="spacingAndGlyphs" font-weight="bold">????</text>
<text transform="translate(262.98 524) rotate(-90)" font-size="4.4" fill="#00ffff" stroke="#00ffff" stroke-width="0.35" textLength="10.5" lengthAdjust="spacingAndGlyphs" font-weight="bold">????</text>
<polyline points="174.5,509.5 174.5,516.9 194,516.9 194,526.2 266.5,526.2" stroke="#00ffff" stroke-width="1" fill="none"/>
<circle cx="180.5" cy="516.9" r="1" stroke="#00ffff" stroke-width="1" fill="none"/>
<circle cx="183" cy="516.9" r="1" stroke="#00ffff" stroke-width="1" fill="none"/>
<polygon points="190.5,521.6 194,520 194,523.2" stroke="#00ffff" stroke-width="1" fill="#00ffff"/>
<text x="200.3" y="523.86" font-size="4.32" fill="#00ffff" textLength="13.2" lengthAdjust="spacingAndGlyphs" font-weight="bold" stroke="#00ffff" stroke-width="0.3">????</text>
<polyline points="171,535.4 302.2,535.4 302.2,509.5" stroke="#00ffff" stroke-width="1" fill="none"/>
<rect x="173" y="530.9" width="32.7" height="7.9" stroke="#ffffff" stroke-width="1" fill="none"/>
<rect x="173" y="530.9" width="32.7" height="7.9" stroke="#ffffff" stroke-width="1" fill="none"/>
<text x="177" y="533.86" font-size="3.78" fill="#00ffff" textLength="8" lengthAdjust="spacingAndGlyphs" font-weight="bold" stroke="#00ffff" stroke-width="0.3">???</text>
<circle cx="178" cy="535.4" r="1" stroke="#00ffff" stroke-width="1" fill="none"/>
<circle cx="180.4" cy="535.4" r="1" stroke="#00ffff" stroke-width="1" fill="none"/>
<circle cx="187.5" cy="535.4" r="1" stroke="#00ffff" stroke-width="1" fill="none"/>
<circle cx="189.9" cy="535.4" r="1" stroke="#00ffff" stroke-width="1" fill="none"/>
<circle cx="197" cy="535.4" r="1" stroke="#00ffff" stroke-width="1" fill="none"/>
<circle cx="199.4" cy="535.4" r="1" stroke="#00ffff" stroke-width="1" fill="none"/>
<line x1="198.5" y1="532.8" x2="198.5" y2="537" stroke="#00ffff" stroke-width="1"/>
<line x1="197.1" y1="532.8" x2="199.9" y2="532.8" stroke="#00ffff" stroke-width="1"/>
<text x="175.1" y="529.16" font-size="4.32" fill="#ffffff" textLength="9.2" lengthAdjust="spacingAndGlyphs" stroke="#ffffff" stroke-width="0.3">???</text>
<text x="189.2" y="529.09" font-size="4.14" fill="#00ffff" textLength="9.7" lengthAdjust="spacingAndGlyphs" font-weight="bold" stroke="#00ffff" stroke-width="0.3">DWD</text>
<text x="227.1" y="533.76" font-size="4.32" fill="#00ffff" textLength="10.8" lengthAdjust="spacingAndGlyphs" font-weight="bold" stroke="#00ffff" stroke-width="0.3">????</text>
<text x="276.8" y="507.96" font-size="4.32" fill="#ffffff" textLength="12.7" lengthAdjust="spacingAndGlyphs" font-weight="bold" stroke="#ffffff" stroke-width="0.3">????</text>
<line x1="212" y1="535.4" x2="212" y2="534" stroke="#00ffff" stroke-width="1"/>
<line x1="238" y1="535.4" x2="238" y2="534" stroke="#00ffff" stroke-width="1"/>
<line x1="262" y1="535.4" x2="262" y2="534" stroke="#00ffff" stroke-width="1"/>
<line x1="285" y1="535.4" x2="285" y2="534" stroke="#00ffff" stroke-width="1"/>
<text x="187.5" y="460.02" font-size="4.5" fill="#ffffff" textLength="6.5" lengthAdjust="spacingAndGlyphs" stroke="#ffffff" stroke-width="0.3">??</text>
<line x1="183.3" y1="462.2" x2="203.8" y2="462.2" stroke="#ffffff" stroke-width="1"/>
<line x1="203.8" y1="462.2" x2="221.3" y2="471.1" stroke="#ffffff" stroke-width="1"/>
<text x="184" y="466.52" font-size="4.5" fill="#ffffff" textLength="16" lengthAdjust="spacingAndGlyphs" font-weight="bold" stroke="#ffffff" stroke-width="0.3">?????</text>
<line x1="203.4" y1="463.2" x2="204.6" y2="465.4" stroke="#ffffff" stroke-width="1"/>
<text x="194.6" y="471.12" font-size="4.5" fill="#ffffff" textLength="6.2" lengthAdjust="spacingAndGlyphs" stroke="#ffffff" stroke-width="0.3">??</text>
<line x1="194" y1="473.2" x2="205.7" y2="473.2" stroke="#ffffff" stroke-width="1"/>
<line x1="205.7" y1="473.2" x2="221.3" y2="479.9" stroke="#ffffff" stroke-width="1"/>
<text x="184.3" y="479.02" font-size="4.5" fill="#ffffff" textLength="12.7" lengthAdjust="spacingAndGlyphs" stroke="#ffffff" stroke-width="0.3">????</text>
<line x1="181.4" y1="480.4" x2="202.8" y2="480.4" stroke="#ffffff" stroke-width="1"/>
<line x1="202.8" y1="480.4" x2="219.4" y2="488.6" stroke="#ffffff" stroke-width="1"/>
<text x="181.4" y="485.02" font-size="4.5" fill="#ffffff" textLength="18.6" lengthAdjust="spacingAndGlyphs" font-weight="bold" stroke="#ffffff" stroke-width="0.3">??????</text>
<text x="189.6" y="490.22" font-size="4.5" fill="#ffffff" textLength="6.4" lengthAdjust="spacingAndGlyphs" stroke="#ffffff" stroke-width="0.3">??</text>
<line x1="180.4" y1="492.5" x2="203.8" y2="492.5" stroke="#ffffff" stroke-width="1"/>
<line x1="203.8" y1="492.5" x2="217.4" y2="498.4" stroke="#ffffff" stroke-width="1"/>
<text x="181" y="497.02" font-size="4.5" fill="#ffffff" textLength="22" lengthAdjust="spacingAndGlyphs" font-weight="bold" stroke="#ffffff" stroke-width="0.3">???????</text>
<text x="179.4" y="502.36" font-size="4.32" fill="#ffffff" textLength="9.8" lengthAdjust="spacingAndGlyphs" stroke="#ffffff" stroke-width="0.3">???</text>
<text x="193.2" y="502.29" font-size="4.14" fill="#00ffff" textLength="9.6" lengthAdjust="spacingAndGlyphs" font-weight="bold" stroke="#00ffff" stroke-width="0.3">DWD</text>
<text x="233.6" y="492.56" font-size="4.32" fill="#ffffff" textLength="6.8" lengthAdjust="spacingAndGlyphs" stroke="#ffffff" stroke-width="0.3">??</text>
<rect x="233" y="494" width="10.9" height="3.5" stroke="#00ffff" stroke-width="0" fill="#00ffff"/>
<text x="233.8" y="497.16" font-size="3.78" fill="#004040" textLength="9.6" lengthAdjust="spacingAndGlyphs" font-weight="bold" stroke="#004040" stroke-width="0.3">???</text>
<line x1="243.7" y1="498" x2="230" y2="508" stroke="#ffffff" stroke-width="1"/>
<text x="274.5" y="464.22" font-size="4.5" fill="#ffffff" textLength="12.1" lengthAdjust="spacingAndGlyphs" stroke="#ffffff" stroke-width="0.3">????</text>
<text x="292.4" y="464.56" font-size="4.32" fill="#ffffff" textLength="8.8" lengthAdjust="spacingAndGlyphs" font-weight="bold" stroke="#ffffff" stroke-width="0.3">???</text>
<line x1="273.9" y1="466.2" x2="301.2" y2="466.2" stroke="#ffffff" stroke-width="1"/>
<line x1="273.9" y1="466.2" x2="269" y2="468.4" stroke="#ffffff" stroke-width="1"/>
<text x="275" y="470.29" font-size="4.14" fill="#ffffff" textLength="18" lengthAdjust="spacingAndGlyphs" font-weight="bold" stroke="#ffffff" stroke-width="0.3">??????</text>
<text x="276.8" y="492.82" font-size="4.5" fill="#ffffff" textLength="11.7" lengthAdjust="spacingAndGlyphs" stroke="#ffffff" stroke-width="0.3">????</text>
<line x1="272" y1="495.5" x2="294.4" y2="495.5" stroke="#ffffff" stroke-width="1"/>
<line x1="272" y1="495.5" x2="268.6" y2="509.1" stroke="#ffffff" stroke-width="1"/>
<text x="274" y="500.42" font-size="4.5" fill="#ffffff" textLength="19" lengthAdjust="spacingAndGlyphs" font-weight="bold" stroke="#ffffff" stroke-width="0.3">??????</text>
<polygon points="215.2,544 231,544 223.1,553.2" stroke="#ffffff" stroke-width="1" fill="none"/>
<line x1="223.1" y1="553.1" x2="223.1" y2="576.1" stroke="#ffffff" stroke-width="1"/>
<line x1="218.7" y1="553.9" x2="227.9" y2="553.9" stroke="#ffffff" stroke-width="1"/>
<rect x="220.7" y="558.4" width="5" height="2.8" stroke="#ffffff" stroke-width="0" fill="#ffffff"/>
<line x1="219.7" y1="558.4" x2="219.7" y2="561.2" stroke="#ffffff" stroke-width="1"/>
<line x1="225.7" y1="559.2" x2="227.9" y2="558.2" stroke="#ffffff" stroke-width="1"/>
<rect x="221.7" y="568" width="2.8" height="4" stroke="#ffffff" stroke-width="1" fill="none"/>
<polygon points="217.2,592.8 217.2,582.6 219.7,580.6 226.1,580.6 228.6,582.6 228.6,592.8 223.3,600.6 222.3,600.6" stroke="#ffffff" stroke-width="1" fill="none"/>
<line x1="217.2" y1="582.6" x2="228.6" y2="582.6" stroke="#ffffff" stroke-width="1"/>
<line x1="217.9" y1="587.2" x2="219.7" y2="587.2" stroke="#ffffff" stroke-width="1"/>
<rect x="215.1" y="575.2" width="3.2" height="2.4" stroke="#ffffff" stroke-width="0" fill="#ffffff"/>
<circle cx="222.5" cy="576.6" r="1.7" stroke="#ffffff" stroke-width="1" fill="none"/>
<line x1="218.3" y1="576.6" x2="220.7" y2="576.6" stroke="#ffffff" stroke-width="1"/>
<polyline points="229.5,546.5 232.6,546.5 232.6,577.4 227.4,577.4 227.4,581.1" stroke="#ffffff" stroke-width="1" fill="none"/>
<text transform="translate(237.18 554.1) rotate(-90)" font-size="4.4" fill="#ffffff" stroke="#ffffff" stroke-width="0.35" textLength="7.6" lengthAdjust="spacingAndGlyphs" font-weight="bold">???</text>
<circle cx="232.6" cy="561.9" r="1.2" stroke="#ffffff" stroke-width="1" fill="none"/>
<line x1="231.2" y1="559.1" x2="236.6" y2="559.1" stroke="#ffffff" stroke-width="1"/>
<rect x="234.2" y="558.5" width="2.4" height="2.4" stroke="#ffffff" stroke-width="0" fill="#ffffff"/>
<polygon points="248.6,544 264.4,544 256.5,553.2" stroke="#ffffff" stroke-width="1" fill="none"/>
<line x1="256.5" y1="553.1" x2="256.5" y2="576.1" stroke="#ffffff" stroke-width="1"/>
<line x1="252.1" y1="553.9" x2="261.3" y2="553.9" stroke="#ffffff" stroke-width="1"/>
<rect x="254.1" y="558.4" width="5" height="2.8" stroke="#ffffff" stroke-width="0" fill="#ffffff"/>
<line x1="253.1" y1="558.4" x2="253.1" y2="561.2" stroke="#ffffff" stroke-width="1"/>
<line x1="259.1" y1="559.2" x2="261.3" y2="558.2" stroke="#ffffff" stroke-width="1"/>
<rect x="255.1" y="568" width="2.8" height="4" stroke="#ffffff" stroke-width="1" fill="none"/>
<polygon points="250.6,592.8 250.6,582.6 253.1,580.6 259.5,580.6 262,582.6 262,592.8 256.7,600.6 255.7,600.6" stroke="#ffffff" stroke-width="1" fill="none"/>
<line x1="250.6" y1="582.6" x2="262" y2="582.6" stroke="#ffffff" stroke-width="1"/>
<line x1="251.3" y1="587.2" x2="253.1" y2="587.2" stroke="#ffffff" stroke-width="1"/>
<rect x="248.5" y="575.2" width="3.2" height="2.4" stroke="#ffffff" stroke-width="0" fill="#ffffff"/>
<circle cx="255.9" cy="576.6" r="1.7" stroke="#ffffff" stroke-width="1" fill="none"/>
<line x1="251.7" y1="576.6" x2="254.1" y2="576.6" stroke="#ffffff" stroke-width="1"/>
<polyline points="262.9,546.5 266,546.5 266,577.4 260.8,577.4 260.8,581.1" stroke="#ffffff" stroke-width="1" fill="none"/>
<text transform="translate(270.58 554.1) rotate(-90)" font-size="4.4" fill="#ffffff" stroke="#ffffff" stroke-width="0.35" textLength="7.6" lengthAdjust="spacingAndGlyphs" font-weight="bold">???</text>
<circle cx="266" cy="561.9" r="1.2" stroke="#ffffff" stroke-width="1" fill="none"/>
<line x1="264.6" y1="559.1" x2="270" y2="559.1" stroke="#ffffff" stroke-width="1"/>
<rect x="267.6" y="558.5" width="2.4" height="2.4" stroke="#ffffff" stroke-width="0" fill="#ffffff"/>
<line x1="171" y1="597.6" x2="217.5" y2="597.6" stroke="#00ffff" stroke-width="1"/>
<line x1="228" y1="597.6" x2="251" y2="597.6" stroke="#ffffff" stroke-width="1.4"/>
<line x1="262" y1="597.6" x2="268" y2="597.6" stroke="#ffffff" stroke-width="1.4"/>
<line x1="268" y1="597.6" x2="309.6" y2="597.6" stroke="#00ff00" stroke-width="1"/>
<rect x="231" y="596.4" width="2" height="2.4" stroke="#ffffff" stroke-width="0" fill="#ffffff"/>
<rect x="235.9" y="596.4" width="2" height="2.4" stroke="#ffffff" stroke-width="0" fill="#ffffff"/>
<rect x="240.8" y="596.4" width="2" height="2.4" stroke="#ffffff" stroke-width="0" fill="#ffffff"/>
<rect x="245.6" y="596.4" width="2" height="2.4" stroke="#ffffff" stroke-width="0" fill="#ffffff"/>
<rect x="261.2" y="596.4" width="2" height="2.4" stroke="#ffffff" stroke-width="0" fill="#ffffff"/>
<rect x="264.5" y="596.4" width="2" height="2.4" stroke="#ffffff" stroke-width="0" fill="#ffffff"/>
<rect x="271.5" y="596.4" width="2" height="2.4" stroke="#ffffff" stroke-width="0" fill="#ffffff"/>
<rect x="176" y="592.3" width="32.6" height="8.3" stroke="#ffffff" stroke-width="1" fill="none"/>
<text x="180" y="595.26" font-size="3.78" fill="#00ffff" textLength="8" lengthAdjust="spacingAndGlyphs" font-weight="bold" stroke="#00ffff" stroke-width="0.3">???</text>
<circle cx="181" cy="597.6" r="1" stroke="#00ffff" stroke-width="1" fill="none"/>
<circle cx="183.4" cy="597.6" r="1" stroke="#00ffff" stroke-width="1" fill="none"/>
<circle cx="190.5" cy="597.6" r="1" stroke="#00ffff" stroke-width="1" fill="none"/>
<circle cx="192.9" cy="597.6" r="1" stroke="#00ffff" stroke-width="1" fill="none"/>
<circle cx="200" cy="597.6" r="1" stroke="#00ffff" stroke-width="1" fill="none"/>
<circle cx="202.4" cy="597.6" r="1" stroke="#00ffff" stroke-width="1" fill="none"/>
<line x1="201.4" y1="595" x2="201.4" y2="599.2" stroke="#00ffff" stroke-width="1"/>
<line x1="200" y1="595" x2="202.8" y2="595" stroke="#00ffff" stroke-width="1"/>
<line x1="219.4" y1="599" x2="219.4" y2="614.2" stroke="#00ffff" stroke-width="1"/>
<polygon points="218.3,608.74 220.5,608.74 219.4,610.94" stroke="#00ffff" stroke-width="1" fill="#00ffff"/>
<line x1="223.3" y1="599" x2="223.3" y2="614.2" stroke="#00ffff" stroke-width="1"/>
<polygon points="222.2,608.74 224.4,608.74 223.3,610.94" stroke="#00ffff" stroke-width="1" fill="#00ffff"/>
<line x1="232" y1="599" x2="232" y2="614.2" stroke="#00ffff" stroke-width="1"/>
<polygon points="230.9,608.74 233.1,608.74 232,610.94" stroke="#00ffff" stroke-width="1" fill="#00ffff"/>
<line x1="236.9" y1="599" x2="236.9" y2="614.2" stroke="#00ffff" stroke-width="1"/>
<polygon points="235.8,608.74 238,608.74 236.9,610.94" stroke="#00ffff" stroke-width="1" fill="#00ffff"/>
<line x1="241.8" y1="599" x2="241.8" y2="614.2" stroke="#00ffff" stroke-width="1"/>
<polygon points="240.7,608.74 242.9,608.74 241.8,610.94" stroke="#00ffff" stroke-width="1" fill="#00ffff"/>
<line x1="246.6" y1="599" x2="246.6" y2="614.2" stroke="#00ffff" stroke-width="1"/>
<polygon points="245.5,608.74 247.7,608.74 246.6,610.94" stroke="#00ffff" stroke-width="1" fill="#00ffff"/>
<line x1="257.3" y1="599" x2="257.3" y2="614.2" stroke="#00ffff" stroke-width="1"/>
<polygon points="256.2,608.74 258.4,608.74 257.3,610.94" stroke="#00ffff" stroke-width="1" fill="#00ffff"/>
<line x1="262.2" y1="599" x2="262.2" y2="614.2" stroke="#00ffff" stroke-width="1"/>
<polygon points="261.1,608.74 263.3,608.74 262.2,610.94" stroke="#00ffff" stroke-width="1" fill="#00ffff"/>
<text transform="translate(222.38 612.2) rotate(-90)" font-size="4.4" fill="#00ffff" stroke="#00ffff" stroke-width="0.35" textLength="10.7" lengthAdjust="spacingAndGlyphs" font-weight="bold">????</text>
<text transform="translate(235.38 612.2) rotate(-90)" font-size="4.4" fill="#00ffff" stroke="#00ffff" stroke-width="0.35" textLength="10.7" lengthAdjust="spacingAndGlyphs" font-weight="bold">????</text>
<text transform="translate(260.58 612.2) rotate(-90)" font-size="4.4" fill="#00ffff" stroke="#00ffff" stroke-width="0.35" textLength="10.7" lengthAdjust="spacingAndGlyphs" font-weight="bold">????</text>
<line x1="272.5" y1="597.6" x2="272.5" y2="614.4" stroke="#00ffff" stroke-width="1" stroke-dasharray="3 1.4"/>
<polyline points="174.5,597.6 174.5,604 194,604 194,614.4 272.5,614.4" stroke="#00ffff" stroke-width="1" fill="none"/>
<circle cx="180.5" cy="604" r="1" stroke="#00ffff" stroke-width="1" fill="none"/>
<circle cx="183" cy="604" r="1" stroke="#00ffff" stroke-width="1" fill="none"/>
<polygon points="190.5,609.4 194,607.8 194,611" stroke="#00ffff" stroke-width="1" fill="#00ffff"/>
<text x="199.9" y="611.46" font-size="4.32" fill="#00ffff" textLength="13.6" lengthAdjust="spacingAndGlyphs" font-weight="bold" stroke="#00ffff" stroke-width="0.3">?????</text>
<polyline points="171,624.1 309.6,624.1 309.6,597.6" stroke="#00ffff" stroke-width="1" fill="none"/>
<rect x="173" y="618.3" width="32.7" height="8.2" stroke="#ffffff" stroke-width="1" fill="none"/>
<text x="177" y="621.26" font-size="3.78" fill="#00ffff" textLength="8" lengthAdjust="spacingAndGlyphs" font-weight="bold" stroke="#00ffff" stroke-width="0.3">???</text>
<circle cx="178" cy="624.1" r="1" stroke="#00ffff" stroke-width="1" fill="none"/>
<circle cx="180.4" cy="624.1" r="1" stroke="#00ffff" stroke-width="1" fill="none"/>
<circle cx="187.5" cy="624.1" r="1" stroke="#00ffff" stroke-width="1" fill="none"/>
<circle cx="189.9" cy="624.1" r="1" stroke="#00ffff" stroke-width="1" fill="none"/>
<circle cx="197" cy="624.1" r="1" stroke="#00ffff" stroke-width="1" fill="none"/>
<circle cx="199.4" cy="624.1" r="1" stroke="#00ffff" stroke-width="1" fill="none"/>
<line x1="198.5" y1="621.5" x2="198.5" y2="625.7" stroke="#00ffff" stroke-width="1"/>
<line x1="197.1" y1="621.5" x2="199.9" y2="621.5" stroke="#00ffff" stroke-width="1"/>
<text x="175.5" y="617.26" font-size="4.32" fill="#ffffff" textLength="8.8" lengthAdjust="spacingAndGlyphs" stroke="#ffffff" stroke-width="0.3">???</text>
<text x="189.7" y="617.19" font-size="4.14" fill="#00ffff" textLength="9.2" lengthAdjust="spacingAndGlyphs" font-weight="bold" stroke="#00ffff" stroke-width="0.3">DWD</text>
<text x="227" y="622.16" font-size="4.32" fill="#00ffff" textLength="11" lengthAdjust="spacingAndGlyphs" font-weight="bold" stroke="#00ffff" stroke-width="0.3">????</text>
<text x="287.2" y="595.56" font-size="4.32" fill="#00ff00" textLength="11.6" lengthAdjust="spacingAndGlyphs" font-weight="bold" stroke="#00ff00" stroke-width="0.3">????</text>
<line x1="212" y1="624.1" x2="212" y2="622.7" stroke="#00ffff" stroke-width="1"/>
<line x1="238" y1="624.1" x2="238" y2="622.7" stroke="#00ffff" stroke-width="1"/>
<line x1="262" y1="624.1" x2="262" y2="622.7" stroke="#00ffff" stroke-width="1"/>
<line x1="285" y1="624.1" x2="285" y2="622.7" stroke="#00ffff" stroke-width="1"/>
<line x1="300" y1="624.1" x2="300" y2="622.7" stroke="#00ffff" stroke-width="1"/>
<text transform="translate(167.86 632.3) rotate(-90)" font-size="4.6" fill="#00ffff" stroke="#00ffff" stroke-width="0.35" textLength="9.8" lengthAdjust="spacingAndGlyphs" font-weight="bold">???</text>
<text x="187.5" y="548.12" font-size="4.5" fill="#ffffff" textLength="6.5" lengthAdjust="spacingAndGlyphs" stroke="#ffffff" stroke-width="0.3">??</text>
<line x1="183.3" y1="550.3" x2="203.8" y2="550.3" stroke="#ffffff" stroke-width="1"/>
<line x1="203.8" y1="550.3" x2="221.3" y2="559.2" stroke="#ffffff" stroke-width="1"/>
<text x="184" y="554.62" font-size="4.5" fill="#ffffff" textLength="16" lengthAdjust="spacingAndGlyphs" font-weight="bold" stroke="#ffffff" stroke-width="0.3">?????</text>
<line x1="203.4" y1="551.3" x2="204.6" y2="553.5" stroke="#ffffff" stroke-width="1"/>
<text x="194.6" y="559.22" font-size="4.5" fill="#ffffff" textLength="6.2" lengthAdjust="spacingAndGlyphs" stroke="#ffffff" stroke-width="0.3">??</text>
<line x1="194" y1="561.3" x2="205.7" y2="561.3" stroke="#ffffff" stroke-width="1"/>
<line x1="205.7" y1="561.3" x2="221.3" y2="568" stroke="#ffffff" stroke-width="1"/>
<text x="184.3" y="567.12" font-size="4.5" fill="#ffffff" textLength="12.7" lengthAdjust="spacingAndGlyphs" stroke="#ffffff" stroke-width="0.3">????</text>
<line x1="181.4" y1="568.5" x2="202.8" y2="568.5" stroke="#ffffff" stroke-width="1"/>
<line x1="202.8" y1="568.5" x2="219.4" y2="576.7" stroke="#ffffff" stroke-width="1"/>
<text x="181.4" y="573.12" font-size="4.5" fill="#ffffff" textLength="18.6" lengthAdjust="spacingAndGlyphs" font-weight="bold" stroke="#ffffff" stroke-width="0.3">??????</text>
<text x="189.6" y="578.32" font-size="4.5" fill="#ffffff" textLength="6.4" lengthAdjust="spacingAndGlyphs" stroke="#ffffff" stroke-width="0.3">??</text>
<line x1="180.4" y1="580.6" x2="203.8" y2="580.6" stroke="#ffffff" stroke-width="1"/>
<line x1="203.8" y1="580.6" x2="217.4" y2="586.5" stroke="#ffffff" stroke-width="1"/>
<text x="181" y="585.12" font-size="4.5" fill="#ffffff" textLength="22" lengthAdjust="spacingAndGlyphs" font-weight="bold" stroke="#ffffff" stroke-width="0.3">???????</text>
<text x="179.4" y="590.46" font-size="4.32" fill="#ffffff" textLength="9.8" lengthAdjust="spacingAndGlyphs" stroke="#ffffff" stroke-width="0.3">???</text>
<text x="193.2" y="590.39" font-size="4.14" fill="#00ffff" textLength="9.6" lengthAdjust="spacingAndGlyphs" font-weight="bold" stroke="#00ffff" stroke-width="0.3">DWD</text>
<text x="233.6" y="579.86" font-size="4.32" fill="#ffffff" textLength="6.8" lengthAdjust="spacingAndGlyphs" stroke="#ffffff" stroke-width="0.3">??</text>
<rect x="233" y="581.7" width="10.9" height="3.5" stroke="#00ffff" stroke-width="0" fill="#00ffff"/>
<text x="233.8" y="584.86" font-size="3.78" fill="#004040" textLength="9.6" lengthAdjust="spacingAndGlyphs" font-weight="bold" stroke="#004040" stroke-width="0.3">???</text>
<line x1="243.7" y1="586.1" x2="230" y2="596.1" stroke="#ffffff" stroke-width="1"/>
<text x="275.3" y="550.02" font-size="4.5" fill="#ffffff" textLength="13.2" lengthAdjust="spacingAndGlyphs" stroke="#ffffff" stroke-width="0.3">????</text>
<text x="293.4" y="550.36" font-size="4.32" fill="#ffffff" textLength="9.7" lengthAdjust="spacingAndGlyphs" font-weight="bold" stroke="#ffffff" stroke-width="0.3">???</text>
<line x1="275.9" y1="551.8" x2="303.1" y2="551.8" stroke="#ffffff" stroke-width="1"/>
<line x1="275.9" y1="551.8" x2="269" y2="556.4" stroke="#ffffff" stroke-width="1"/>
<text x="277" y="555.89" font-size="4.14" fill="#ffffff" textLength="18" lengthAdjust="spacingAndGlyphs" font-weight="bold" stroke="#ffffff" stroke-width="0.3">??????</text>
<text x="274.5" y="578.42" font-size="4.5" fill="#ffffff" textLength="12.1" lengthAdjust="spacingAndGlyphs" stroke="#ffffff" stroke-width="0.3">?? ??</text>
<line x1="269" y1="579.7" x2="292.4" y2="579.7" stroke="#ffffff" stroke-width="1"/>
<line x1="269" y1="579.7" x2="264.2" y2="594.3" stroke="#ffffff" stroke-width="1"/>
<text x="272" y="584.62" font-size="4.5" fill="#ffffff" textLength="19" lengthAdjust="spacingAndGlyphs" font-weight="bold" stroke="#ffffff" stroke-width="0.3">??????</text>
<text transform="translate(299.26 479.9) rotate(-90)" font-size="4.6" fill="#00ff00" stroke="#00ff00" stroke-width="0.35" textLength="10.7" lengthAdjust="spacingAndGlyphs" font-weight="bold">????</text>
<text transform="translate(307.06 479.9) rotate(-90)" font-size="4.6" fill="#00ff00" stroke="#00ff00" stroke-width="0.35" textLength="10.7" lengthAdjust="spacingAndGlyphs" font-weight="bold">????</text>
<line x1="302.2" y1="491.5" x2="348.7" y2="491.5" stroke="#00ff00" stroke-width="2"/>
<polygon points="314.5,493 314.5,489.6 316.4,489.6 316.4,486.8 318.2,486.8 318.2,489.6 320.4,489.6 320.4,493" stroke="#00ff00" stroke-width="1" fill="#00ff00"/>
<text x="323" y="489.22" font-size="4.5" fill="#00ff00" textLength="19.3" lengthAdjust="spacingAndGlyphs" font-weight="bold" stroke="#00ff00" stroke-width="0.3">??????</text>
<text x="328.6" y="496.96" font-size="4.32" fill="#00ff00" textLength="9.6" lengthAdjust="spacingAndGlyphs" font-weight="bold" stroke="#00ff00" stroke-width="0.3">???</text>
<line x1="309.6" y1="579.4" x2="348.7" y2="579.4" stroke="#00ff00" stroke-width="1.1"/>
<circle cx="315.2" cy="579.4" r="1.3" stroke="#00ff00" stroke-width="1" fill="none"/>
<circle cx="318.2" cy="579.4" r="1.3" stroke="#00ff00" stroke-width="1" fill="none"/>
<polygon points="315,577.4 316.7,574.8 318.4,577.4" stroke="#00ff00" stroke-width="1" fill="#00ff00"/>
<text x="323" y="577.02" font-size="4.5" fill="#00ff00" textLength="19" lengthAdjust="spacingAndGlyphs" font-weight="bold" stroke="#00ff00" stroke-width="0.3">??????</text>
<text x="328.6" y="584.56" font-size="4.32" fill="#00ff00" textLength="9.6" lengthAdjust="spacingAndGlyphs" font-weight="bold" stroke="#00ff00" stroke-width="0.3">???</text>
</g>
<g transform="translate(422.3 0)">
<text x="231" y="165.36" font-size="6" fill="#ffffff" textLength="15.5" lengthAdjust="spacingAndGlyphs" stroke="#ffffff" stroke-width="0.22">? ? ?</text>
<line x1="260.7" y1="174.4" x2="260.7" y2="219.5" stroke="#ffffff" stroke-width="1"/>
<line x1="259" y1="178.5" x2="260.7" y2="178.5" stroke="#ffffff" stroke-width="1"/>
<line x1="259" y1="185" x2="260.7" y2="185" stroke="#ffffff" stroke-width="1"/>
<line x1="259" y1="210.5" x2="260.7" y2="210.5" stroke="#ffffff" stroke-width="1"/>
<line x1="259" y1="216" x2="260.7" y2="216" stroke="#ffffff" stroke-width="1"/>
<line x1="258.5" y1="175" x2="263" y2="175" stroke="#ffffff" stroke-width="1"/>
<line x1="260.7" y1="190" x2="310" y2="190" stroke="#00ff00" stroke-width="2"/>
<line x1="260.7" y1="197" x2="303" y2="197" stroke="#00ff00" stroke-width="2"/>
<line x1="260.7" y1="205" x2="295" y2="205" stroke="#00ff00" stroke-width="2"/>
<line x1="309.5" y1="189" x2="309.5" y2="597.6" stroke="#00ff00" stroke-width="1"/>
<line x1="302.5" y1="196" x2="302.5" y2="509.5" stroke="#00ff00" stroke-width="1"/>
<line x1="294.5" y1="204" x2="294.5" y2="429.6" stroke="#00ff00" stroke-width="1"/>
<text x="270" y="187.82" font-size="4.5" fill="#00ff00" textLength="12" lengthAdjust="spacingAndGlyphs" font-weight="bold" stroke="#00ff00" stroke-width="0.3">????</text>
<text x="270" y="195.42" font-size="4.5" fill="#00ff00" textLength="12" lengthAdjust="spacingAndGlyphs" font-weight="bold" stroke="#00ff00" stroke-width="0.3">????</text>
<text x="270" y="202.82" font-size="4.5" fill="#00ff00" textLength="12" lengthAdjust="spacingAndGlyphs" font-weight="bold" stroke="#00ff00" stroke-width="0.3">????</text>
<text x="214" y="204.22" font-size="4.5" fill="#ffffff" textLength="22" lengthAdjust="spacingAndGlyphs" stroke="#ffffff" stroke-width="0.3">???????</text>
<line x1="210" y1="206.5" x2="247.6" y2="206.5" stroke="#ffffff" stroke-width="1"/>
<line x1="247.6" y1="206.5" x2="260.7" y2="197.3" stroke="#ffffff" stroke-width="1"/>
<text x="210" y="212.22" font-size="4.5" fill="#ffffff" textLength="31" lengthAdjust="spacingAndGlyphs" stroke="#ffffff" stroke-width="0.3">??????????</text>
<line x1="255.4" y1="227.5" x2="294.4" y2="227.5" stroke="#00ff00" stroke-width="1"/>
<rect x="256.4" y="222.4" width="18.6" height="4.2" stroke="#00ff00" stroke-width="0" fill="#00ff00"/>
<text x="257" y="226.09" font-size="4.14" fill="#003300" textLength="17.6" lengthAdjust="spacingAndGlyphs" font-weight="bold" stroke="#003300" stroke-width="0.3">??????</text>
<circle cx="286" cy="227.5" r="1.1" stroke="#00ff00" stroke-width="1" fill="none"/>
<circle cx="289" cy="227.5" r="1.1" stroke="#00ff00" stroke-width="1" fill="none"/>
<line x1="287.5" y1="224.6" x2="287.5" y2="227.5" stroke="#00ff00" stroke-width="1"/>
<line x1="286" y1="224.6" x2="289" y2="224.6" stroke="#00ff00" stroke-width="1"/>
<text x="265" y="232.56" font-size="4.32" fill="#00ff00" textLength="10" lengthAdjust="spacingAndGlyphs" font-weight="bold" stroke="#00ff00" stroke-width="0.3">???</text>
<text transform="translate(291.86 246.4) rotate(-90)" font-size="4.6" fill="#00ff00" stroke="#00ff00" stroke-width="0.35" textLength="11.7" lengthAdjust="spacingAndGlyphs" font-weight="bold">????</text>
<text transform="translate(299.56 246.4) rotate(-90)" font-size="4.6" fill="#00ff00" stroke="#00ff00" stroke-width="0.35" textLength="11.7" lengthAdjust="spacingAndGlyphs" font-weight="bold">????</text>
<text transform="translate(307.06 246.4) rotate(-90)" font-size="4.6" fill="#00ff00" stroke="#00ff00" stroke-width="0.35" textLength="11.7" lengthAdjust="spacingAndGlyphs" font-weight="bold">????</text>
<polygon points="215.1,236.7 231.1,236.7 223.1,246.5" stroke="#ffffff" stroke-width="1" fill="none"/>
<line x1="223.1" y1="246.5" x2="223.1" y2="270" stroke="#ffffff" stroke-width="1"/>
<line x1="218.7" y1="247.4" x2="227.9" y2="247.4" stroke="#ffffff" stroke-width="1"/>
<rect x="220.7" y="251.9" width="5" height="2.8" stroke="#ffffff" stroke-width="0" fill="#ffffff"/>
<line x1="219.7" y1="251.9" x2="219.7" y2="254.7" stroke="#ffffff" stroke-width="1"/>
<line x1="225.7" y1="252.7" x2="227.9" y2="251.7" stroke="#ffffff" stroke-width="1"/>
<rect x="221.7" y="261.5" width="2.8" height="4" stroke="#ffffff" stroke-width="1" fill="none"/>
<polygon points="216.25,281.2 216.25,275.6 221.2,275.6 221.2,270 225,270 225,275.6 231.05,275.6 231.05,281.2" stroke="#ffffff" stroke-width="1" fill="none"/>
<rect x="215.5" y="268" width="2.2" height="2.4" stroke="#ffffff" stroke-width="0" fill="#ffffff"/>
<circle cx="219.5" cy="269.2" r="1.1" stroke="#ffffff" stroke-width="1" fill="none"/>
<rect x="221.2" y="267.8" width="3.8" height="2.6" stroke="#ffffff" stroke-width="0" fill="#ffffff"/>
<polygon points="248.5,236.7 264.5,236.7 256.5,246.5" stroke="#ffffff" stroke-width="1" fill="none"/>
<line x1="256.5" y1="246.5" x2="256.5" y2="270" stroke="#ffffff" stroke-width="1"/>
<line x1="252.1" y1="247.4" x2="261.3" y2="247.4" stroke="#ffffff" stroke-width="1"/>
<rect x="254.1" y="251.9" width="5" height="2.8" stroke="#ffffff" stroke-width="0" fill="#ffffff"/>
<line x1="253.1" y1="251.9" x2="253.1" y2="254.7" stroke="#ffffff" stroke-width="1"/>
<line x1="259.1" y1="252.7" x2="261.3" y2="251.7" stroke="#ffffff" stroke-width="1"/>
<rect x="255.1" y="261.5" width="2.8" height="4" stroke="#ffffff" stroke-width="1" fill="none"/>
<polygon points="250.25,281.2 250.25,275.6 254.6,275.6 254.6,270 258.4,270 258.4,275.6 265.05,275.6 265.05,281.2" stroke="#ffffff" stroke-width="1" fill="none"/>
<rect x="248.9" y="268" width="2.2" height="2.4" stroke="#ffffff" stroke-width="0" fill="#ffffff"/>
<circle cx="252.9" cy="269.2" r="1.1" stroke="#ffffff" stroke-width="1" fill="none"/>
<rect x="254.6" y="267.8" width="3.8" height="2.6" stroke="#ffffff" stroke-width="0" fill="#ffffff"/>
<polygon points="215.1,306.6 231.1,306.6 223.1,316.4" stroke="#ffffff" stroke-width="1" fill="none"/>
<line x1="223.1" y1="316.4" x2="223.1" y2="339.9" stroke="#ffffff" stroke-width="1"/>
<line x1="218.7" y1="317.3" x2="227.9" y2="317.3" stroke="#ffffff" stroke-width="1"/>
<rect x="220.7" y="321.8" width="5" height="2.8" stroke="#ffffff" stroke-width="0" fill="#ffffff"/>
<line x1="219.7" y1="321.8" x2="219.7" y2="324.6" stroke="#ffffff" stroke-width="1"/>
<line x1="225.7" y1="322.6" x2="227.9" y2="321.6" stroke="#ffffff" stroke-width="1"/>
<rect x="221.7" y="331.4" width="2.8" height="4" stroke="#ffffff" stroke-width="1" fill="none"/>
<polygon points="213.85,351.4 213.85,345.6 221.2,342 221.2,338 225,338 225,342 228.25,345.6 228.25,351.4" stroke="#ffffff" stroke-width="1" fill="none"/>
<line x1="213.85" y1="345.6" x2="228.25" y2="345.6" stroke="#ffffff" stroke-width="1"/>
<polygon points="211.25,348.4 213.85,346.6 213.85,350.2" stroke="#ffffff" stroke-width="1" fill="#ffffff"/>
<rect x="215.5" y="338" width="2.2" height="2.4" stroke="#ffffff" stroke-width="0" fill="#ffffff"/>
<circle cx="219.5" cy="339.2" r="1.1" stroke="#ffffff" stroke-width="1" fill="none"/>
<rect x="221.2" y="337.8" width="3.8" height="2.6" stroke="#ffffff" stroke-width="0" fill="#ffffff"/>
<polygon points="248.5,306.6 264.5,306.6 256.5,316.4" stroke="#ffffff" stroke-width="1" fill="none"/>
<line x1="256.5" y1="316.4" x2="256.5" y2="339.9" stroke="#ffffff" stroke-width="1"/>
<line x1="252.1" y1="317.3" x2="261.3" y2="317.3" stroke="#ffffff" stroke-width="1"/>
<rect x="254.1" y="321.8" width="5" height="2.8" stroke="#ffffff" stroke-width="0" fill="#ffffff"/>
<line x1="253.1" y1="321.8" x2="253.1" y2="324.6" stroke="#ffffff" stroke-width="1"/>
<line x1="259.1" y1="322.6" x2="261.3" y2="321.6" stroke="#ffffff" stroke-width="1"/>
<rect x="255.1" y="331.4" width="2.8" height="4" stroke="#ffffff" stroke-width="1" fill="none"/>
<polygon points="248.45,351.2 248.45,345.6 254.6,345.6 254.6,340 258.4,340 258.4,345.6 263.25,345.6 263.25,351.2" stroke="#ffffff" stroke-width="1" fill="none"/>
<rect x="248.9" y="338" width="2.2" height="2.4" stroke="#ffffff" stroke-width="0" fill="#ffffff"/>
<circle cx="252.9" cy="339.2" r="1.1" stroke="#ffffff" stroke-width="1" fill="none"/>
<rect x="254.6" y="337.8" width="3.8" height="2.6" stroke="#ffffff" stroke-width="0" fill="#ffffff"/>
<polygon points="215.1,387.7 231.1,387.7 223.1,397.5" stroke="#ffffff" stroke-width="1" fill="none"/>
<line x1="223.1" y1="397.5" x2="223.1" y2="421" stroke="#ffffff" stroke-width="1"/>
<line x1="218.7" y1="398.4" x2="227.9" y2="398.4" stroke="#ffffff" stroke-width="1"/>
<rect x="220.7" y="402.9" width="5" height="2.8" stroke="#ffffff" stroke-width="0" fill="#ffffff"/>
<line x1="219.7" y1="402.9" x2="219.7" y2="405.7" stroke="#ffffff" stroke-width="1"/>
<line x1="225.7" y1="403.7" x2="227.9" y2="402.7" stroke="#ffffff" stroke-width="1"/>
<rect x="221.7" y="412.5" width="2.8" height="4" stroke="#ffffff" stroke-width="1" fill="none"/>
<polygon points="216.25,432.2 216.25,426.6 221.2,426.6 221.2,421 225,421 225,426.6 231.05,426.6 231.05,432.2" stroke="#ffffff" stroke-width="1" fill="none"/>
<rect x="215.5" y="419" width="2.2" height="2.4" stroke="#ffffff" stroke-width="0" fill="#ffffff"/>
<circle cx="219.5" cy="420.2" r="1.1" stroke="#ffffff" stroke-width="1" fill="none"/>
<rect x="221.2" y="418.8" width="3.8" height="2.6" stroke="#ffffff" stroke-width="0" fill="#ffffff"/>
<polygon points="248.5,387.7 264.5,387.7 256.5,397.5" stroke="#ffffff" stroke-width="1" fill="none"/>
<line x1="256.5" y1="397.5" x2="256.5" y2="421" stroke="#ffffff" stroke-width="1"/>
<line x1="252.1" y1="398.4" x2="261.3" y2="398.4" stroke="#ffffff" stroke-width="1"/>
<rect x="254.1" y="402.9" width="5" height="2.8" stroke="#ffffff" stroke-width="0" fill="#ffffff"/>
<line x1="253.1" y1="402.9" x2="253.1" y2="405.7" stroke="#ffffff" stroke-width="1"/>
<line x1="259.1" y1="403.7" x2="261.3" y2="402.7" stroke="#ffffff" stroke-width="1"/>
<rect x="255.1" y="412.5" width="2.8" height="4" stroke="#ffffff" stroke-width="1" fill="none"/>
<polygon points="250.25,432.2 250.25,426.6 254.6,426.6 254.6,421 258.4,421 258.4,426.6 265.05,426.6 265.05,432.2" stroke="#ffffff" stroke-width="1" fill="none"/>
<rect x="248.9" y="419" width="2.2" height="2.4" stroke="#ffffff" stroke-width="0" fill="#ffffff"/>
<circle cx="252.9" cy="420.2" r="1.1" stroke="#ffffff" stroke-width="1" fill="none"/>
<rect x="254.6" y="418.8" width="3.8" height="2.6" stroke="#ffffff" stroke-width="0" fill="#ffffff"/>
<polyline points="215.6,278.7 189.5,278.7" stroke="#ffffff" stroke-width="2" fill="none"/>
<polyline points="189.5,278.7 189.5,348.3 214,348.3" stroke="#ffffff" stroke-width="1" fill="none"/>
<line x1="230.4" y1="278.7" x2="249" y2="278.7" stroke="#ffffff" stroke-width="2"/>
<line x1="263.8" y1="278.7" x2="271" y2="278.7" stroke="#ffffff" stroke-width="2"/>
<line x1="271" y1="278.7" x2="294.4" y2="278.7" stroke="#00ff00" stroke-width="2"/>
<rect x="200.8" y="277.5" width="2" height="2.4" stroke="#ffffff" stroke-width="0" fill="#ffffff"/>
<rect x="210.6" y="277.5" width="2" height="2.4" stroke="#ffffff" stroke-width="0" fill="#ffffff"/>
<rect x="231.6" y="277.5" width="2" height="2.4" stroke="#ffffff" stroke-width="0" fill="#ffffff"/>
<rect x="236.9" y="277.5" width="2" height="2.4" stroke="#ffffff" stroke-width="0" fill="#ffffff"/>
<rect x="242.1" y="277.5" width="2" height="2.4" stroke="#ffffff" stroke-width="0" fill="#ffffff"/>
<rect x="265.1" y="277.5" width="2" height="2.4" stroke="#ffffff" stroke-width="0" fill="#ffffff"/>
<rect x="269.4" y="277.5" width="2" height="2.4" stroke="#ffffff" stroke-width="0" fill="#ffffff"/>
<text x="276.5" y="278.16" font-size="4.32" fill="#ffffff" textLength="10.5" lengthAdjust="spacingAndGlyphs" font-weight="bold" stroke="#ffffff" stroke-width="0.3">????</text>
<text x="233" y="277.63" font-size="3.96" fill="#ffffff" textLength="14" lengthAdjust="spacingAndGlyphs" font-weight="bold" stroke="#ffffff" stroke-width="0.3">?????</text>
<line x1="201.9" y1="280" x2="201.9" y2="297.6" stroke="#00ffff" stroke-width="1"/>
<polygon points="200.8,291.47 203,291.47 201.9,293.67" stroke="#00ffff" stroke-width="1" fill="#00ffff"/>
<line x1="211.9" y1="280" x2="211.9" y2="297.6" stroke="#00ffff" stroke-width="1"/>
<polygon points="210.8,291.47 213,291.47 211.9,293.67" stroke="#00ffff" stroke-width="1" fill="#00ffff"/>
<line x1="229" y1="280" x2="229" y2="297.6" stroke="#00ffff" stroke-width="1"/>
<polygon points="227.9,291.47 230.1,291.47 229,293.67" stroke="#00ffff" stroke-width="1" fill="#00ffff"/>
<line x1="234" y1="280" x2="234" y2="297.6" stroke="#00ffff" stroke-width="1"/>
<polygon points="232.9,291.47 235.1,291.47 234,293.67" stroke="#00ffff" stroke-width="1" fill="#00ffff"/>
<line x1="237.9" y1="280" x2="237.9" y2="297.6" stroke="#00ffff" stroke-width="1"/>
<polygon points="236.8,291.47 239,291.47 237.9,293.67" stroke="#00ffff" stroke-width="1" fill="#00ffff"/>
<line x1="242.9" y1="280" x2="242.9" y2="297.6" stroke="#00ffff" stroke-width="1"/>
<polygon points="241.8,291.47 244,291.47 242.9,293.67" stroke="#00ffff" stroke-width="1" fill="#00ffff"/>
<line x1="262.9" y1="280" x2="262.9" y2="297.6" stroke="#00ffff" stroke-width="1"/>
<polygon points="261.8,291.47 264,291.47 262.9,293.67" stroke="#00ffff" stroke-width="1" fill="#00ffff"/>
<line x1="266.3" y1="280" x2="266.3" y2="297.6" stroke="#00ffff" stroke-width="1"/>
<polygon points="265.2,291.47 267.4,291.47 266.3,293.67" stroke="#00ffff" stroke-width="1" fill="#00ffff"/>
<text transform="translate(232.18 295.6) rotate(-90)" font-size="4.4" fill="#00ffff" stroke="#00ffff" stroke-width="0.35" textLength="13.1" lengthAdjust="spacingAndGlyphs" font-weight="bold">????</text>
<text transform="translate(265.58 295.6) rotate(-90)" font-size="4.4" fill="#00ffff" stroke="#00ffff" stroke-width="0.35" textLength="13.1" lengthAdjust="spacingAndGlyphs" font-weight="bold">????</text>
<polyline points="200.8,297.7 283.6,297.7 283.6,368.4" stroke="#00ffff" stroke-width="1" fill="none"/>
<text x="241.5" y="296.09" font-size="4.14" fill="#00ffff" textLength="13" lengthAdjust="spacingAndGlyphs" font-weight="bold" stroke="#00ffff" stroke-width="0.3">????</text>
<text x="188" y="237.22" font-size="4.5" fill="#ffffff" textLength="6.5" lengthAdjust="spacingAndGlyphs" stroke="#ffffff" stroke-width="0.3">??</text>
<line x1="183" y1="239.3" x2="203.8" y2="239.3" stroke="#ffffff" stroke-width="1"/>
<line x1="203.8" y1="239.3" x2="221.3" y2="252.7" stroke="#ffffff" stroke-width="1"/>
<text x="183" y="243.42" font-size="4.5" fill="#ffffff" textLength="12" lengthAdjust="spacingAndGlyphs" font-weight="bold" stroke="#ffffff" stroke-width="0.3">????</text>
<line x1="200.3" y1="240.2" x2="201.6" y2="242.2" stroke="#ffffff" stroke-width="1"/>
<text x="193.5" y="248.22" font-size="4.5" fill="#ffffff" textLength="7.5" lengthAdjust="spacingAndGlyphs" stroke="#ffffff" stroke-width="0.3">??</text>
<line x1="193" y1="250.3" x2="203.8" y2="250.3" stroke="#ffffff" stroke-width="1"/>
<line x1="203.8" y1="250.3" x2="221" y2="263" stroke="#ffffff" stroke-width="1"/>
<text x="183" y="256.22" font-size="4.5" fill="#ffffff" textLength="10" lengthAdjust="spacingAndGlyphs" stroke="#ffffff" stroke-width="0.3">???</text>
<line x1="181.5" y1="257.3" x2="203.8" y2="257.3" stroke="#ffffff" stroke-width="1"/>
<line x1="203.8" y1="257.3" x2="219.4" y2="268.8" stroke="#ffffff" stroke-width="1"/>
<text x="182" y="262.02" font-size="4.5" fill="#ffffff" textLength="19.5" lengthAdjust="spacingAndGlyphs" font-weight="bold" stroke="#ffffff" stroke-width="0.3">??????</text>
<text x="188.5" y="267.22" font-size="4.5" fill="#ffffff" textLength="6" lengthAdjust="spacingAndGlyphs" stroke="#ffffff" stroke-width="0.3">??</text>
<line x1="184" y1="269.3" x2="205.7" y2="269.3" stroke="#ffffff" stroke-width="1"/>
<line x1="205.7" y1="269.3" x2="216.4" y2="275.7" stroke="#ffffff" stroke-width="1"/>
<text x="184.5" y="273.82" font-size="4.5" fill="#ffffff" textLength="16" lengthAdjust="spacingAndGlyphs" font-weight="bold" stroke="#ffffff" stroke-width="0.3">?????</text>
<text x="235.5" y="263.76" font-size="4.32" fill="#ffffff" textLength="7.2" lengthAdjust="spacingAndGlyphs" stroke="#ffffff" stroke-width="0.3">??</text>
<rect x="236.3" y="265.2" width="10.3" height="4" stroke="#00ffff" stroke-width="0" fill="#00ffff"/>
<text x="237" y="268.56" font-size="3.78" fill="#004040" textLength="9" lengthAdjust="spacingAndGlyphs" font-weight="bold" stroke="#004040" stroke-width="0.3">???</text>
<line x1="246.2" y1="269.6" x2="233.5" y2="277.2" stroke="#ffffff" stroke-width="1"/>
<text x="269" y="259.22" font-size="4.5" fill="#ffffff" textLength="12.7" lengthAdjust="spacingAndGlyphs" stroke="#ffffff" stroke-width="0.3">? ???</text>
<line x1="265.1" y1="261.4" x2="288" y2="261.4" stroke="#ffffff" stroke-width="1"/>
<line x1="265.1" y1="261.4" x2="270.4" y2="276.6" stroke="#ffffff" stroke-width="1"/>
<text x="268" y="266.68" font-size="4.68" fill="#ffffff" textLength="19.5" lengthAdjust="spacingAndGlyphs" font-weight="bold" stroke="#ffffff" stroke-width="0.3">??????</text>
<line x1="231.6" y1="348.3" x2="248" y2="348.3" stroke="#ffffff" stroke-width="2"/>
<line x1="263" y1="348.3" x2="272.5" y2="348.3" stroke="#00ffff" stroke-width="1"/>
<polyline points="272.5,348.3 272.5,381.4 170.6,381.4" stroke="#00ffff" stroke-width="1" fill="none"/>
<line x1="283.6" y1="305" x2="285.2" y2="305" stroke="#00ffff" stroke-width="1"/>
<line x1="283.6" y1="318" x2="285.2" y2="318" stroke="#00ffff" stroke-width="1"/>
<line x1="283.6" y1="330" x2="285.2" y2="330" stroke="#00ffff" stroke-width="1"/>
<line x1="283.6" y1="340" x2="285.2" y2="340" stroke="#00ffff" stroke-width="1"/>
<line x1="283.6" y1="348" x2="285.2" y2="348" stroke="#00ffff" stroke-width="1"/>
<line x1="283.6" y1="358" x2="285.2" y2="358" stroke="#00ffff" stroke-width="1"/>
<rect x="234" y="347.1" width="2" height="2.4" stroke="#ffffff" stroke-width="0" fill="#ffffff"/>
<rect x="240.8" y="347.1" width="2" height="2.4" stroke="#ffffff" stroke-width="0" fill="#ffffff"/>
<rect x="245.6" y="347.1" width="2" height="2.4" stroke="#ffffff" stroke-width="0" fill="#ffffff"/>
<text x="233.5" y="347.03" font-size="3.96" fill="#ffffff" textLength="13" lengthAdjust="spacingAndGlyphs" font-weight="bold" stroke="#ffffff" stroke-width="0.3">????</text>
<line x1="213.1" y1="352" x2="213.1" y2="368.2" stroke="#00ffff" stroke-width="1"/>
<polygon points="212,362.46 214.2,362.46 213.1,364.66" stroke="#00ffff" stroke-width="1" fill="#00ffff"/>
<line x1="217.4" y1="352" x2="217.4" y2="368.2" stroke="#00ffff" stroke-width="1"/>
<polygon points="216.3,362.46 218.5,362.46 217.4,364.66" stroke="#00ffff" stroke-width="1" fill="#00ffff"/>
<line x1="235" y1="352" x2="235" y2="368.2" stroke="#00ffff" stroke-width="1"/>
<polygon points="233.9,362.46 236.1,362.46 235,364.66" stroke="#00ffff" stroke-width="1" fill="#00ffff"/>
<line x1="241.8" y1="352" x2="241.8" y2="368.2" stroke="#00ffff" stroke-width="1"/>
<polygon points="240.7,362.46 242.9,362.46 241.8,364.66" stroke="#00ffff" stroke-width="1" fill="#00ffff"/>
<line x1="246.6" y1="352" x2="246.6" y2="368.2" stroke="#00ffff" stroke-width="1"/>
<polygon points="245.5,362.46 247.7,362.46 246.6,364.66" stroke="#00ffff" stroke-width="1" fill="#00ffff"/>
<line x1="250.5" y1="352" x2="250.5" y2="368.2" stroke="#00ffff" stroke-width="1"/>
<polygon points="249.4,362.46 251.6,362.46 250.5,364.66" stroke="#00ffff" stroke-width="1" fill="#00ffff"/>
<text transform="translate(215.98 366.2) rotate(-90)" font-size="4.4" fill="#00ffff" stroke="#00ffff" stroke-width="0.35" textLength="11.7" lengthAdjust="spacingAndGlyphs" font-weight="bold">????</text>
<text transform="translate(238.18 366.2) rotate(-90)" font-size="4.4" fill="#00ffff" stroke="#00ffff" stroke-width="0.35" textLength="11.7" lengthAdjust="spacingAndGlyphs" font-weight="bold">????</text>
<text transform="translate(249.58 366.2) rotate(-90)" font-size="4.4" fill="#00ffff" stroke="#00ffff" stroke-width="0.35" textLength="11.7" lengthAdjust="spacingAndGlyphs" font-weight="bold">????</text>
<line x1="174.5" y1="368.4" x2="283.6" y2="368.4" stroke="#00ffff" stroke-width="1"/>
<line x1="174.5" y1="368.4" x2="174.5" y2="381.4" stroke="#00ffff" stroke-width="1"/>
<text x="227" y="367.03" font-size="3.96" fill="#00ffff" textLength="13.5" lengthAdjust="spacingAndGlyphs" font-weight="bold" stroke="#00ffff" stroke-width="0.3">????</text>
<text x="198" y="303.82" font-size="4.5" fill="#ffffff" textLength="5" lengthAdjust="spacingAndGlyphs" stroke="#ffffff" stroke-width="0.3">??</text>
<line x1="193" y1="306" x2="205.7" y2="306" stroke="#ffffff" stroke-width="1"/>
<line x1="205.7" y1="306" x2="221.3" y2="317.7" stroke="#ffffff" stroke-width="1"/>
<text x="193" y="310.62" font-size="4.5" fill="#ffffff" textLength="11" lengthAdjust="spacingAndGlyphs" font-weight="bold" stroke="#ffffff" stroke-width="0.3">????</text>
<line x1="209.5" y1="307" x2="210.6" y2="309" stroke="#ffffff" stroke-width="1"/>
<text x="203.4" y="315.42" font-size="4.5" fill="#ffffff" textLength="6.2" lengthAdjust="spacingAndGlyphs" stroke="#ffffff" stroke-width="0.3">??</text>
<line x1="203.4" y1="316.8" x2="215.5" y2="316.8" stroke="#ffffff" stroke-width="1"/>
<line x1="215.5" y1="316.8" x2="222.3" y2="328.4" stroke="#ffffff" stroke-width="1"/>
<text x="193.5" y="323.22" font-size="4.5" fill="#ffffff" textLength="10.5" lengthAdjust="spacingAndGlyphs" stroke="#ffffff" stroke-width="0.3">????</text>
<line x1="192.5" y1="324.6" x2="213.5" y2="324.6" stroke="#ffffff" stroke-width="1"/>
<line x1="213.5" y1="324.6" x2="221.3" y2="337.2" stroke="#ffffff" stroke-width="1"/>
<text x="193" y="329.22" font-size="4.5" fill="#ffffff" textLength="17.6" lengthAdjust="spacingAndGlyphs" font-weight="bold" stroke="#ffffff" stroke-width="0.3">??????</text>
<text x="198" y="334.02" font-size="4.5" fill="#ffffff" textLength="6" lengthAdjust="spacingAndGlyphs" stroke="#ffffff" stroke-width="0.3">??</text>
<line x1="194" y1="336.2" x2="213.5" y2="336.2" stroke="#ffffff" stroke-width="1"/>
<line x1="213.5" y1="336.2" x2="219.4" y2="341" stroke="#ffffff" stroke-width="1"/>
<text x="194.5" y="340.82" font-size="4.5" fill="#ffffff" textLength="17.5" lengthAdjust="spacingAndGlyphs" font-weight="bold" stroke="#ffffff" stroke-width="0.3">??????</text>
<text x="192" y="347.62" font-size="4.5" fill="#ffffff" textLength="12.7" lengthAdjust="spacingAndGlyphs" font-weight="bold" stroke="#ffffff" stroke-width="0.3">????</text>
<text x="233.6" y="332.56" font-size="4.32" fill="#ffffff" textLength="7.2" lengthAdjust="spacingAndGlyphs" stroke="#ffffff" stroke-width="0.3">??</text>
<text x="233.6" y="336.49" font-size="4.14" fill="#00ffff" textLength="10.8" lengthAdjust="spacingAndGlyphs" font-weight="bold" stroke="#00ffff" stroke-width="0.3">????</text>
<line x1="244.7" y1="337.2" x2="223.3" y2="343" stroke="#ffffff" stroke-width="1"/>
<line x1="244.7" y1="337.2" x2="244.7" y2="345" stroke="#ffffff" stroke-width="1"/>
<text x="158" y="365.08" font-size="4.68" fill="#ffffff" textLength="10.7" lengthAdjust="spacingAndGlyphs" stroke="#ffffff" stroke-width="0.3">????</text>
<line x1="158" y1="366.5" x2="182.3" y2="366.5" stroke="#ffffff" stroke-width="1"/>
<text x="173" y="365.09" font-size="4.14" fill="#00ffff" textLength="9.3" lengthAdjust="spacingAndGlyphs" font-weight="bold" stroke="#00ffff" stroke-width="0.3">DWD</text>
<circle cx="184.5" cy="368.4" r="1.1" stroke="#00ffff" stroke-width="1" fill="none"/>
<circle cx="188.5" cy="368.4" r="1.1" stroke="#00ffff" stroke-width="1" fill="none"/>
<circle cx="193.5" cy="368.4" r="1.1" stroke="#00ffff" stroke-width="1" fill="none"/>
<line x1="196" y1="365.6" x2="196" y2="368.4" stroke="#00ffff" stroke-width="1"/>
<line x1="182.3" y1="366.5" x2="178" y2="377" stroke="#ffffff" stroke-width="1"/>
<rect x="176.5" y="376.8" width="34.7" height="7.7" stroke="#ffffff" stroke-width="1" fill="none"/>
<text x="180.5" y="379.76" font-size="3.78" fill="#00ffff" textLength="8" lengthAdjust="spacingAndGlyphs" font-weight="bold" stroke="#00ffff" stroke-width="0.3">???</text>
<circle cx="181.5" cy="381.4" r="1" stroke="#00ffff" stroke-width="1" fill="none"/>
<circle cx="183.9" cy="381.4" r="1" stroke="#00ffff" stroke-width="1" fill="none"/>
<circle cx="191" cy="381.4" r="1" stroke="#00ffff" stroke-width="1" fill="none"/>
<circle cx="193.4" cy="381.4" r="1" stroke="#00ffff" stroke-width="1" fill="none"/>
<circle cx="200.5" cy="381.4" r="1" stroke="#00ffff" stroke-width="1" fill="none"/>
<circle cx="202.9" cy="381.4" r="1" stroke="#00ffff" stroke-width="1" fill="none"/>
<line x1="204" y1="378.8" x2="204" y2="383" stroke="#00ffff" stroke-width="1"/>
<line x1="202.6" y1="378.8" x2="205.4" y2="378.8" stroke="#00ffff" stroke-width="1"/>
<text x="236" y="379.69" font-size="4.14" fill="#00ffff" textLength="9.7" lengthAdjust="spacingAndGlyphs" font-weight="bold" stroke="#00ffff" stroke-width="0.3">???</text>
<line x1="171" y1="429.6" x2="216" y2="429.6" stroke="#00ffff" stroke-width="1"/>
<line x1="230.4" y1="429.6" x2="249" y2="429.6" stroke="#ffffff" stroke-width="2"/>
<line x1="263.8" y1="429.6" x2="271" y2="429.6" stroke="#ffffff" stroke-width="2"/>
<line x1="271" y1="429.6" x2="294.4" y2="429.6" stroke="#00ff00" stroke-width="1"/>
<rect x="231.6" y="428.4" width="2" height="2.4" stroke="#ffffff" stroke-width="0" fill="#ffffff"/>
<rect x="236.9" y="428.4" width="2" height="2.4" stroke="#ffffff" stroke-width="0" fill="#ffffff"/>
<rect x="243.7" y="428.4" width="2" height="2.4" stroke="#ffffff" stroke-width="0" fill="#ffffff"/>
<rect x="265.1" y="428.4" width="2" height="2.4" stroke="#ffffff" stroke-width="0" fill="#ffffff"/>
<rect x="269.4" y="428.4" width="2" height="2.4" stroke="#ffffff" stroke-width="0" fill="#ffffff"/>
<rect x="176" y="425.3" width="35.2" height="7.5" stroke="#ffffff" stroke-width="1" fill="none"/>
<text x="180" y="428.26" font-size="3.78" fill="#00ffff" textLength="8" lengthAdjust="spacingAndGlyphs" font-weight="bold" stroke="#00ffff" stroke-width="0.3">???</text>
<circle cx="181" cy="429.6" r="1" stroke="#00ffff" stroke-width="1" fill="none"/>
<circle cx="183.4" cy="429.6" r="1" stroke="#00ffff" stroke-width="1" fill="none"/>
<circle cx="190.5" cy="429.6" r="1" stroke="#00ffff" stroke-width="1" fill="none"/>
<circle cx="192.9" cy="429.6" r="1" stroke="#00ffff" stroke-width="1" fill="none"/>
<circle cx="200" cy="429.6" r="1" stroke="#00ffff" stroke-width="1" fill="none"/>
<circle cx="202.4" cy="429.6" r="1" stroke="#00ffff" stroke-width="1" fill="none"/>
<line x1="204" y1="427" x2="204" y2="431.2" stroke="#00ffff" stroke-width="1"/>
<line x1="202.6" y1="427" x2="205.4" y2="427" stroke="#00ffff" stroke-width="1"/>
<text x="276.8" y="428.76" font-size="4.32" fill="#ffffff" textLength="12.7" lengthAdjust="spacingAndGlyphs" font-weight="bold" stroke="#ffffff" stroke-width="0.3">????</text>
<line x1="228.1" y1="431" x2="228.1" y2="449.2" stroke="#00ffff" stroke-width="1"/>
<polygon points="227,442.9 229.2,442.9 228.1,445.1" stroke="#00ffff" stroke-width="1" fill="#00ffff"/>
<line x1="232.6" y1="431" x2="232.6" y2="449.2" stroke="#00ffff" stroke-width="1"/>
<polygon points="231.5,442.9 233.7,442.9 232.6,445.1" stroke="#00ffff" stroke-width="1" fill="#00ffff"/>
<line x1="237.9" y1="431" x2="237.9" y2="449.2" stroke="#00ffff" stroke-width="1"/>
<polygon points="236.8,442.9 239,442.9 237.9,445.1" stroke="#00ffff" stroke-width="1" fill="#00ffff"/>
<line x1="244.7" y1="431" x2="244.7" y2="449.2" stroke="#00ffff" stroke-width="1"/>
<polygon points="243.6,442.9 245.8,442.9 244.7,445.1" stroke="#00ffff" stroke-width="1" fill="#00ffff"/>
<line x1="261.8" y1="431" x2="261.8" y2="449.2" stroke="#00ffff" stroke-width="1"/>
<polygon points="260.7,442.9 262.9,442.9 261.8,445.1" stroke="#00ffff" stroke-width="1" fill="#00ffff"/>
<line x1="266.1" y1="431" x2="266.1" y2="449.2" stroke="#00ffff" stroke-width="1"/>
<polygon points="265,442.9 267.2,442.9 266.1,445.1" stroke="#00ffff" stroke-width="1" fill="#00ffff"/>
<text transform="translate(231.18 447.2) rotate(-90)" font-size="4.4" fill="#00ffff" stroke="#00ffff" stroke-width="0.35" textLength="13.7" lengthAdjust="spacingAndGlyphs" font-weight="bold">?????</text>
<text transform="translate(264.98 447.2) rotate(-90)" font-size="4.4" fill="#00ffff" stroke="#00ffff" stroke-width="0.35" textLength="13.7" lengthAdjust="spacingAndGlyphs" font-weight="bold">?????</text>
<polyline points="174.5,429.6 174.5,436 199.9,436 199.9,449.3 271,449.3" stroke="#00ffff" stroke-width="1" fill="none"/>
<circle cx="185.5" cy="436" r="1" stroke="#00ffff" stroke-width="1" fill="none"/>
<circle cx="188" cy="436" r="1" stroke="#00ffff" stroke-width="1" fill="none"/>
<polygon points="196.2,441.2 199.9,439.6 199.9,442.8" stroke="#00ffff" stroke-width="1" fill="#00ffff"/>
<text x="208.6" y="448.16" font-size="4.32" fill="#00ffff" textLength="13.7" lengthAdjust="spacingAndGlyphs" font-weight="bold" stroke="#00ffff" stroke-width="0.3">?????</text>
<text x="157.4" y="423.62" font-size="4.5" fill="#ffffff" textLength="9.4" lengthAdjust="spacingAndGlyphs" stroke="#ffffff" stroke-width="0.3">???</text>
<text x="172.2" y="423.49" font-size="4.14" fill="#00ffff" textLength="9.2" lengthAdjust="spacingAndGlyphs" font-weight="bold" stroke="#00ffff" stroke-width="0.3">DWD</text>
<text transform="translate(167.86 448.7) rotate(-90)" font-size="4.6" fill="#00ffff" stroke="#00ffff" stroke-width="0.35" textLength="11.7" lengthAdjust="spacingAndGlyphs" font-weight="bold">????</text>
<text x="188" y="388.42" font-size="4.5" fill="#ffffff" textLength="6.5" lengthAdjust="spacingAndGlyphs" stroke="#ffffff" stroke-width="0.3">??</text>
<line x1="183" y1="390.5" x2="203.8" y2="390.5" stroke="#ffffff" stroke-width="1"/>
<line x1="203.8" y1="390.5" x2="221.3" y2="403.9" stroke="#ffffff" stroke-width="1"/>
<text x="183" y="394.62" font-size="4.5" fill="#ffffff" textLength="12" lengthAdjust="spacingAndGlyphs" font-weight="bold" stroke="#ffffff" stroke-width="0.3">????</text>
<line x1="200.3" y1="391.4" x2="201.6" y2="393.4" stroke="#ffffff" stroke-width="1"/>
<text x="193.5" y="399.42" font-size="4.5" fill="#ffffff" textLength="7.5" lengthAdjust="spacingAndGlyphs" stroke="#ffffff" stroke-width="0.3">??</text>
<line x1="193" y1="401.5" x2="203.8" y2="401.5" stroke="#ffffff" stroke-width="1"/>
<line x1="203.8" y1="401.5" x2="221" y2="414.2" stroke="#ffffff" stroke-width="1"/>
<text x="183.3" y="406.02" font-size="4.5" fill="#ffffff" textLength="12.7" lengthAdjust="spacingAndGlyphs" stroke="#ffffff" stroke-width="0.3">????</text>
<line x1="181.4" y1="407.4" x2="203.8" y2="407.4" stroke="#ffffff" stroke-width="1"/>
<line x1="203.8" y1="407.4" x2="221.3" y2="419.5" stroke="#ffffff" stroke-width="1"/>
<text x="183" y="411.82" font-size="4.5" fill="#ffffff" textLength="20" lengthAdjust="spacingAndGlyphs" font-weight="bold" stroke="#ffffff" stroke-width="0.3">???????</text>
<text x="188.2" y="416.22" font-size="4.5" fill="#ffffff" textLength="6.8" lengthAdjust="spacingAndGlyphs" stroke="#ffffff" stroke-width="0.3">??</text>
<line x1="185.3" y1="418" x2="205.7" y2="418" stroke="#ffffff" stroke-width="1"/>
<line x1="205.7" y1="418" x2="216.4" y2="424.4" stroke="#ffffff" stroke-width="1"/>
<text x="186" y="422.32" font-size="4.5" fill="#ffffff" textLength="18" lengthAdjust="spacingAndGlyphs" font-weight="bold" stroke="#ffffff" stroke-width="0.3">??????</text>
<text x="236" y="413.56" font-size="4.32" fill="#ffffff" textLength="6.7" lengthAdjust="spacingAndGlyphs" stroke="#ffffff" stroke-width="0.3">??</text>
<rect x="235.3" y="415.1" width="10.9" height="3.5" stroke="#00ffff" stroke-width="0" fill="#00ffff"/>
<text x="236" y="418.26" font-size="3.78" fill="#004040" textLength="9.6" lengthAdjust="spacingAndGlyphs" font-weight="bold" stroke="#004040" stroke-width="0.3">???</text>
<line x1="246" y1="419.2" x2="234" y2="428" stroke="#ffffff" stroke-width="1"/>
<text x="270" y="410.42" font-size="4.5" fill="#ffffff" textLength="12" lengthAdjust="spacingAndGlyphs" stroke="#ffffff" stroke-width="0.3">?????</text>
<line x1="265.1" y1="412" x2="288" y2="412" stroke="#ffffff" stroke-width="1"/>
<line x1="265.1" y1="412" x2="270.4" y2="429.2" stroke="#ffffff" stroke-width="1"/>
<text x="268" y="417.48" font-size="4.68" fill="#ffffff" textLength="19.5" lengthAdjust="spacingAndGlyphs" font-weight="bold" stroke="#ffffff" stroke-width="0.3">??????</text>
<line x1="170.8" y1="371.3" x2="170.8" y2="640.7" stroke="#00ffff" stroke-width="1" stroke-dasharray="11 1.6 1.2 1.8"/>
<polygon points="215.2,455.9 231,455.9 223.1,465.1" stroke="#ffffff" stroke-width="1" fill="none"/>
<line x1="223.1" y1="465" x2="223.1" y2="488" stroke="#ffffff" stroke-width="1"/>
<line x1="218.7" y1="465.8" x2="227.9" y2="465.8" stroke="#ffffff" stroke-width="1"/>
<rect x="220.7" y="470.3" width="5" height="2.8" stroke="#ffffff" stroke-width="0" fill="#ffffff"/>
<line x1="219.7" y1="470.3" x2="219.7" y2="473.1" stroke="#ffffff" stroke-width="1"/>
<line x1="225.7" y1="471.1" x2="227.9" y2="470.1" stroke="#ffffff" stroke-width="1"/>
<rect x="221.7" y="479.9" width="2.8" height="4" stroke="#ffffff" stroke-width="1" fill="none"/>
<polygon points="217.2,504.7 217.2,494.5 219.7,492.5 226.1,492.5 228.6,494.5 228.6,504.7 223.3,512.5 222.3,512.5" stroke="#ffffff" stroke-width="1" fill="none"/>
<line x1="217.2" y1="494.5" x2="228.6" y2="494.5" stroke="#ffffff" stroke-width="1"/>
<line x1="217.9" y1="499.1" x2="219.7" y2="499.1" stroke="#ffffff" stroke-width="1"/>
<rect x="215.1" y="487.1" width="3.2" height="2.4" stroke="#ffffff" stroke-width="0" fill="#ffffff"/>
<circle cx="222.5" cy="488.5" r="1.7" stroke="#ffffff" stroke-width="1" fill="none"/>
<line x1="218.3" y1="488.5" x2="220.7" y2="488.5" stroke="#ffffff" stroke-width="1"/>
<polyline points="229.5,458.4 232.6,458.4 232.6,489.3 227.4,489.3 227.4,493" stroke="#ffffff" stroke-width="1" fill="none"/>
<text transform="translate(237.18 466) rotate(-90)" font-size="4.4" fill="#ffffff" stroke="#ffffff" stroke-width="0.35" textLength="7.6" lengthAdjust="spacingAndGlyphs" font-weight="bold">???</text>
<circle cx="232.6" cy="473.8" r="1.2" stroke="#ffffff" stroke-width="1" fill="none"/>
<line x1="231.2" y1="471" x2="236.6" y2="471" stroke="#ffffff" stroke-width="1"/>
<rect x="234.2" y="470.4" width="2.4" height="2.4" stroke="#ffffff" stroke-width="0" fill="#ffffff"/>
<polygon points="248.6,455.9 264.4,455.9 256.5,465.1" stroke="#ffffff" stroke-width="1" fill="none"/>
<line x1="256.5" y1="465" x2="256.5" y2="488" stroke="#ffffff" stroke-width="1"/>
<line x1="252.1" y1="465.8" x2="261.3" y2="465.8" stroke="#ffffff" stroke-width="1"/>
<rect x="254.1" y="470.3" width="5" height="2.8" stroke="#ffffff" stroke-width="0" fill="#ffffff"/>
<line x1="253.1" y1="470.3" x2="253.1" y2="473.1" stroke="#ffffff" stroke-width="1"/>
<line x1="259.1" y1="471.1" x2="261.3" y2="470.1" stroke="#ffffff" stroke-width="1"/>
<rect x="255.1" y="479.9" width="2.8" height="4" stroke="#ffffff" stroke-width="1" fill="none"/>
<polygon points="250.6,504.7 250.6,494.5 253.1,492.5 259.5,492.5 262,494.5 262,504.7 256.7,512.5 255.7,512.5" stroke="#ffffff" stroke-width="1" fill="none"/>
<line x1="250.6" y1="494.5" x2="262" y2="494.5" stroke="#ffffff" stroke-width="1"/>
<line x1="251.3" y1="499.1" x2="253.1" y2="499.1" stroke="#ffffff" stroke-width="1"/>
<rect x="248.5" y="487.1" width="3.2" height="2.4" stroke="#ffffff" stroke-width="0" fill="#ffffff"/>
<circle cx="255.9" cy="488.5" r="1.7" stroke="#ffffff" stroke-width="1" fill="none"/>
<line x1="251.7" y1="488.5" x2="254.1" y2="488.5" stroke="#ffffff" stroke-width="1"/>
<polyline points="262.9,458.4 266,458.4 266,489.3 260.8,489.3 260.8,493" stroke="#ffffff" stroke-width="1" fill="none"/>
<text transform="translate(270.58 466) rotate(-90)" font-size="4.4" fill="#ffffff" stroke="#ffffff" stroke-width="0.35" textLength="7.6" lengthAdjust="spacingAndGlyphs" font-weight="bold">???</text>
<circle cx="266" cy="473.8" r="1.2" stroke="#ffffff" stroke-width="1" fill="none"/>
<line x1="264.6" y1="471" x2="270" y2="471" stroke="#ffffff" stroke-width="1"/>
<rect x="267.6" y="470.4" width="2.4" height="2.4" stroke="#ffffff" stroke-width="0" fill="#ffffff"/>
<line x1="171" y1="509.5" x2="217.5" y2="509.5" stroke="#00ffff" stroke-width="1"/>
<line x1="228" y1="509.5" x2="251" y2="509.5" stroke="#ffffff" stroke-width="1.4"/>
<line x1="262" y1="509.5" x2="268" y2="509.5" stroke="#ffffff" stroke-width="1.4"/>
<line x1="268" y1="509.5" x2="302.2" y2="509.5" stroke="#00ff00" stroke-width="1"/>
<rect x="230" y="508.3" width="2" height="2.4" stroke="#ffffff" stroke-width="0" fill="#ffffff"/>
<rect x="238.8" y="508.3" width="2" height="2.4" stroke="#ffffff" stroke-width="0" fill="#ffffff"/>
<rect x="245.6" y="508.3" width="2" height="2.4" stroke="#ffffff" stroke-width="0" fill="#ffffff"/>
<rect x="262.8" y="508.3" width="2" height="2.4" stroke="#ffffff" stroke-width="0" fill="#ffffff"/>
<rect x="268" y="508.3" width="2" height="2.4" stroke="#ffffff" stroke-width="0" fill="#ffffff"/>
<rect x="176" y="504.6" width="32.6" height="8.4" stroke="#ffffff" stroke-width="1" fill="none"/>
<text x="180" y="507.56" font-size="3.78" fill="#00ffff" textLength="8" lengthAdjust="spacingAndGlyphs" font-weight="bold" stroke="#00ffff" stroke-width="0.3">???</text>
<circle cx="181" cy="509.5" r="1" stroke="#00ffff" stroke-width="1" fill="none"/>
<circle cx="183.4" cy="509.5" r="1" stroke="#00ffff" stroke-width="1" fill="none"/>
<circle cx="190.5" cy="509.5" r="1" stroke="#00ffff" stroke-width="1" fill="none"/>
<circle cx="192.9" cy="509.5" r="1" stroke="#00ffff" stroke-width="1" fill="none"/>
<circle cx="200" cy="509.5" r="1" stroke="#00ffff" stroke-width="1" fill="none"/>
<circle cx="202.4" cy="509.5" r="1" stroke="#00ffff" stroke-width="1" fill="none"/>
<line x1="201.4" y1="506.9" x2="201.4" y2="511.1" stroke="#00ffff" stroke-width="1"/>
<line x1="200" y1="506.9" x2="202.8" y2="506.9" stroke="#00ffff" stroke-width="1"/>
<line x1="231" y1="511" x2="231" y2="526" stroke="#00ffff" stroke-width="1"/>
<polygon points="229.9,520.6 232.1,520.6 231,522.8" stroke="#00ffff" stroke-width="1" fill="#00ffff"/>
<line x1="235" y1="511" x2="235" y2="526" stroke="#00ffff" stroke-width="1"/>
<polygon points="233.9,520.6 236.1,520.6 235,522.8" stroke="#00ffff" stroke-width="1" fill="#00ffff"/>
<line x1="239.8" y1="511" x2="239.8" y2="526" stroke="#00ffff" stroke-width="1"/>
<polygon points="238.7,520.6 240.9,520.6 239.8,522.8" stroke="#00ffff" stroke-width="1" fill="#00ffff"/>
<line x1="246.6" y1="511" x2="246.6" y2="526" stroke="#00ffff" stroke-width="1"/>
<polygon points="245.5,520.6 247.7,520.6 246.6,522.8" stroke="#00ffff" stroke-width="1" fill="#00ffff"/>
<line x1="259.9" y1="511" x2="259.9" y2="526" stroke="#00ffff" stroke-width="1"/>
<polygon points="258.8,520.6 261,520.6 259.9,522.8" stroke="#00ffff" stroke-width="1" fill="#00ffff"/>
<line x1="263.8" y1="511" x2="263.8" y2="526" stroke="#00ffff" stroke-width="1"/>
<polygon points="262.7,520.6 264.9,520.6 263.8,522.8" stroke="#00ffff" stroke-width="1" fill="#00ffff"/>
<text transform="translate(234.18 524) rotate(-90)" font-size="4.4" fill="#00ffff" stroke="#00ffff" stroke-width="0.35" textLength="10.5" lengthAdjust="spacingAndGlyphs" font-weight="bold">????</text>
<text transform="translate(262.98 524) rotate(-90)" font-size="4.4" fill="#00ffff" stroke="#00ffff" stroke-width="0.35" textLength="10.5" lengthAdjust="spacingAndGlyphs" font-weight="bold">????</text>
<polyline points="174.5,509.5 174.5,516.9 194,516.9 194,526.2 266.5,526.2" stroke="#00ffff" stroke-width="1" fill="none"/>
<circle cx="180.5" cy="516.9" r="1" stroke="#00ffff" stroke-width="1" fill="none"/>
<circle cx="183" cy="516.9" r="1" stroke="#00ffff" stroke-width="1" fill="none"/>
<polygon points="190.5,521.6 194,520 194,523.2" stroke="#00ffff" stroke-width="1" fill="#00ffff"/>
<text x="200.3" y="523.86" font-size="4.32" fill="#00ffff" textLength="13.2" lengthAdjust="spacingAndGlyphs" font-weight="bold" stroke="#00ffff" stroke-width="0.3">????</text>
<polyline points="171,535.4 302.2,535.4 302.2,509.5" stroke="#00ffff" stroke-width="1" fill="none"/>
<rect x="173" y="530.9" width="32.7" height="7.9" stroke="#ffffff" stroke-width="1" fill="none"/>
<rect x="173" y="530.9" width="32.7" height="7.9" stroke="#ffffff" stroke-width="1" fill="none"/>
<text x="177" y="533.86" font-size="3.78" fill="#00ffff" textLength="8" lengthAdjust="spacingAndGlyphs" font-weight="bold" stroke="#00ffff" stroke-width="0.3">???</text>
<circle cx="178" cy="535.4" r="1" stroke="#00ffff" stroke-width="1" fill="none"/>
<circle cx="180.4" cy="535.4" r="1" stroke="#00ffff" stroke-width="1" fill="none"/>
<circle cx="187.5" cy="535.4" r="1" stroke="#00ffff" stroke-width="1" fill="none"/>
<circle cx="189.9" cy="535.4" r="1" stroke="#00ffff" stroke-width="1" fill="none"/>
<circle cx="197" cy="535.4" r="1" stroke="#00ffff" stroke-width="1" fill="none"/>
<circle cx="199.4" cy="535.4" r="1" stroke="#00ffff" stroke-width="1" fill="none"/>
<line x1="198.5" y1="532.8" x2="198.5" y2="537" stroke="#00ffff" stroke-width="1"/>
<line x1="197.1" y1="532.8" x2="199.9" y2="532.8" stroke="#00ffff" stroke-width="1"/>
<text x="175.1" y="529.16" font-size="4.32" fill="#ffffff" textLength="9.2" lengthAdjust="spacingAndGlyphs" stroke="#ffffff" stroke-width="0.3">???</text>
<text x="189.2" y="529.09" font-size="4.14" fill="#00ffff" textLength="9.7" lengthAdjust="spacingAndGlyphs" font-weight="bold" stroke="#00ffff" stroke-width="0.3">DWD</text>
<text x="227.1" y="533.76" font-size="4.32" fill="#00ffff" textLength="10.8" lengthAdjust="spacingAndGlyphs" font-weight="bold" stroke="#00ffff" stroke-width="0.3">????</text>
<text x="276.8" y="507.96" font-size="4.32" fill="#ffffff" textLength="12.7" lengthAdjust="spacingAndGlyphs" font-weight="bold" stroke="#ffffff" stroke-width="0.3">????</text>
<line x1="212" y1="535.4" x2="212" y2="534" stroke="#00ffff" stroke-width="1"/>
<line x1="238" y1="535.4" x2="238" y2="534" stroke="#00ffff" stroke-width="1"/>
<line x1="262" y1="535.4" x2="262" y2="534" stroke="#00ffff" stroke-width="1"/>
<line x1="285" y1="535.4" x2="285" y2="534" stroke="#00ffff" stroke-width="1"/>
<text x="187.5" y="460.02" font-size="4.5" fill="#ffffff" textLength="6.5" lengthAdjust="spacingAndGlyphs" stroke="#ffffff" stroke-width="0.3">??</text>
<line x1="183.3" y1="462.2" x2="203.8" y2="462.2" stroke="#ffffff" stroke-width="1"/>
<line x1="203.8" y1="462.2" x2="221.3" y2="471.1" stroke="#ffffff" stroke-width="1"/>
<text x="184" y="466.52" font-size="4.5" fill="#ffffff" textLength="16" lengthAdjust="spacingAndGlyphs" font-weight="bold" stroke="#ffffff" stroke-width="0.3">?????</text>
<line x1="203.4" y1="463.2" x2="204.6" y2="465.4" stroke="#ffffff" stroke-width="1"/>
<text x="194.6" y="471.12" font-size="4.5" fill="#ffffff" textLength="6.2" lengthAdjust="spacingAndGlyphs" stroke="#ffffff" stroke-width="0.3">??</text>
<line x1="194" y1="473.2" x2="205.7" y2="473.2" stroke="#ffffff" stroke-width="1"/>
<line x1="205.7" y1="473.2" x2="221.3" y2="479.9" stroke="#ffffff" stroke-width="1"/>
<text x="184.3" y="479.02" font-size="4.5" fill="#ffffff" textLength="12.7" lengthAdjust="spacingAndGlyphs" stroke="#ffffff" stroke-width="0.3">????</text>
<line x1="181.4" y1="480.4" x2="202.8" y2="480.4" stroke="#ffffff" stroke-width="1"/>
<line x1="202.8" y1="480.4" x2="219.4" y2="488.6" stroke="#ffffff" stroke-width="1"/>
<text x="181.4" y="485.02" font-size="4.5" fill="#ffffff" textLength="18.6" lengthAdjust="spacingAndGlyphs" font-weight="bold" stroke="#ffffff" stroke-width="0.3">??????</text>
<text x="189.6" y="490.22" font-size="4.5" fill="#ffffff" textLength="6.4" lengthAdjust="spacingAndGlyphs" stroke="#ffffff" stroke-width="0.3">??</text>
<line x1="180.4" y1="492.5" x2="203.8" y2="492.5" stroke="#ffffff" stroke-width="1"/>
<line x1="203.8" y1="492.5" x2="217.4" y2="498.4" stroke="#ffffff" stroke-width="1"/>
<text x="181" y="497.02" font-size="4.5" fill="#ffffff" textLength="22" lengthAdjust="spacingAndGlyphs" font-weight="bold" stroke="#ffffff" stroke-width="0.3">???????</text>
<text x="179.4" y="502.36" font-size="4.32" fill="#ffffff" textLength="9.8" lengthAdjust="spacingAndGlyphs" stroke="#ffffff" stroke-width="0.3">???</text>
<text x="193.2" y="502.29" font-size="4.14" fill="#00ffff" textLength="9.6" lengthAdjust="spacingAndGlyphs" font-weight="bold" stroke="#00ffff" stroke-width="0.3">DWD</text>
<text x="233.6" y="492.56" font-size="4.32" fill="#ffffff" textLength="6.8" lengthAdjust="spacingAndGlyphs" stroke="#ffffff" stroke-width="0.3">??</text>
<rect x="233" y="494" width="10.9" height="3.5" stroke="#00ffff" stroke-width="0" fill="#00ffff"/>
<text x="233.8" y="497.16" font-size="3.78" fill="#004040" textLength="9.6" lengthAdjust="spacingAndGlyphs" font-weight="bold" stroke="#004040" stroke-width="0.3">???</text>
<line x1="243.7" y1="498" x2="230" y2="508" stroke="#ffffff" stroke-width="1"/>
<text x="274.5" y="464.22" font-size="4.5" fill="#ffffff" textLength="12.1" lengthAdjust="spacingAndGlyphs" stroke="#ffffff" stroke-width="0.3">????</text>
<text x="292.4" y="464.56" font-size="4.32" fill="#ffffff" textLength="8.8" lengthAdjust="spacingAndGlyphs" font-weight="bold" stroke="#ffffff" stroke-width="0.3">???</text>
<line x1="273.9" y1="466.2" x2="301.2" y2="466.2" stroke="#ffffff" stroke-width="1"/>
<line x1="273.9" y1="466.2" x2="269" y2="468.4" stroke="#ffffff" stroke-width="1"/>
<text x="275" y="470.29" font-size="4.14" fill="#ffffff" textLength="18" lengthAdjust="spacingAndGlyphs" font-weight="bold" stroke="#ffffff" stroke-width="0.3">??????</text>
<text x="276.8" y="492.82" font-size="4.5" fill="#ffffff" textLength="11.7" lengthAdjust="spacingAndGlyphs" stroke="#ffffff" stroke-width="0.3">????</text>
<line x1="272" y1="495.5" x2="294.4" y2="495.5" stroke="#ffffff" stroke-width="1"/>
<line x1="272" y1="495.5" x2="268.6" y2="509.1" stroke="#ffffff" stroke-width="1"/>
<text x="274" y="500.42" font-size="4.5" fill="#ffffff" textLength="19" lengthAdjust="spacingAndGlyphs" font-weight="bold" stroke="#ffffff" stroke-width="0.3">??????</text>
<polygon points="215.2,544 231,544 223.1,553.2" stroke="#ffffff" stroke-width="1" fill="none"/>
<line x1="223.1" y1="553.1" x2="223.1" y2="576.1" stroke="#ffffff" stroke-width="1"/>
<line x1="218.7" y1="553.9" x2="227.9" y2="553.9" stroke="#ffffff" stroke-width="1"/>
<rect x="220.7" y="558.4" width="5" height="2.8" stroke="#ffffff" stroke-width="0" fill="#ffffff"/>
<line x1="219.7" y1="558.4" x2="219.7" y2="561.2" stroke="#ffffff" stroke-width="1"/>
<line x1="225.7" y1="559.2" x2="227.9" y2="558.2" stroke="#ffffff" stroke-width="1"/>
<rect x="221.7" y="568" width="2.8" height="4" stroke="#ffffff" stroke-width="1" fill="none"/>
<polygon points="217.2,592.8 217.2,582.6 219.7,580.6 226.1,580.6 228.6,582.6 228.6,592.8 223.3,600.6 222.3,600.6" stroke="#ffffff" stroke-width="1" fill="none"/>
<line x1="217.2" y1="582.6" x2="228.6" y2="582.6" stroke="#ffffff" stroke-width="1"/>
<line x1="217.9" y1="587.2" x2="219.7" y2="587.2" stroke="#ffffff" stroke-width="1"/>
<rect x="215.1" y="575.2" width="3.2" height="2.4" stroke="#ffffff" stroke-width="0" fill="#ffffff"/>
<circle cx="222.5" cy="576.6" r="1.7" stroke="#ffffff" stroke-width="1" fill="none"/>
<line x1="218.3" y1="576.6" x2="220.7" y2="576.6" stroke="#ffffff" stroke-width="1"/>
<polyline points="229.5,546.5 232.6,546.5 232.6,577.4 227.4,577.4 227.4,581.1" stroke="#ffffff" stroke-width="1" fill="none"/>
<text transform="translate(237.18 554.1) rotate(-90)" font-size="4.4" fill="#ffffff" stroke="#ffffff" stroke-width="0.35" textLength="7.6" lengthAdjust="spacingAndGlyphs" font-weight="bold">???</text>
<circle cx="232.6" cy="561.9" r="1.2" stroke="#ffffff" stroke-width="1" fill="none"/>
<line x1="231.2" y1="559.1" x2="236.6" y2="559.1" stroke="#ffffff" stroke-width="1"/>
<rect x="234.2" y="558.5" width="2.4" height="2.4" stroke="#ffffff" stroke-width="0" fill="#ffffff"/>
<polygon points="248.6,544 264.4,544 256.5,553.2" stroke="#ffffff" stroke-width="1" fill="none"/>
<line x1="256.5" y1="553.1" x2="256.5" y2="576.1" stroke="#ffffff" stroke-width="1"/>
<line x1="252.1" y1="553.9" x2="261.3" y2="553.9" stroke="#ffffff" stroke-width="1"/>
<rect x="254.1" y="558.4" width="5" height="2.8" stroke="#ffffff" stroke-width="0" fill="#ffffff"/>
<line x1="253.1" y1="558.4" x2="253.1" y2="561.2" stroke="#ffffff" stroke-width="1"/>
<line x1="259.1" y1="559.2" x2="261.3" y2="558.2" stroke="#ffffff" stroke-width="1"/>
<rect x="255.1" y="568" width="2.8" height="4" stroke="#ffffff" stroke-width="1" fill="none"/>
<polygon points="250.6,592.8 250.6,582.6 253.1,580.6 259.5,580.6 262,582.6 262,592.8 256.7,600.6 255.7,600.6" stroke="#ffffff" stroke-width="1" fill="none"/>
<line x1="250.6" y1="582.6" x2="262" y2="582.6" stroke="#ffffff" stroke-width="1"/>
<line x1="251.3" y1="587.2" x2="253.1" y2="587.2" stroke="#ffffff" stroke-width="1"/>
<rect x="248.5" y="575.2" width="3.2" height="2.4" stroke="#ffffff" stroke-width="0" fill="#ffffff"/>
<circle cx="255.9" cy="576.6" r="1.7" stroke="#ffffff" stroke-width="1" fill="none"/>
<line x1="251.7" y1="576.6" x2="254.1" y2="576.6" stroke="#ffffff" stroke-width="1"/>
<polyline points="262.9,546.5 266,546.5 266,577.4 260.8,577.4 260.8,581.1" stroke="#ffffff" stroke-width="1" fill="none"/>
<text transform="translate(270.58 554.1) rotate(-90)" font-size="4.4" fill="#ffffff" stroke="#ffffff" stroke-width="0.35" textLength="7.6" lengthAdjust="spacingAndGlyphs" font-weight="bold">???</text>
<circle cx="266" cy="561.9" r="1.2" stroke="#ffffff" stroke-width="1" fill="none"/>
<line x1="264.6" y1="559.1" x2="270" y2="559.1" stroke="#ffffff" stroke-width="1"/>
<rect x="267.6" y="558.5" width="2.4" height="2.4" stroke="#ffffff" stroke-width="0" fill="#ffffff"/>
<line x1="171" y1="597.6" x2="217.5" y2="597.6" stroke="#00ffff" stroke-width="1"/>
<line x1="228" y1="597.6" x2="251" y2="597.6" stroke="#ffffff" stroke-width="1.4"/>
<line x1="262" y1="597.6" x2="268" y2="597.6" stroke="#ffffff" stroke-width="1.4"/>
<line x1="268" y1="597.6" x2="309.6" y2="597.6" stroke="#00ff00" stroke-width="1"/>
<rect x="231" y="596.4" width="2" height="2.4" stroke="#ffffff" stroke-width="0" fill="#ffffff"/>
<rect x="235.9" y="596.4" width="2" height="2.4" stroke="#ffffff" stroke-width="0" fill="#ffffff"/>
<rect x="240.8" y="596.4" width="2" height="2.4" stroke="#ffffff" stroke-width="0" fill="#ffffff"/>
<rect x="245.6" y="596.4" width="2" height="2.4" stroke="#ffffff" stroke-width="0" fill="#ffffff"/>
<rect x="261.2" y="596.4" width="2" height="2.4" stroke="#ffffff" stroke-width="0" fill="#ffffff"/>
<rect x="264.5" y="596.4" width="2" height="2.4" stroke="#ffffff" stroke-width="0" fill="#ffffff"/>
<rect x="271.5" y="596.4" width="2" height="2.4" stroke="#ffffff" stroke-width="0" fill="#ffffff"/>
<rect x="176" y="592.3" width="32.6" height="8.3" stroke="#ffffff" stroke-width="1" fill="none"/>
<text x="180" y="595.26" font-size="3.78" fill="#00ffff" textLength="8" lengthAdjust="spacingAndGlyphs" font-weight="bold" stroke="#00ffff" stroke-width="0.3">???</text>
<circle cx="181" cy="597.6" r="1" stroke="#00ffff" stroke-width="1" fill="none"/>
<circle cx="183.4" cy="597.6" r="1" stroke="#00ffff" stroke-width="1" fill="none"/>
<circle cx="190.5" cy="597.6" r="1" stroke="#00ffff" stroke-width="1" fill="none"/>
<circle cx="192.9" cy="597.6" r="1" stroke="#00ffff" stroke-width="1" fill="none"/>
<circle cx="200" cy="597.6" r="1" stroke="#00ffff" stroke-width="1" fill="none"/>
<circle cx="202.4" cy="597.6" r="1" stroke="#00ffff" stroke-width="1" fill="none"/>
<line x1="201.4" y1="595" x2="201.4" y2="599.2" stroke="#00ffff" stroke-width="1"/>
<line x1="200" y1="595" x2="202.8" y2="595" stroke="#00ffff" stroke-width="1"/>
<line x1="219.4" y1="599" x2="219.4" y2="614.2" stroke="#00ffff" stroke-width="1"/>
<polygon points="218.3,608.74 220.5,608.74 219.4,610.94" stroke="#00ffff" stroke-width="1" fill="#00ffff"/>
<line x1="223.3" y1="599" x2="223.3" y2="614.2" stroke="#00ffff" stroke-width="1"/>
<polygon points="222.2,608.74 224.4,608.74 223.3,610.94" stroke="#00ffff" stroke-width="1" fill="#00ffff"/>
<line x1="232" y1="599" x2="232" y2="614.2" stroke="#00ffff" stroke-width="1"/>
<polygon points="230.9,608.74 233.1,608.74 232,610.94" stroke="#00ffff" stroke-width="1" fill="#00ffff"/>
<line x1="236.9" y1="599" x2="236.9" y2="614.2" stroke="#00ffff" stroke-width="1"/>
<polygon points="235.8,608.74 238,608.74 236.9,610.94" stroke="#00ffff" stroke-width="1" fill="#00ffff"/>
<line x1="241.8" y1="599" x2="241.8" y2="614.2" stroke="#00ffff" stroke-width="1"/>
<polygon points="240.7,608.74 242.9,608.74 241.8,610.94" stroke="#00ffff" stroke-width="1" fill="#00ffff"/>
<line x1="246.6" y1="599" x2="246.6" y2="614.2" stroke="#00ffff" stroke-width="1"/>
<polygon points="245.5,608.74 247.7,608.74 246.6,610.94" stroke="#00ffff" stroke-width="1" fill="#00ffff"/>
<line x1="257.3" y1="599" x2="257.3" y2="614.2" stroke="#00ffff" stroke-width="1"/>
<polygon points="256.2,608.74 258.4,608.74 257.3,610.94" stroke="#00ffff" stroke-width="1" fill="#00ffff"/>
<line x1="262.2" y1="599" x2="262.2" y2="614.2" stroke="#00ffff" stroke-width="1"/>
<polygon points="261.1,608.74 263.3,608.74 262.2,610.94" stroke="#00ffff" stroke-width="1" fill="#00ffff"/>
<text transform="translate(222.38 612.2) rotate(-90)" font-size="4.4" fill="#00ffff" stroke="#00ffff" stroke-width="0.35" textLength="10.7" lengthAdjust="spacingAndGlyphs" font-weight="bold">????</text>
<text transform="translate(235.38 612.2) rotate(-90)" font-size="4.4" fill="#00ffff" stroke="#00ffff" stroke-width="0.35" textLength="10.7" lengthAdjust="spacingAndGlyphs" font-weight="bold">????</text>
<text transform="translate(260.58 612.2) rotate(-90)" font-size="4.4" fill="#00ffff" stroke="#00ffff" stroke-width="0.35" textLength="10.7" lengthAdjust="spacingAndGlyphs" font-weight="bold">????</text>
<line x1="272.5" y1="597.6" x2="272.5" y2="614.4" stroke="#00ffff" stroke-width="1" stroke-dasharray="3 1.4"/>
<polyline points="174.5,597.6 174.5,604 194,604 194,614.4 272.5,614.4" stroke="#00ffff" stroke-width="1" fill="none"/>
<circle cx="180.5" cy="604" r="1" stroke="#00ffff" stroke-width="1" fill="none"/>
<circle cx="183" cy="604" r="1" stroke="#00ffff" stroke-width="1" fill="none"/>
<polygon points="190.5,609.4 194,607.8 194,611" stroke="#00ffff" stroke-width="1" fill="#00ffff"/>
<text x="199.9" y="611.46" font-size="4.32" fill="#00ffff" textLength="13.6" lengthAdjust="spacingAndGlyphs" font-weight="bold" stroke="#00ffff" stroke-width="0.3">?????</text>
<polyline points="171,624.1 309.6,624.1 309.6,597.6" stroke="#00ffff" stroke-width="1" fill="none"/>
<rect x="173" y="618.3" width="32.7" height="8.2" stroke="#ffffff" stroke-width="1" fill="none"/>
<text x="177" y="621.26" font-size="3.78" fill="#00ffff" textLength="8" lengthAdjust="spacingAndGlyphs" font-weight="bold" stroke="#00ffff" stroke-width="0.3">???</text>
<circle cx="178" cy="624.1" r="1" stroke="#00ffff" stroke-width="1" fill="none"/>
<circle cx="180.4" cy="624.1" r="1" stroke="#00ffff" stroke-width="1" fill="none"/>
<circle cx="187.5" cy="624.1" r="1" stroke="#00ffff" stroke-width="1" fill="none"/>
<circle cx="189.9" cy="624.1" r="1" stroke="#00ffff" stroke-width="1" fill="none"/>
<circle cx="197" cy="624.1" r="1" stroke="#00ffff" stroke-width="1" fill="none"/>
<circle cx="199.4" cy="624.1" r="1" stroke="#00ffff" stroke-width="1" fill="none"/>
<line x1="198.5" y1="621.5" x2="198.5" y2="625.7" stroke="#00ffff" stroke-width="1"/>
<line x1="197.1" y1="621.5" x2="199.9" y2="621.5" stroke="#00ffff" stroke-width="1"/>
<text x="175.5" y="617.26" font-size="4.32" fill="#ffffff" textLength="8.8" lengthAdjust="spacingAndGlyphs" stroke="#ffffff" stroke-width="0.3">???</text>
<text x="189.7" y="617.19" font-size="4.14" fill="#00ffff" textLength="9.2" lengthAdjust="spacingAndGlyphs" font-weight="bold" stroke="#00ffff" stroke-width="0.3">DWD</text>
<text x="227" y="622.16" font-size="4.32" fill="#00ffff" textLength="11" lengthAdjust="spacingAndGlyphs" font-weight="bold" stroke="#00ffff" stroke-width="0.3">????</text>
<text x="287.2" y="595.56" font-size="4.32" fill="#00ff00" textLength="11.6" lengthAdjust="spacingAndGlyphs" font-weight="bold" stroke="#00ff00" stroke-width="0.3">????</text>
<line x1="212" y1="624.1" x2="212" y2="622.7" stroke="#00ffff" stroke-width="1"/>
<line x1="238" y1="624.1" x2="238" y2="622.7" stroke="#00ffff" stroke-width="1"/>
<line x1="262" y1="624.1" x2="262" y2="622.7" stroke="#00ffff" stroke-width="1"/>
<line x1="285" y1="624.1" x2="285" y2="622.7" stroke="#00ffff" stroke-width="1"/>
<line x1="300" y1="624.1" x2="300" y2="622.7" stroke="#00ffff" stroke-width="1"/>
<text transform="translate(167.86 632.3) rotate(-90)" font-size="4.6" fill="#00ffff" stroke="#00ffff" stroke-width="0.35" textLength="9.8" lengthAdjust="spacingAndGlyphs" font-weight="bold">???</text>
<text x="187.5" y="548.12" font-size="4.5" fill="#ffffff" textLength="6.5" lengthAdjust="spacingAndGlyphs" stroke="#ffffff" stroke-width="0.3">??</text>
<line x1="183.3" y1="550.3" x2="203.8" y2="550.3" stroke="#ffffff" stroke-width="1"/>
<line x1="203.8" y1="550.3" x2="221.3" y2="559.2" stroke="#ffffff" stroke-width="1"/>
<text x="184" y="554.62" font-size="4.5" fill="#ffffff" textLength="16" lengthAdjust="spacingAndGlyphs" font-weight="bold" stroke="#ffffff" stroke-width="0.3">?????</text>
<line x1="203.4" y1="551.3" x2="204.6" y2="553.5" stroke="#ffffff" stroke-width="1"/>
<text x="194.6" y="559.22" font-size="4.5" fill="#ffffff" textLength="6.2" lengthAdjust="spacingAndGlyphs" stroke="#ffffff" stroke-width="0.3">??</text>
<line x1="194" y1="561.3" x2="205.7" y2="561.3" stroke="#ffffff" stroke-width="1"/>
<line x1="205.7" y1="561.3" x2="221.3" y2="568" stroke="#ffffff" stroke-width="1"/>
<text x="184.3" y="567.12" font-size="4.5" fill="#ffffff" textLength="12.7" lengthAdjust="spacingAndGlyphs" stroke="#ffffff" stroke-width="0.3">????</text>
<line x1="181.4" y1="568.5" x2="202.8" y2="568.5" stroke="#ffffff" stroke-width="1"/>
<line x1="202.8" y1="568.5" x2="219.4" y2="576.7" stroke="#ffffff" stroke-width="1"/>
<text x="181.4" y="573.12" font-size="4.5" fill="#ffffff" textLength="18.6" lengthAdjust="spacingAndGlyphs" font-weight="bold" stroke="#ffffff" stroke-width="0.3">??????</text>
<text x="189.6" y="578.32" font-size="4.5" fill="#ffffff" textLength="6.4" lengthAdjust="spacingAndGlyphs" stroke="#ffffff" stroke-width="0.3">??</text>
<line x1="180.4" y1="580.6" x2="203.8" y2="580.6" stroke="#ffffff" stroke-width="1"/>
<line x1="203.8" y1="580.6" x2="217.4" y2="586.5" stroke="#ffffff" stroke-width="1"/>
<text x="181" y="585.12" font-size="4.5" fill="#ffffff" textLength="22" lengthAdjust="spacingAndGlyphs" font-weight="bold" stroke="#ffffff" stroke-width="0.3">???????</text>
<text x="179.4" y="590.46" font-size="4.32" fill="#ffffff" textLength="9.8" lengthAdjust="spacingAndGlyphs" stroke="#ffffff" stroke-width="0.3">???</text>
<text x="193.2" y="590.39" font-size="4.14" fill="#00ffff" textLength="9.6" lengthAdjust="spacingAndGlyphs" font-weight="bold" stroke="#00ffff" stroke-width="0.3">DWD</text>
<text x="233.6" y="579.86" font-size="4.32" fill="#ffffff" textLength="6.8" lengthAdjust="spacingAndGlyphs" stroke="#ffffff" stroke-width="0.3">??</text>
<rect x="233" y="581.7" width="10.9" height="3.5" stroke="#00ffff" stroke-width="0" fill="#00ffff"/>
<text x="233.8" y="584.86" font-size="3.78" fill="#004040" textLength="9.6" lengthAdjust="spacingAndGlyphs" font-weight="bold" stroke="#004040" stroke-width="0.3">???</text>
<line x1="243.7" y1="586.1" x2="230" y2="596.1" stroke="#ffffff" stroke-width="1"/>
<text x="275.3" y="550.02" font-size="4.5" fill="#ffffff" textLength="13.2" lengthAdjust="spacingAndGlyphs" stroke="#ffffff" stroke-width="0.3">????</text>
<text x="293.4" y="550.36" font-size="4.32" fill="#ffffff" textLength="9.7" lengthAdjust="spacingAndGlyphs" font-weight="bold" stroke="#ffffff" stroke-width="0.3">???</text>
<line x1="275.9" y1="551.8" x2="303.1" y2="551.8" stroke="#ffffff" stroke-width="1"/>
<line x1="275.9" y1="551.8" x2="269" y2="556.4" stroke="#ffffff" stroke-width="1"/>
<text x="277" y="555.89" font-size="4.14" fill="#ffffff" textLength="18" lengthAdjust="spacingAndGlyphs" font-weight="bold" stroke="#ffffff" stroke-width="0.3">??????</text>
<text x="274.5" y="578.42" font-size="4.5" fill="#ffffff" textLength="12.1" lengthAdjust="spacingAndGlyphs" stroke="#ffffff" stroke-width="0.3">?? ??</text>
<line x1="269" y1="579.7" x2="292.4" y2="579.7" stroke="#ffffff" stroke-width="1"/>
<line x1="269" y1="579.7" x2="264.2" y2="594.3" stroke="#ffffff" stroke-width="1"/>
<text x="272" y="584.62" font-size="4.5" fill="#ffffff" textLength="19" lengthAdjust="spacingAndGlyphs" font-weight="bold" stroke="#ffffff" stroke-width="0.3">??????</text>
<text transform="translate(299.26 479.9) rotate(-90)" font-size="4.6" fill="#00ff00" stroke="#00ff00" stroke-width="0.35" textLength="10.7" lengthAdjust="spacingAndGlyphs" font-weight="bold">????</text>
<text transform="translate(307.06 479.9) rotate(-90)" font-size="4.6" fill="#00ff00" stroke="#00ff00" stroke-width="0.35" textLength="10.7" lengthAdjust="spacingAndGlyphs" font-weight="bold">????</text>
<line x1="302.2" y1="491.5" x2="348.7" y2="491.5" stroke="#00ff00" stroke-width="2"/>
<polygon points="314.5,493 314.5,489.6 316.4,489.6 316.4,486.8 318.2,486.8 318.2,489.6 320.4,489.6 320.4,493" stroke="#00ff00" stroke-width="1" fill="#00ff00"/>
<text x="323" y="489.22" font-size="4.5" fill="#00ff00" textLength="19.3" lengthAdjust="spacingAndGlyphs" font-weight="bold" stroke="#00ff00" stroke-width="0.3">??????</text>
<text x="328.6" y="496.96" font-size="4.32" fill="#00ff00" textLength="9.6" lengthAdjust="spacingAndGlyphs" font-weight="bold" stroke="#00ff00" stroke-width="0.3">???</text>
<line x1="309.6" y1="579.4" x2="348.7" y2="579.4" stroke="#00ff00" stroke-width="1.1"/>
<circle cx="315.2" cy="579.4" r="1.3" stroke="#00ff00" stroke-width="1" fill="none"/>
<circle cx="318.2" cy="579.4" r="1.3" stroke="#00ff00" stroke-width="1" fill="none"/>
<polygon points="315,577.4 316.7,574.8 318.4,577.4" stroke="#00ff00" stroke-width="1" fill="#00ff00"/>
<text x="323" y="577.02" font-size="4.5" fill="#00ff00" textLength="19" lengthAdjust="spacingAndGlyphs" font-weight="bold" stroke="#00ff00" stroke-width="0.3">??????</text>
<text x="328.6" y="584.56" font-size="4.32" fill="#00ff00" textLength="9.6" lengthAdjust="spacingAndGlyphs" font-weight="bold" stroke="#00ff00" stroke-width="0.3">???</text>
</g>
<line x1="126.4" y1="638" x2="126.4" y2="643.4" stroke="#00ffff" stroke-width="1"/>
<line x1="663.6" y1="638" x2="663.6" y2="643.4" stroke="#00ffff" stroke-width="1"/>
<line x1="126.4" y1="640.8" x2="663.6" y2="640.8" stroke="#00ffff" stroke-width="1" stroke-dasharray="20 5"/>
<line x1="139.5" y1="640.8" x2="139.5" y2="642.4" stroke="#00ffff" stroke-width="1"/>
<line x1="164.5" y1="640.8" x2="164.5" y2="642.4" stroke="#00ffff" stroke-width="1"/>
<line x1="189.5" y1="640.8" x2="189.5" y2="642.4" stroke="#00ffff" stroke-width="1"/>
<line x1="214.5" y1="640.8" x2="214.5" y2="642.4" stroke="#00ffff" stroke-width="1"/>
<line x1="239.5" y1="640.8" x2="239.5" y2="642.4" stroke="#00ffff" stroke-width="1"/>
<line x1="264.5" y1="640.8" x2="264.5" y2="642.4" stroke="#00ffff" stroke-width="1"/>
<line x1="289.5" y1="640.8" x2="289.5" y2="642.4" stroke="#00ffff" stroke-width="1"/>
<line x1="314.5" y1="640.8" x2="314.5" y2="642.4" stroke="#00ffff" stroke-width="1"/>
<line x1="339.5" y1="640.8" x2="339.5" y2="642.4" stroke="#00ffff" stroke-width="1"/>
<line x1="364.5" y1="640.8" x2="364.5" y2="642.4" stroke="#00ffff" stroke-width="1"/>
<line x1="389.5" y1="640.8" x2="389.5" y2="642.4" stroke="#00ffff" stroke-width="1"/>
<line x1="414.5" y1="640.8" x2="414.5" y2="642.4" stroke="#00ffff" stroke-width="1"/>
<line x1="439.5" y1="640.8" x2="439.5" y2="642.4" stroke="#00ffff" stroke-width="1"/>
<line x1="464.5" y1="640.8" x2="464.5" y2="642.4" stroke="#00ffff" stroke-width="1"/>
<line x1="489.5" y1="640.8" x2="489.5" y2="642.4" stroke="#00ffff" stroke-width="1"/>
<line x1="514.5" y1="640.8" x2="514.5" y2="642.4" stroke="#00ffff" stroke-width="1"/>
<line x1="539.5" y1="640.8" x2="539.5" y2="642.4" stroke="#00ffff" stroke-width="1"/>
<line x1="564.5" y1="640.8" x2="564.5" y2="642.4" stroke="#00ffff" stroke-width="1"/>
<line x1="589.5" y1="640.8" x2="589.5" y2="642.4" stroke="#00ffff" stroke-width="1"/>
<line x1="614.5" y1="640.8" x2="614.5" y2="642.4" stroke="#00ffff" stroke-width="1"/>
<line x1="639.5" y1="640.8" x2="639.5" y2="642.4" stroke="#00ffff" stroke-width="1"/>
<text x="216.4" y="638.76" font-size="4.32" fill="#00ffff" textLength="14.6" lengthAdjust="spacingAndGlyphs" font-weight="bold" stroke="#00ffff" stroke-width="0.3">?????</text>
<text x="523" y="638.76" font-size="4.32" fill="#00ffff" textLength="15.5" lengthAdjust="spacingAndGlyphs" font-weight="bold" stroke="#00ffff" stroke-width="0.3">?????</text>
<line x1="421.2" y1="640.8" x2="421.2" y2="647" stroke="#00ffff" stroke-width="1"/>
<line x1="421.2" y1="651.8" x2="421.2" y2="664.4" stroke="#ffffff" stroke-width="1"/>
<line x1="419.6" y1="664.4" x2="423.4" y2="664.4" stroke="#ffffff" stroke-width="1"/>
<line x1="369" y1="659.2" x2="407" y2="659.2" stroke="#ffffff" stroke-width="1"/>
<line x1="407" y1="659.2" x2="421.2" y2="652.3" stroke="#ffffff" stroke-width="1"/>
<text x="374.8" y="658.16" font-size="4.32" fill="#ffffff" textLength="20.5" lengthAdjust="spacingAndGlyphs" font-weight="bold" stroke="#ffffff" stroke-width="0.3">???????</text>
<text x="370" y="665.62" font-size="4.5" fill="#ffffff" textLength="33" lengthAdjust="spacingAndGlyphs" font-weight="bold" stroke="#ffffff" stroke-width="0.3">???????????</text>
</svg>
</body></html>
